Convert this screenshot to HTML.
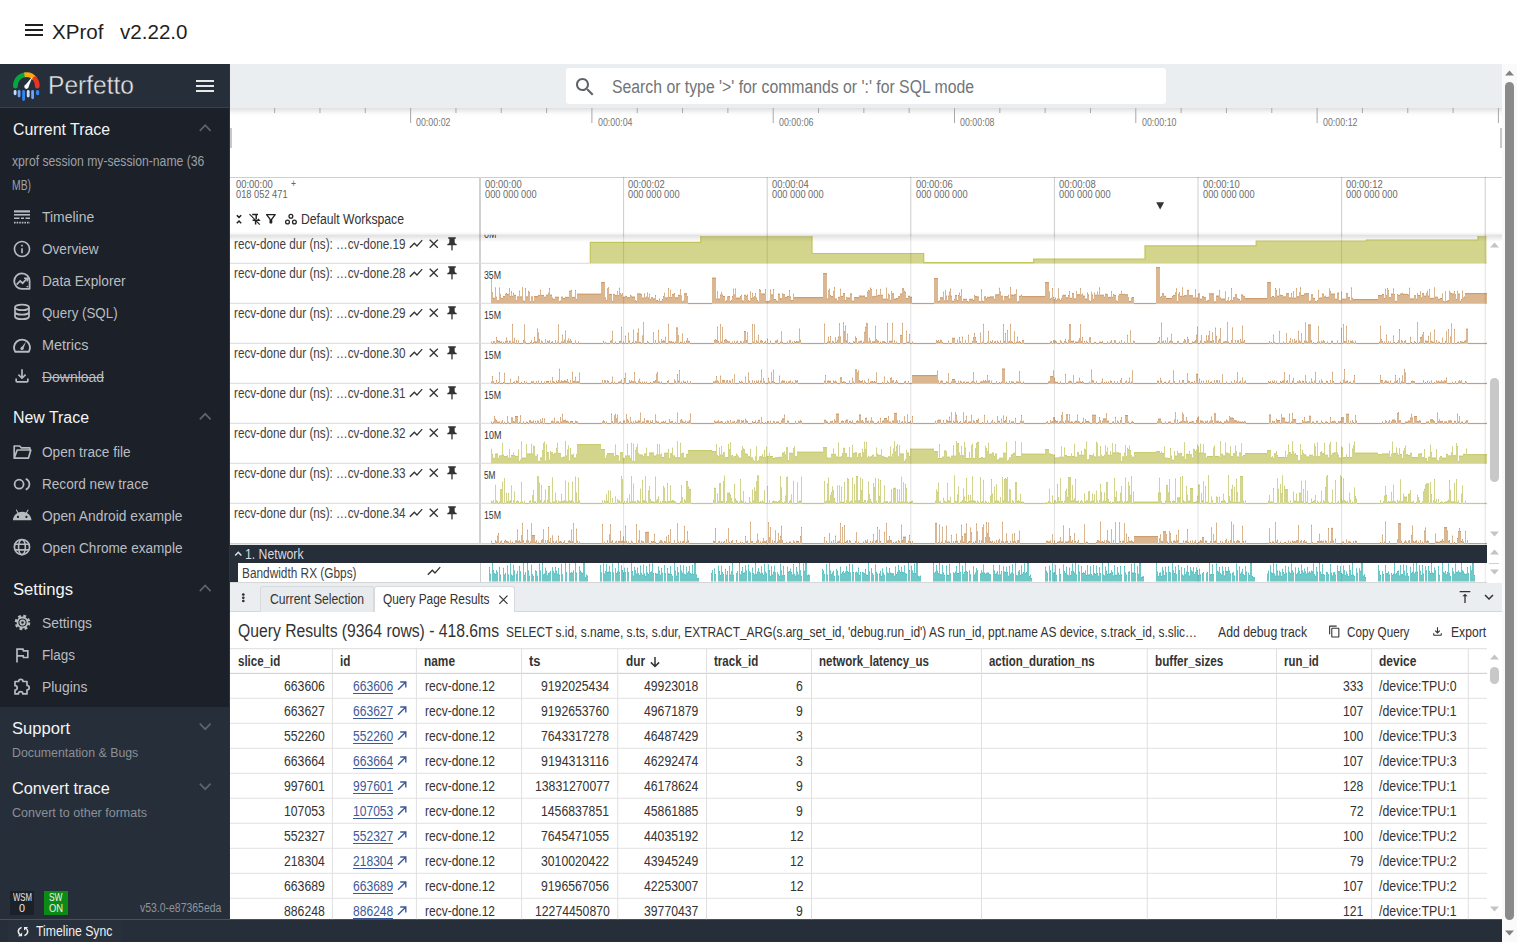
<!DOCTYPE html><html><head><meta charset="utf-8"><style>
html,body{margin:0;padding:0;width:1517px;height:942px;overflow:hidden;background:#fff;font-family:"Liberation Sans", sans-serif;}
.t{position:absolute;white-space:nowrap;transform-origin:0 0;}
.r{position:absolute;}
</style></head><body>
<div class="r" style="left:0px;top:0px;width:1517px;height:64px;background:#fff;"></div>
<div class="r" style="left:25px;top:23.8px;width:18px;height:2.1px;background:#1f1f1f;"></div>
<div class="r" style="left:25px;top:28.9px;width:18px;height:2.1px;background:#1f1f1f;"></div>
<div class="r" style="left:25px;top:34px;width:18px;height:2.1px;background:#1f1f1f;"></div>
<div class="t" style="left:52.00px;top:21.02px;font-size:21px;line-height:21px;color:#1f1f1f;transform:scaleX(0.9805);">XProf</div>
<div class="t" style="left:120.00px;top:21.02px;font-size:21px;line-height:21px;color:#1f1f1f;transform:scaleX(0.9799);">v2.22.0</div>
<div class="r" style="left:0px;top:64px;width:230px;height:43px;background:#262e3a;"></div>
<div class="r" style="left:0px;top:107px;width:230px;height:1px;background:#3b424d;"></div>
<div class="r" style="left:0px;top:108px;width:230px;height:599px;background:#1b2029;"></div>
<div class="r" style="left:0px;top:707px;width:230px;height:212px;background:#262e3a;"></div>
<div class="r" style="left:228.5px;top:64px;width:1.5px;height:855px;background:#2c333e;"></div>
<svg class="r" style="left:0px;top:60px;" width="50" height="50" viewBox="0 60 50 50"><path d="M15.46 86.17 A10.9 10.9 0 0 1 24.46 74.87" fill="none" stroke="#04a640" stroke-width="4.8" stroke-linecap="round"/><path d="M24.46 74.87 A10.9 10.9 0 0 1 34.94 78.89" fill="none" stroke="#fbac04" stroke-width="4.8" stroke-linecap="butt"/><path d="M34.94 78.89 A10.9 10.9 0 0 1 37.24 86.17" fill="none" stroke="#ea3323" stroke-width="4.8" stroke-linecap="round"/><path d="M24.4 86.0 L32.6 76.4 L28.3 87.6 Z" fill="#fafafa"/><circle cx="26.4" cy="86.8" r="2.1" fill="#fafafa"/><line x1="15.1" y1="91.40" x2="15.1" y2="93.80" stroke="#c6dcff" stroke-width="2.8" stroke-linecap="round"/><line x1="19.1" y1="91.40" x2="19.1" y2="96.10" stroke="#6ea2f7" stroke-width="2.8" stroke-linecap="round"/><line x1="23.6" y1="91.40" x2="23.6" y2="99.50" stroke="#2f86f6" stroke-width="2.8" stroke-linecap="round"/><line x1="28.2" y1="91.40" x2="28.2" y2="96.10" stroke="#c6dcff" stroke-width="2.8" stroke-linecap="round"/><line x1="32.6" y1="91.40" x2="32.6" y2="97.80" stroke="#6ea2f7" stroke-width="2.8" stroke-linecap="round"/><line x1="37.6" y1="91.60" x2="37.6" y2="93.60" stroke="#2f86f6" stroke-width="3.2" stroke-linecap="round"/></svg>
<div class="t" style="left:48.00px;top:72.83px;font-size:25px;line-height:25px;color:#e6e6e6;transform:scaleX(0.9823);-webkit-text-stroke:0.4px #262e3a;">Perfetto</div>
<div class="r" style="left:196px;top:79.7px;width:18.2px;height:2.1px;background:#e8e8e8;"></div>
<div class="r" style="left:196px;top:85px;width:18.2px;height:2.1px;background:#e8e8e8;"></div>
<div class="r" style="left:196px;top:90.2px;width:18.2px;height:2.1px;background:#e8e8e8;"></div>
<div class="t" style="left:12.50px;top:121.65px;font-size:16px;line-height:16px;color:#f4f4f4;transform:scaleX(0.9917);">Current Trace</div>
<svg class="r" style="left:0px;top:0px;" width="230" height="942" viewBox="0 0 230 942"><path d="M199.8 130.8 L205.2 125.2 L210.6 130.8" fill="none" stroke="#5d646e" stroke-width="1.7"/></svg>
<div class="t" style="left:12.20px;top:153.30px;font-size:15px;line-height:15px;color:#9da1a6;transform:scaleX(0.8122);">xprof session my-session-name (36</div>
<div class="t" style="left:12.20px;top:177.30px;font-size:15px;line-height:15px;color:#9da1a6;transform:scaleX(0.6910);">MB)</div>
<div class="t" style="left:42.20px;top:209.85px;font-size:14px;line-height:14px;color:#babdc1;transform:scaleX(0.9964);">Timeline</div>
<div class="t" style="left:42.20px;top:241.85px;font-size:14px;line-height:14px;color:#babdc1;transform:scaleX(0.9701);">Overview</div>
<div class="t" style="left:42.20px;top:273.85px;font-size:14px;line-height:14px;color:#babdc1;transform:scaleX(0.9767);">Data Explorer</div>
<div class="t" style="left:42.20px;top:305.85px;font-size:14px;line-height:14px;color:#babdc1;transform:scaleX(0.9527);">Query (SQL)</div>
<div class="t" style="left:42.20px;top:337.85px;font-size:14px;line-height:14px;color:#babdc1;transform:scaleX(1.0308);">Metrics</div>
<div class="t" style="left:42.20px;top:369.85px;font-size:14px;line-height:14px;color:#babdc1;transform:scaleX(0.9958);">Download</div>
<div class="r" style="left:42px;top:376.5px;width:62px;height:1.2px;background:#babdc1;"></div>
<svg class="r" style="left:14px;top:210px;" width="16" height="14" viewBox="0 0 16 14"><rect x="0" y="0.3" width="16" height="2.2" fill="#b8bbbf"/><rect x="0" y="4" width="16" height="1.6" fill="#b8bbbf"/><path d="M0 8.3h5.5M7 8.3h3M11.5 8.3h4.5" stroke="#b8bbbf" stroke-width="1.6"/><path d="M0 12.6h16" stroke="#b8bbbf" stroke-width="1.6" stroke-dasharray="1.6 1"/></svg>
<svg class="r" style="left:12px;top:239px;overflow:visible;" width="20" height="20" viewBox="0 0 24 24"><path d="M11 7h2v2h-2zm0 4h2v6h-2zm1-9C6.48 2 2 6.48 2 12s4.48 10 10 10 10-4.48 10-10S17.52 2 12 2zm0 18c-4.41 0-8-3.59-8-8s3.59-8 8-8 8 3.59 8 8-3.59 8-8 8z" fill="#b8bbbf"/></svg>
<svg class="r" style="left:0px;top:0px;" width="230" height="942" viewBox="0 0 230 942"><path d="M29.6 281.2 V288.8 H21.9 A7.7 7.7 0 1 1 29.6 281.2 Z" fill="none" stroke="#b8bbbf" stroke-width="1.8" stroke-linejoin="round"/><path d="M16.6 284.6 L20.2 281 L22.6 283.2 L26.6 279" fill="none" stroke="#b8bbbf" stroke-width="1.7"/><path d="M24.0 278.2 h3.3 v3.3" fill="none" stroke="#b8bbbf" stroke-width="1.6"/><circle cx="27.4" cy="286.6" r="0.9" fill="#b8bbbf"/></svg>
<svg class="r" style="left:13px;top:303px;" width="18" height="20" viewBox="0 0 18 20"><ellipse cx="9" cy="4.4" rx="7" ry="2.8" fill="none" stroke="#b8bbbf" stroke-width="1.7"/><path d="M2 4.4v9c0 1.55 3.1 2.8 7 2.8s7-1.25 7-2.8v-9M2 8.9c0 1.55 3.1 2.8 7 2.8s7-1.25 7-2.8" fill="none" stroke="#b8bbbf" stroke-width="1.7"/></svg>
<svg class="r" style="left:12px;top:335px;" width="20" height="20" viewBox="0 0 20 20"><path d="M3.2 16.8 A8 8 0 1 1 16.8 16.8 Z" fill="none" stroke="#b8bbbf" stroke-width="1.9" stroke-linejoin="round"/><path d="M9 13 L14 6.5 L11.2 14.2 Z" fill="#b8bbbf"/><circle cx="10" cy="13.4" r="1.6" fill="#b8bbbf"/></svg>
<svg class="r" style="left:12px;top:366px;overflow:visible;" width="20" height="20" viewBox="0 0 24 24"><path d="M18 15v3H6v-3H4v3c0 1.1.9 2 2 2h12c1.1 0 2-.9 2-2v-3h-2zm-1-4l-1.41-1.41L13 12.17V4h-2v8.17L8.41 9.59 7 11l5 5 5-5z" fill="#b8bbbf"/></svg>
<div class="t" style="left:12.50px;top:410.25px;font-size:16px;line-height:16px;color:#f4f4f4;transform:scaleX(0.9938);">New Trace</div>
<svg class="r" style="left:0px;top:0px;" width="230" height="942" viewBox="0 0 230 942"><path d="M199.8 419.4 L205.2 413.8 L210.6 419.4" fill="none" stroke="#5d646e" stroke-width="1.7"/></svg>
<div class="t" style="left:42.20px;top:444.55px;font-size:14px;line-height:14px;color:#babdc1;transform:scaleX(0.9731);">Open trace file</div>
<div class="t" style="left:42.20px;top:476.85px;font-size:14px;line-height:14px;color:#babdc1;transform:scaleX(0.9707);">Record new trace</div>
<div class="t" style="left:42.20px;top:508.75px;font-size:14px;line-height:14px;color:#babdc1;transform:scaleX(0.9864);">Open Android example</div>
<div class="t" style="left:42.20px;top:540.65px;font-size:14px;line-height:14px;color:#babdc1;transform:scaleX(0.9707);">Open Chrome example</div>
<svg class="r" style="left:0px;top:0px;" width="230" height="942" viewBox="0 0 230 942"><path d="M14.2 458.2V446h5.4l1.8 1.8h8.4v2.6M14.2 458.2h14.2l2.4-8.2H17.2z" fill="none" stroke="#b8bbbf" stroke-width="1.7" stroke-linejoin="round"/></svg>
<svg class="r" style="left:0px;top:0px;" width="230" height="942" viewBox="0 0 230 942"><circle cx="19.1" cy="484.2" r="4.5" fill="none" stroke="#b8bbbf" stroke-width="1.8"/><path d="M25.7 478.8 A5.8 5.8 0 0 1 25.7 489.6" fill="none" stroke="#b8bbbf" stroke-width="1.8"/></svg>
<svg class="r" style="left:11.95px;top:505.1px;overflow:visible;" width="20.4" height="20.4" viewBox="0 0 24 24"><path d="M17.6 9.48l1.84-3.18c.16-.31.04-.69-.26-.85-.29-.15-.65-.06-.83.22l-1.88 3.24c-2.86-1.21-6.08-1.21-8.94 0L5.65 5.67c-.19-.29-.58-.38-.87-.2-.28.18-.37.54-.22.83L6.4 9.48C3.3 11.25 1.28 14.44 1 18h22c-.28-3.56-2.3-6.75-5.4-8.52zM7 15.25c-.69 0-1.25-.56-1.25-1.25s.56-1.25 1.25-1.25 1.25.56 1.25 1.25-.56 1.25-1.25 1.25zm10 0c-.69 0-1.25-.56-1.25-1.25s.56-1.25 1.25-1.25 1.25.56 1.25 1.25-.56 1.25-1.25 1.25z" fill="#b8bbbf"/></svg>
<svg class="r" style="left:0px;top:0px;" width="230" height="942" viewBox="0 0 230 942"><circle cx="21.95" cy="547.1" r="7.6" fill="none" stroke="#b8bbbf" stroke-width="1.7"/><ellipse cx="21.95" cy="547.1" rx="3.4" ry="7.6" fill="none" stroke="#b8bbbf" stroke-width="1.6"/><path d="M14.6 544.3h14.7M14.6 549.9h14.7" stroke="#b8bbbf" stroke-width="1.6"/></svg>
<div class="t" style="left:12.50px;top:581.95px;font-size:16px;line-height:16px;color:#f4f4f4;transform:scaleX(1.0378);">Settings</div>
<svg class="r" style="left:0px;top:0px;" width="230" height="942" viewBox="0 0 230 942"><path d="M199.8 591.1 L205.2 585.5 L210.6 591.1" fill="none" stroke="#5d646e" stroke-width="1.7"/></svg>
<div class="t" style="left:42.20px;top:615.65px;font-size:14px;line-height:14px;color:#babdc1;transform:scaleX(0.9884);">Settings</div>
<div class="t" style="left:42.20px;top:647.65px;font-size:14px;line-height:14px;color:#babdc1;transform:scaleX(0.9639);">Flags</div>
<div class="t" style="left:42.20px;top:679.65px;font-size:14px;line-height:14px;color:#babdc1;transform:scaleX(0.9909);">Plugins</div>
<svg class="r" style="left:12.5px;top:613px;" width="19" height="19" viewBox="0 0 19 19"><circle cx="9.5" cy="9.5" r="6.2" fill="none" stroke="#b8bbbf" stroke-width="3.2" stroke-dasharray="2.6 2.27"/><circle cx="9.5" cy="9.5" r="5" fill="none" stroke="#b8bbbf" stroke-width="1.8"/><circle cx="9.5" cy="9.5" r="2.2" fill="none" stroke="#b8bbbf" stroke-width="1.8"/></svg>
<svg class="r" style="left:12px;top:645px;overflow:visible;" width="20" height="20" viewBox="0 0 24 24"><path d="M12.36 6l.4 2H18v6h-3.36l-.4-2H7V6h5.36M14 4H5v17h2v-7h5.6l.4 2h7V6h-5.6L14 4z" fill="#b8bbbf"/></svg>
<svg class="r" style="left:12.5px;top:676px;" width="19" height="19" viewBox="0 0 19 19"><path d="M2 5.5h3.6a2.2 2.2 0 1 1 4.4 0h4v4a2.2 2.2 0 1 1 0 4.4v4H9.8a2.2 2.2 0 1 0-4.4 0H2v-3.8a2.2 2.2 0 1 0 0-4.4z" fill="none" stroke="#b8bbbf" stroke-width="1.7" stroke-linejoin="round"/></svg>
<div class="t" style="left:12.00px;top:720.55px;font-size:16px;line-height:16px;color:#f4f4f4;transform:scaleX(1.0350);">Support</div>
<svg class="r" style="left:0px;top:0px;" width="230" height="942" viewBox="0 0 230 942"><path d="M199.8 723.6 L205.2 729.2 L210.6 723.6" fill="none" stroke="#5d646e" stroke-width="1.7"/></svg>
<div class="t" style="left:12.00px;top:746.74px;font-size:12px;line-height:12px;color:#8a9097;transform:scaleX(1.0290);">Documentation &amp; Bugs</div>
<div class="t" style="left:12.00px;top:780.75px;font-size:16px;line-height:16px;color:#f4f4f4;transform:scaleX(1.0173);">Convert trace</div>
<svg class="r" style="left:0px;top:0px;" width="230" height="942" viewBox="0 0 230 942"><path d="M199.8 783.6 L205.2 789.2 L210.6 783.6" fill="none" stroke="#5d646e" stroke-width="1.7"/></svg>
<div class="t" style="left:12.00px;top:806.84px;font-size:12px;line-height:12px;color:#8a9097;transform:scaleX(1.0434);">Convert to other formats</div>
<div class="r" style="left:10px;top:891px;width:24px;height:24px;background:#1b2029;"></div>
<div class="t" style="left:12.50px;top:893.03px;font-size:10px;line-height:10px;color:#e8e8e8;transform:scaleX(0.7774);">WSM</div>
<div class="t" style="left:18.50px;top:903.53px;font-size:10px;line-height:10px;color:#e8e8e8;transform:scaleX(1.0788);">0</div>
<div class="r" style="left:44px;top:891px;width:23.6px;height:24px;background:#0b8a16;"></div>
<div class="t" style="left:49.00px;top:893.03px;font-size:10px;line-height:10px;color:#f2f2f2;transform:scaleX(0.8381);">SW</div>
<div class="t" style="left:49.00px;top:903.53px;font-size:10px;line-height:10px;color:#f2f2f2;transform:scaleX(0.9333);">ON</div>
<div class="t" style="left:139.70px;top:901.84px;font-size:12px;line-height:12px;color:#8f949a;transform:scaleX(0.8703);">v53.0-e87365eda</div>
<div class="r" style="left:0px;top:919px;width:1503px;height:23px;background:#262e3a;"></div>
<div class="r" style="left:0px;top:919px;width:1503px;height:1px;background:#4a515b;"></div>
<div class="r" style="left:8px;top:920px;width:112.5px;height:22px;background:#28303c;"></div>
<div class="t" style="left:36.00px;top:924.15px;font-size:14px;line-height:14px;color:#f0f0f0;transform:scaleX(0.8741);">Timeline Sync</div>
<svg class="r" style="left:0px;top:0px;" width="240" height="942" viewBox="0 0 240 942"><path d="M21.6 927.4 Q18.1 928.9 18.3 931.6 Q18.5 933.8 20.3 935" fill="none" stroke="#ececec" stroke-width="1.5"/><path d="M17.9 936.2 H22.1 V932.6Z" fill="#ececec"/><path d="M24.4 935.6 Q27.9 934.1 27.7 931.4 Q27.5 929.2 25.7 928" fill="none" stroke="#ececec" stroke-width="1.5"/><path d="M24.0 926.9 H28.2 L24.0 930.4Z" fill="#ececec"/></svg>
<div class="r" style="left:230px;top:64px;width:1272px;height:44px;background:#ebeef0;"></div>
<div class="r" style="left:566px;top:68px;width:600px;height:36px;background:#fff;border-radius:3px;"></div>
<svg class="r" style="left:572.5px;top:74.5px;overflow:visible;" width="24" height="24" viewBox="0 0 24 24"><path d="M15.5 14h-.79l-.28-.27C15.41 12.59 16 11.11 16 9.5 16 5.91 13.09 3 9.5 3S3 5.91 3 9.5 5.91 16 9.5 16c1.61 0 3.09-.59 4.23-1.57l.27.28v.79l5 4.99L20.49 19l-4.99-5zm-6 0C7.01 14 5 11.99 5 9.5S7.01 5 9.5 5 14 7.01 14 9.5 11.99 14 9.5 14z" fill="#5f6368"/></svg>
<div class="t" style="left:611.50px;top:77.66px;font-size:18px;line-height:18px;color:#707579;transform:scaleX(0.8770);">Search or type '&gt;' for commands or ':' for SQL mode</div>
<div class="r" style="left:230px;top:108px;width:1272px;height:8px;background:linear-gradient(rgba(0,0,0,0.12),rgba(0,0,0,0.03) 60%,rgba(0,0,0,0));"></div>
<svg class="r" style="left:0px;top:0px;" width="1517" height="942" viewBox="0 0 1517 942"><rect x="274.12" y="108" width="1" height="5" fill="#a8a8a8"/><rect x="319.45" y="108" width="1" height="5" fill="#a8a8a8"/><rect x="364.78" y="108" width="1" height="5" fill="#a8a8a8"/><rect x="410.10" y="108" width="1" height="15" fill="#a8a8a8"/><rect x="455.43" y="108" width="1" height="5" fill="#a8a8a8"/><rect x="500.75" y="108" width="1" height="5" fill="#a8a8a8"/><rect x="546.08" y="108" width="1" height="5" fill="#a8a8a8"/><rect x="591.40" y="108" width="1" height="15" fill="#a8a8a8"/><rect x="636.73" y="108" width="1" height="5" fill="#a8a8a8"/><rect x="682.05" y="108" width="1" height="5" fill="#a8a8a8"/><rect x="727.38" y="108" width="1" height="5" fill="#a8a8a8"/><rect x="772.70" y="108" width="1" height="15" fill="#a8a8a8"/><rect x="818.03" y="108" width="1" height="5" fill="#a8a8a8"/><rect x="863.35" y="108" width="1" height="5" fill="#a8a8a8"/><rect x="908.67" y="108" width="1" height="5" fill="#a8a8a8"/><rect x="954.00" y="108" width="1" height="15" fill="#a8a8a8"/><rect x="999.33" y="108" width="1" height="5" fill="#a8a8a8"/><rect x="1044.65" y="108" width="1" height="5" fill="#a8a8a8"/><rect x="1089.98" y="108" width="1" height="5" fill="#a8a8a8"/><rect x="1135.30" y="108" width="1" height="15" fill="#a8a8a8"/><rect x="1180.62" y="108" width="1" height="5" fill="#a8a8a8"/><rect x="1225.95" y="108" width="1" height="5" fill="#a8a8a8"/><rect x="1271.28" y="108" width="1" height="5" fill="#a8a8a8"/><rect x="1316.60" y="108" width="1" height="15" fill="#a8a8a8"/><rect x="1361.92" y="108" width="1" height="5" fill="#a8a8a8"/><rect x="1407.25" y="108" width="1" height="5" fill="#a8a8a8"/><rect x="1452.58" y="108" width="1" height="5" fill="#a8a8a8"/><rect x="1497.90" y="108" width="1" height="15" fill="#a8a8a8"/></svg>
<div class="t" style="left:416.40px;top:117.11px;font-size:10.5px;line-height:10.5px;color:#777;transform:scaleX(0.8441);">00:00:02</div>
<div class="t" style="left:597.70px;top:117.11px;font-size:10.5px;line-height:10.5px;color:#777;transform:scaleX(0.8441);">00:00:04</div>
<div class="t" style="left:779.00px;top:117.11px;font-size:10.5px;line-height:10.5px;color:#777;transform:scaleX(0.8441);">00:00:06</div>
<div class="t" style="left:960.30px;top:117.11px;font-size:10.5px;line-height:10.5px;color:#777;transform:scaleX(0.8441);">00:00:08</div>
<div class="t" style="left:1141.60px;top:117.11px;font-size:10.5px;line-height:10.5px;color:#777;transform:scaleX(0.8441);">00:00:10</div>
<div class="t" style="left:1322.90px;top:117.11px;font-size:10.5px;line-height:10.5px;color:#777;transform:scaleX(0.8441);">00:00:12</div>
<div class="r" style="left:230px;top:128px;width:2px;height:20px;background:#c8c8c8;"></div>
<div class="r" style="left:1499.5px;top:128px;width:2px;height:20px;background:#c8c8c8;"></div>
<div class="r" style="left:230px;top:177px;width:1272px;height:59px;background:#fff;"></div>
<div class="r" style="left:230px;top:177px;width:1272px;height:1px;background:#cfcfcf;"></div>
<div class="r" style="left:479.2px;top:177px;width:1.6px;height:367px;background:#d2d2d2;"></div>
<div class="t" style="left:236.30px;top:179.31px;font-size:10.5px;line-height:10.5px;color:#666;transform:scaleX(0.8979);">00:00:00</div>
<div class="t" style="left:236.30px;top:188.81px;font-size:10.5px;line-height:10.5px;color:#666;transform:scaleX(0.8837);">018 052 471</div>
<div class="t" style="left:291.00px;top:178.49px;font-size:11px;line-height:11px;color:#666;transform:scaleX(0.7784);">+</div>
<div class="t" style="left:484.80px;top:179.31px;font-size:10.5px;line-height:10.5px;color:#6b6b6b;transform:scaleX(0.8979);">00:00:00</div>
<div class="t" style="left:484.80px;top:188.81px;font-size:10.5px;line-height:10.5px;color:#6b6b6b;transform:scaleX(0.8837);">000 000 000</div>
<div class="t" style="left:628.40px;top:179.31px;font-size:10.5px;line-height:10.5px;color:#6b6b6b;transform:scaleX(0.8979);">00:00:02</div>
<div class="t" style="left:628.40px;top:188.81px;font-size:10.5px;line-height:10.5px;color:#6b6b6b;transform:scaleX(0.8837);">000 000 000</div>
<div class="t" style="left:772.00px;top:179.31px;font-size:10.5px;line-height:10.5px;color:#6b6b6b;transform:scaleX(0.8979);">00:00:04</div>
<div class="t" style="left:772.00px;top:188.81px;font-size:10.5px;line-height:10.5px;color:#6b6b6b;transform:scaleX(0.8837);">000 000 000</div>
<div class="t" style="left:915.60px;top:179.31px;font-size:10.5px;line-height:10.5px;color:#6b6b6b;transform:scaleX(0.8979);">00:00:06</div>
<div class="t" style="left:915.60px;top:188.81px;font-size:10.5px;line-height:10.5px;color:#6b6b6b;transform:scaleX(0.8837);">000 000 000</div>
<div class="t" style="left:1059.20px;top:179.31px;font-size:10.5px;line-height:10.5px;color:#6b6b6b;transform:scaleX(0.8979);">00:00:08</div>
<div class="t" style="left:1059.20px;top:188.81px;font-size:10.5px;line-height:10.5px;color:#6b6b6b;transform:scaleX(0.8837);">000 000 000</div>
<div class="t" style="left:1202.80px;top:179.31px;font-size:10.5px;line-height:10.5px;color:#6b6b6b;transform:scaleX(0.8979);">00:00:10</div>
<div class="t" style="left:1202.80px;top:188.81px;font-size:10.5px;line-height:10.5px;color:#6b6b6b;transform:scaleX(0.8837);">000 000 000</div>
<div class="t" style="left:1346.40px;top:179.31px;font-size:10.5px;line-height:10.5px;color:#6b6b6b;transform:scaleX(0.8979);">00:00:12</div>
<div class="t" style="left:1346.40px;top:188.81px;font-size:10.5px;line-height:10.5px;color:#6b6b6b;transform:scaleX(0.8837);">000 000 000</div>
<svg class="r" style="left:0px;top:0px;" width="1517" height="942" viewBox="0 0 1517 942"><path d="M1156.2 202.3 H1164.1 L1160.15 209.6Z" fill="#333"/></svg>
<svg class="r" style="left:0px;top:0px;" width="1517" height="942" viewBox="0 0 1517 942"><path d="M236.8 215.2 L239 217.4 L241.2 215.2 M236.8 223.2 L239 221 L241.2 223.2" fill="none" stroke="#222" stroke-width="1.5"/><path d="M252.2 214.4 H258 M256.2 214.4 V219 M252.6 220.2 H259 L258 219 M255.6 220.2 V224.6" fill="none" stroke="#222" stroke-width="1.5"/><path d="M249.5 214.2 L259.8 224.6" stroke="#222" stroke-width="1.2"/><path d="M266.6 214.6 H275.2 L271.6 219.4 V222.8 H270.2 V219.4 Z" fill="none" stroke="#222" stroke-width="1.4" stroke-linejoin="round"/><circle cx="290.9" cy="216.2" r="1.9" fill="none" stroke="#222" stroke-width="1.3"/><circle cx="287.5" cy="222" r="1.9" fill="none" stroke="#222" stroke-width="1.3"/><circle cx="294.4" cy="222" r="1.9" fill="none" stroke="#222" stroke-width="1.3"/></svg>
<div class="t" style="left:300.70px;top:211.95px;font-size:14px;line-height:14px;color:#333;transform:scaleX(0.8727);">Default Workspace</div>
<svg class="r" style="left:0px;top:0px;" width="1517" height="942" viewBox="0 0 1517 942"><defs><clipPath id="tc"><rect x="480" y="236" width="1007" height="308"/></clipPath></defs><rect x="230" y="262.8" width="1257" height="1" fill="#dadada"/><rect x="230" y="302.8" width="1257" height="1" fill="#dadada"/><rect x="230" y="342.8" width="1257" height="1" fill="#dadada"/><rect x="230" y="382.8" width="1257" height="1" fill="#dadada"/><rect x="230" y="422.8" width="1257" height="1" fill="#dadada"/><rect x="230" y="462.8" width="1257" height="1" fill="#dadada"/><rect x="230" y="502.8" width="1257" height="1" fill="#dadada"/><rect x="230" y="543" width="1257" height="1.5" fill="#d0d0d0"/><g clip-path="url(#tc)"><path d="M590.3 263V242.4H700.8V235H812V253.5H923.7V262.6H1033.7V259.2H1145V245.8H1256.2V241H1366.5V240H1478V235H1486.5V263Z" fill="#d4d58d"/><path d="M590.3 263V242.4H700.8V235H812V253.5H923.7V262.6H1033.7V259.2H1145V245.8H1256.2V241H1366.5V240H1478V235H1486.5" fill="none" stroke="#c3c55c" stroke-width="1.2"/></g><g ><path d="M491 303.6V278.6H492V292.8H493V298.3H495V287.9H496V297.2H497V300.9H498V300.7H499V288.0H500V294.8H501V298.4H503V296.5H505V294.3H506V293.4H507V294.3H509V288.8H510V296.6H511V291.7H512V296.4H513V293.2H514V295.4H516V300.8H517V296.9H519V291.1H520V296.9H522V287.8H523V300.9H524V301.6H525V288.5H526V296.9H528V291.4H529V292.4H530V301.8H531V296.9H533V301.7H534V296.6H538V295.4H540V290.4H541V295.4H544V297.2H546V295.2H548V293.2H549V288.6H550V295.1H552V298.1H553V299.3H555V297.2H559V301.8H560V301.1H561V297.2H563V298.5H565V297.3H567V297.4H569V291.4H570V291.0H571V290.3H572V297.4H575V290.4H576V299.6H577V294.1H601V282.6H605V297.9H606V300.5H607V288.9H608V287.8H609V294.6H610V294.4H612V301.5H613V294.4H615V295.6H617V291.5H618V295.6H619V288.2H620V293.5H621V295.1H622V293.8H623V297.3H625V296.4H627V297.7H630V295.4H631V296.2H632V297.0H635V300.7H636V301.4H637V293.9H641V294.6H642V298.1H644V293.9H645V298.0H646V297.1H647V292.9H648V297.9H649V294.2H650V299.5H651V297.7H653V298.9H655V295.6H656V300.8H657V300.5H658V301.2H659V299.0H660V301.7H661V301.2H662V299.6H663V296.6H664V293.2H665V297.9H668V288.6H669V297.6H670V290.2H671V297.6H672V294.5H674V293.6H675V297.8H678V295.3H680V289.9H681V295.9H682V301.9H683V301.1H684V293.7H687V296.7H688V303.6H712V278.1H716V299.1H717V291.8H718V299.1H720V295.0H721V292.4H722V295.0H723V296.5H725V301.7H726V300.8H727V296.9H728V296.5H730V301.6H731V300.6H732V296.5H733V289.2H734V294.9H735V289.1H736V298.1H740V296.5H741V295.3H742V300.8H743V301.3H744V295.3H746V296.3H747V295.1H748V300.5H749V301.5H750V292.1H751V298.6H752V293.4H753V297.8H754V296.7H755V293.6H756V298.1H757V300.5H758V302.0H759V289.6H760V290.4H761V294.0H765V289.6H766V301.6H767V301.7H768V301.6H769V300.8H770V290.1H771V294.9H773V289.5H774V299.5H776V300.9H777V301.6H778V294.1H780V298.7H782V293.7H783V294.7H785V297.4H787V296.5H789V290.6H790V296.9H791V300.6H792V300.5H793V294.4H794V297.6H823V273.6H827V298.9H828V290.8H829V289.1H830V295.6H831V296.6H833V291.6H834V287.7H835V299.0H837V301.0H838V297.3H840V289.3H841V296.4H843V293.6H845V300.5H846V297.4H847V298.0H850V293.9H852V301.3H853V301.1H854V297.6H859V296.0H861V296.1H865V297.7H867V292.1H868V290.4H869V291.0H870V288.1H871V289.5H872V296.8H874V296.4H876V289.9H877V295.9H878V295.3H880V289.5H881V295.3H883V299.2H886V288.1H887V299.2H888V294.1H889V295.4H890V300.6H891V291.7H892V293.8H894V299.1H896V298.6H898V296.7H900V294.0H902V288.8H903V288.7H904V291.2H905V292.4H906V298.6H908V296.3H910V297.3H912V303.6H934V278.6H938V301.6H939V301.0H940V297.8H943V292.2H944V300.9H945V290.8H946V296.1H947V300.7H948V296.1H949V292.1H950V289.0H951V296.1H952V301.2H953V301.3H954V299.4H955V295.5H957V300.6H958V295.5H959V293.1H960V296.7H961V289.7H962V301.7H963V299.3H967V301.5H968V302.0H969V299.3H973V300.5H974V295.6H975V296.6H977V296.9H979V301.7H980V301.8H981V289.8H982V301.1H983V301.8H984V296.9H985V296.8H986V298.8H987V297.3H990V296.9H994V299.4H995V294.9H997V294.7H999V288.3H1000V292.0H1001V296.2H1003V300.9H1004V296.7H1008V295.3H1009V299.0H1010V287.7H1011V295.0H1012V295.1H1013V295.4H1014V294.7H1016V289.9H1017V302.0H1018V301.6H1019V296.3H1021V295.1H1022V296.6H1045V282.6H1049V292.0H1050V299.0H1051V298.3H1052V288.6H1053V297.4H1054V299.5H1055V298.1H1056V300.4H1057V299.1H1058V288.9H1059V299.1H1060V300.5H1061V298.7H1062V295.9H1063V295.3H1066V297.8H1068V295.5H1069V291.5H1070V298.4H1072V293.6H1074V298.9H1076V291.8H1077V294.8H1080V288.7H1081V295.2H1082V294.1H1083V296.1H1085V299.1H1087V293.1H1088V294.9H1089V300.9H1090V301.7H1091V292.2H1092V294.9H1093V299.4H1094V293.0H1095V295.2H1097V292.2H1098V295.2H1099V287.9H1100V295.2H1104V297.2H1105V294.2H1107V294.7H1108V297.7H1109V297.3H1111V291.7H1112V297.3H1113V294.5H1114V295.4H1116V300.9H1117V301.8H1118V296.1H1119V294.4H1121V291.4H1122V294.4H1125V294.8H1128V297.7H1129V301.6H1130V301.4H1131V298.2H1132V297.5H1134V303.6H1156V267.6H1160V297.4H1161V296.5H1162V293.7H1164V296.3H1166V298.5H1172V296.5H1173V295.5H1175V292.9H1176V288.9H1177V301.7H1178V294.2H1179V292.5H1180V296.3H1182V287.9H1183V296.3H1184V295.7H1187V290.2H1188V290.5H1189V295.7H1193V298.1H1195V289.8H1196V298.1H1198V293.9H1200V299.2H1202V296.7H1204V297.7H1206V301.5H1207V300.8H1208V300.4H1209V293.8H1214V301.9H1216V296.1H1219V290.6H1220V298.0H1221V299.1H1225V292.0H1226V301.7H1227V300.7H1228V297.8H1229V301.7H1230V300.4H1231V288.6H1232V300.8H1233V297.8H1235V294.8H1237V298.3H1238V299.4H1240V301.3H1241V295.0H1243V296.2H1244V296.7H1245V298.6H1267V282.6H1271V297.7H1272V296.5H1274V297.7H1275V288.5H1276V290.6H1277V296.2H1279V288.9H1280V295.1H1281V295.6H1283V296.9H1286V293.7H1289V297.9H1291V293.6H1292V297.9H1293V291.8H1294V298.3H1295V298.2H1296V288.7H1297V296.8H1299V292.8H1300V287.8H1301V295.4H1304V293.9H1306V293.5H1307V293.8H1309V301.7H1310V300.9H1311V294.8H1313V298.4H1315V301.4H1316V301.8H1317V300.5H1318V290.6H1319V298.3H1320V298.0H1322V294.1H1324V297.0H1325V296.1H1326V297.5H1328V297.2H1329V288.9H1330V291.5H1331V294.1H1335V299.2H1337V293.2H1338V293.0H1339V300.7H1340V300.9H1341V292.1H1342V299.2H1346V293.7H1348V297.6H1350V301.0H1351V287.9H1352V298.2H1353V299.6H1378V295.6H1382V294.5H1384V298.5H1385V289.2H1386V295.7H1387V288.5H1388V290.5H1389V297.7H1391V294.1H1393V288.9H1394V294.5H1395V301.7H1396V301.3H1397V294.5H1398V295.3H1400V294.0H1402V293.3H1403V294.3H1405V294.4H1408V295.0H1409V288.3H1410V298.9H1414V295.7H1416V299.3H1417V293.7H1418V295.5H1420V291.9H1421V298.0H1422V293.6H1424V296.1H1426V293.3H1427V291.3H1428V296.1H1429V289.4H1430V298.4H1434V287.9H1435V297.2H1438V299.3H1440V298.5H1442V294.0H1443V301.3H1444V301.9H1445V291.9H1446V301.5H1447V301.0H1448V300.6H1449V291.2H1450V293.0H1451V293.5H1452V294.0H1454V291.6H1455V294.7H1456V299.4H1457V291.3H1458V294.1H1460V301.3H1461V299.5H1462V291.0H1463V298.0H1464V297.0H1465V293.6H1487V303.6Z" fill="#dab691"/><path d="M491 278.6H492M492 292.8H493M493 298.3H495M495 287.9H496M496 297.2H497M497 300.9H498M498 300.7H499M499 288.0H500M500 294.8H501M501 298.4H503M503 296.5H505M505 294.3H506M506 293.4H507M507 294.3H509M509 288.8H510M510 296.6H511M511 291.7H512M512 296.4H513M513 293.2H514M514 295.4H516M516 300.8H517M517 296.9H519M519 291.1H520M520 296.9H522M522 287.8H523M523 300.9H524M524 301.6H525M525 288.5H526M526 296.9H528M528 291.4H529M529 292.4H530M530 301.8H531M531 296.9H533M533 301.7H534M534 296.6H538M538 295.4H540M540 290.4H541M541 295.4H544M544 297.2H546M546 295.2H548M548 293.2H549M549 288.6H550M550 295.1H552M552 298.1H553M553 299.3H555M555 297.2H559M559 301.8H560M560 301.1H561M561 297.2H563M563 298.5H565M565 297.3H567M567 297.4H569M569 291.4H570M570 291.0H571M571 290.3H572M572 297.4H575M575 290.4H576M576 299.6H577M577 294.1H601M601 282.6H605M605 297.9H606M606 300.5H607M607 288.9H608M608 287.8H609M609 294.6H610M610 294.4H612M612 301.5H613M613 294.4H615M615 295.6H617M617 291.5H618M618 295.6H619M619 288.2H620M620 293.5H621M621 295.1H622M622 293.8H623M623 297.3H625M625 296.4H627M627 297.7H630M630 295.4H631M631 296.2H632M632 297.0H635M635 300.7H636M636 301.4H637M637 293.9H641M641 294.6H642M642 298.1H644M644 293.9H645M645 298.0H646M646 297.1H647M647 292.9H648M648 297.9H649M649 294.2H650M650 299.5H651M651 297.7H653M653 298.9H655M655 295.6H656M656 300.8H657M657 300.5H658M658 301.2H659M659 299.0H660M660 301.7H661M661 301.2H662M662 299.6H663M663 296.6H664M664 293.2H665M665 297.9H668M668 288.6H669M669 297.6H670M670 290.2H671M671 297.6H672M672 294.5H674M674 293.6H675M675 297.8H678M678 295.3H680M680 289.9H681M681 295.9H682M682 301.9H683M683 301.1H684M684 293.7H687M687 296.7H688M688 303.6H712M712 278.1H716M716 299.1H717M717 291.8H718M718 299.1H720M720 295.0H721M721 292.4H722M722 295.0H723M723 296.5H725M725 301.7H726M726 300.8H727M727 296.9H728M728 296.5H730M730 301.6H731M731 300.6H732M732 296.5H733M733 289.2H734M734 294.9H735M735 289.1H736M736 298.1H740M740 296.5H741M741 295.3H742M742 300.8H743M743 301.3H744M744 295.3H746M746 296.3H747M747 295.1H748M748 300.5H749M749 301.5H750M750 292.1H751M751 298.6H752M752 293.4H753M753 297.8H754M754 296.7H755M755 293.6H756M756 298.1H757M757 300.5H758M758 302.0H759M759 289.6H760M760 290.4H761M761 294.0H765M765 289.6H766M766 301.6H767M767 301.7H768M768 301.6H769M769 300.8H770M770 290.1H771M771 294.9H773M773 289.5H774M774 299.5H776M776 300.9H777M777 301.6H778M778 294.1H780M780 298.7H782M782 293.7H783M783 294.7H785M785 297.4H787M787 296.5H789M789 290.6H790M790 296.9H791M791 300.6H792M792 300.5H793M793 294.4H794M794 297.6H823M823 273.6H827M827 298.9H828M828 290.8H829M829 289.1H830M830 295.6H831M831 296.6H833M833 291.6H834M834 287.7H835M835 299.0H837M837 301.0H838M838 297.3H840M840 289.3H841M841 296.4H843M843 293.6H845M845 300.5H846M846 297.4H847M847 298.0H850M850 293.9H852M852 301.3H853M853 301.1H854M854 297.6H859M859 296.0H861M861 296.1H865M865 297.7H867M867 292.1H868M868 290.4H869M869 291.0H870M870 288.1H871M871 289.5H872M872 296.8H874M874 296.4H876M876 289.9H877M877 295.9H878M878 295.3H880M880 289.5H881M881 295.3H883M883 299.2H886M886 288.1H887M887 299.2H888M888 294.1H889M889 295.4H890M890 300.6H891M891 291.7H892M892 293.8H894M894 299.1H896M896 298.6H898M898 296.7H900M900 294.0H902M902 288.8H903M903 288.7H904M904 291.2H905M905 292.4H906M906 298.6H908M908 296.3H910M910 297.3H912M912 303.6H934M934 278.6H938M938 301.6H939M939 301.0H940M940 297.8H943M943 292.2H944M944 300.9H945M945 290.8H946M946 296.1H947M947 300.7H948M948 296.1H949M949 292.1H950M950 289.0H951M951 296.1H952M952 301.2H953M953 301.3H954M954 299.4H955M955 295.5H957M957 300.6H958M958 295.5H959M959 293.1H960M960 296.7H961M961 289.7H962M962 301.7H963M963 299.3H967M967 301.5H968M968 302.0H969M969 299.3H973M973 300.5H974M974 295.6H975M975 296.6H977M977 296.9H979M979 301.7H980M980 301.8H981M981 289.8H982M982 301.1H983M983 301.8H984M984 296.9H985M985 296.8H986M986 298.8H987M987 297.3H990M990 296.9H994M994 299.4H995M995 294.9H997M997 294.7H999M999 288.3H1000M1000 292.0H1001M1001 296.2H1003M1003 300.9H1004M1004 296.7H1008M1008 295.3H1009M1009 299.0H1010M1010 287.7H1011M1011 295.0H1012M1012 295.1H1013M1013 295.4H1014M1014 294.7H1016M1016 289.9H1017M1017 302.0H1018M1018 301.6H1019M1019 296.3H1021M1021 295.1H1022M1022 296.6H1045M1045 282.6H1049M1049 292.0H1050M1050 299.0H1051M1051 298.3H1052M1052 288.6H1053M1053 297.4H1054M1054 299.5H1055M1055 298.1H1056M1056 300.4H1057M1057 299.1H1058M1058 288.9H1059M1059 299.1H1060M1060 300.5H1061M1061 298.7H1062M1062 295.9H1063M1063 295.3H1066M1066 297.8H1068M1068 295.5H1069M1069 291.5H1070M1070 298.4H1072M1072 293.6H1074M1074 298.9H1076M1076 291.8H1077M1077 294.8H1080M1080 288.7H1081M1081 295.2H1082M1082 294.1H1083M1083 296.1H1085M1085 299.1H1087M1087 293.1H1088M1088 294.9H1089M1089 300.9H1090M1090 301.7H1091M1091 292.2H1092M1092 294.9H1093M1093 299.4H1094M1094 293.0H1095M1095 295.2H1097M1097 292.2H1098M1098 295.2H1099M1099 287.9H1100M1100 295.2H1104M1104 297.2H1105M1105 294.2H1107M1107 294.7H1108M1108 297.7H1109M1109 297.3H1111M1111 291.7H1112M1112 297.3H1113M1113 294.5H1114M1114 295.4H1116M1116 300.9H1117M1117 301.8H1118M1118 296.1H1119M1119 294.4H1121M1121 291.4H1122M1122 294.4H1125M1125 294.8H1128M1128 297.7H1129M1129 301.6H1130M1130 301.4H1131M1131 298.2H1132M1132 297.5H1134M1134 303.6H1156M1156 267.6H1160M1160 297.4H1161M1161 296.5H1162M1162 293.7H1164M1164 296.3H1166M1166 298.5H1172M1172 296.5H1173M1173 295.5H1175M1175 292.9H1176M1176 288.9H1177M1177 301.7H1178M1178 294.2H1179M1179 292.5H1180M1180 296.3H1182M1182 287.9H1183M1183 296.3H1184M1184 295.7H1187M1187 290.2H1188M1188 290.5H1189M1189 295.7H1193M1193 298.1H1195M1195 289.8H1196M1196 298.1H1198M1198 293.9H1200M1200 299.2H1202M1202 296.7H1204M1204 297.7H1206M1206 301.5H1207M1207 300.8H1208M1208 300.4H1209M1209 293.8H1214M1214 301.9H1216M1216 296.1H1219M1219 290.6H1220M1220 298.0H1221M1221 299.1H1225M1225 292.0H1226M1226 301.7H1227M1227 300.7H1228M1228 297.8H1229M1229 301.7H1230M1230 300.4H1231M1231 288.6H1232M1232 300.8H1233M1233 297.8H1235M1235 294.8H1237M1237 298.3H1238M1238 299.4H1240M1240 301.3H1241M1241 295.0H1243M1243 296.2H1244M1244 296.7H1245M1245 298.6H1267M1267 282.6H1271M1271 297.7H1272M1272 296.5H1274M1274 297.7H1275M1275 288.5H1276M1276 290.6H1277M1277 296.2H1279M1279 288.9H1280M1280 295.1H1281M1281 295.6H1283M1283 296.9H1286M1286 293.7H1289M1289 297.9H1291M1291 293.6H1292M1292 297.9H1293M1293 291.8H1294M1294 298.3H1295M1295 298.2H1296M1296 288.7H1297M1297 296.8H1299M1299 292.8H1300M1300 287.8H1301M1301 295.4H1304M1304 293.9H1306M1306 293.5H1307M1307 293.8H1309M1309 301.7H1310M1310 300.9H1311M1311 294.8H1313M1313 298.4H1315M1315 301.4H1316M1316 301.8H1317M1317 300.5H1318M1318 290.6H1319M1319 298.3H1320M1320 298.0H1322M1322 294.1H1324M1324 297.0H1325M1325 296.1H1326M1326 297.5H1328M1328 297.2H1329M1329 288.9H1330M1330 291.5H1331M1331 294.1H1335M1335 299.2H1337M1337 293.2H1338M1338 293.0H1339M1339 300.7H1340M1340 300.9H1341M1341 292.1H1342M1342 299.2H1346M1346 293.7H1348M1348 297.6H1350M1350 301.0H1351M1351 287.9H1352M1352 298.2H1353M1353 299.6H1378M1378 295.6H1382M1382 294.5H1384M1384 298.5H1385M1385 289.2H1386M1386 295.7H1387M1387 288.5H1388M1388 290.5H1389M1389 297.7H1391M1391 294.1H1393M1393 288.9H1394M1394 294.5H1395M1395 301.7H1396M1396 301.3H1397M1397 294.5H1398M1398 295.3H1400M1400 294.0H1402M1402 293.3H1403M1403 294.3H1405M1405 294.4H1408M1408 295.0H1409M1409 288.3H1410M1410 298.9H1414M1414 295.7H1416M1416 299.3H1417M1417 293.7H1418M1418 295.5H1420M1420 291.9H1421M1421 298.0H1422M1422 293.6H1424M1424 296.1H1426M1426 293.3H1427M1427 291.3H1428M1428 296.1H1429M1429 289.4H1430M1430 298.4H1434M1434 287.9H1435M1435 297.2H1438M1438 299.3H1440M1440 298.5H1442M1442 294.0H1443M1443 301.3H1444M1444 301.9H1445M1445 291.9H1446M1446 301.5H1447M1447 301.0H1448M1448 300.6H1449M1449 291.2H1450M1450 293.0H1451M1451 293.5H1452M1452 294.0H1454M1454 291.6H1455M1455 294.7H1456M1456 299.4H1457M1457 291.3H1458M1458 294.1H1460M1460 301.3H1461M1461 299.5H1462M1462 291.0H1463M1463 298.0H1464M1464 297.0H1465M1465 293.6H1487" fill="none" stroke="#c98f58" stroke-width="1" stroke-opacity="0.9"/></g><g ><path d="M491 343.6V341.9H492V343.6H493V341.6H494V341.8H495V343.6H496V337.4H497V340.6H498V341.4H499V341.1H500V342.3H501V341.8H502V343.6H503V342.2H504V343.6H505V341.6H506V338.1H507V341.1H508V343.6H509V341.3H510V341.4H511V343.6H512V324.5H513V342.1H514V338.3H515V343.6H516V340.7H517V343.6H518V340.9H519V343.6H523V340.5H524V325.0H525V342.1H526V343.6H530V342.6H531V340.8H532V343.6H533V342.6H534V337.3H535V341.8H536V342.1H537V329.0H538V333.0H539V339.6H540V343.6H541V341.0H542V342.0H543V343.6H545V339.8H546V343.6H547V341.3H548V341.8H549V340.8H550V343.6H551V342.3H552V341.7H553V343.6H555V340.7H556V343.6H557V342.2H558V325.0H559V343.6H561V342.1H562V335.1H563V342.0H564V340.1H565V331.2H566V343.6H567V341.0H568V338.9H569V341.4H570V339.5H571V341.3H572V343.6H575V340.9H576V343.6H578V342.1H579V343.6H603V341.3H604V343.6H605V342.4H606V343.6H610V341.3H611V340.8H612V331.4H613V343.6H615V342.1H616V343.6H619V341.5H620V341.4H621V327.3H622V343.6H623V342.0H624V343.6H625V336.1H626V343.6H628V333.2H629V341.1H630V343.6H632V342.3H633V330.2H634V343.6H635V341.4H636V342.1H637V333.3H638V329.0H639V342.3H640V342.4H641V343.6H642V336.0H643V322.7H644V343.6H647V341.3H648V342.4H649V343.6H653V332.7H654V343.6H655V340.7H656V343.6H658V330.6H659V341.9H660V343.6H661V339.7H662V341.5H663V340.8H664V341.2H665V337.3H666V343.6H668V324.3H669V341.7H670V342.0H671V341.5H672V342.5H673V342.2H674V343.6H675V342.1H676V327.9H678V335.8H679V343.6H680V342.1H681V342.6H682V334.1H683V343.6H684V341.9H685V343.6H686V341.0H687V338.6H688V341.2H689V341.6H690V343.6H714V340.6H715V339.7H716V340.6H717V327.1H718V341.6H719V343.6H720V324.7H721V342.1H722V327.7H723V343.6H724V340.6H725V339.4H726V340.1H727V341.2H728V341.9H729V341.8H730V343.6H732V342.0H733V343.6H734V341.2H735V343.6H736V342.1H737V341.1H738V343.6H740V341.3H741V342.1H742V343.6H743V341.9H744V331.6H746V340.6H747V332.8H748V343.6H752V324.6H753V342.2H754V325.0H755V343.6H756V340.7H757V342.1H758V335.3H759V343.6H760V341.0H761V340.6H762V341.4H763V343.6H764V342.5H765V341.3H766V343.6H767V339.1H768V343.6H770V341.1H771V343.6H775V341.2H776V341.0H777V340.2H778V343.6H780V342.2H781V332.0H782V342.4H783V343.6H787V342.1H788V343.6H789V340.9H790V340.7H791V343.6H792V342.1H793V343.6H794V341.4H795V342.5H796V341.5H797V341.9H799V329.1H800V340.3H801V343.6H824V324.1H825V343.6H827V342.1H828V337.2H829V341.7H830V336.4H831V343.6H832V341.3H833V342.0H834V343.6H835V337.8H836V342.3H837V340.3H838V337.0H839V323.8H840V337.0H841V343.6H843V322.8H844V331.8H845V326.1H846V340.9H847V334.2H848V343.6H849V342.5H850V343.6H853V341.6H854V342.3H855V336.9H856V338.5H857V343.6H858V341.9H859V342.0H860V341.3H861V341.2H862V343.6H863V342.1H864V332.3H865V327.4H866V323.3H867V323.9H868V342.2H869V338.4H870V341.0H871V343.6H872V341.9H874V341.8H875V326.3H876V339.7H877V340.9H878V341.4H879V343.6H880V342.1H881V343.6H882V341.8H883V341.7H884V341.8H885V342.5H886V343.6H887V323.6H888V343.6H889V341.4H890V341.3H891V341.2H892V323.5H893V343.6H894V340.9H895V343.6H896V342.1H897V343.6H900V335.4H902V323.5H903V343.6H906V331.2H907V342.4H908V342.1H909V334.6H910V343.6H912V342.1H913V343.6H936V340.7H937V341.6H938V340.6H939V342.2H940V340.2H941V340.7H942V342.4H943V343.6H948V341.2H949V343.6H952V338.3H955V343.6H957V340.2H958V343.6H959V337.5H960V341.7H961V343.6H962V337.2H963V343.6H965V340.8H966V343.6H968V335.2H969V343.6H972V341.7H973V337.6H974V333.5H975V337.6H976V341.6H977V343.6H980V333.2H981V343.6H982V342.1H983V324.4H984V343.6H987V342.1H988V331.6H989V343.6H990V341.5H991V342.5H992V340.7H993V343.6H994V342.0H995V341.4H996V343.6H997V341.1H998V342.4H999V343.6H1000V341.1H1001V343.6H1003V324.6H1004V341.4H1005V333.6H1006V343.6H1007V330.5H1008V342.1H1009V341.4H1010V324.3H1011V341.8H1012V342.1H1013V343.6H1014V332.0H1015V343.6H1016V342.1H1017V337.1H1018V342.2H1019V341.6H1020V342.4H1021V343.6H1022V340.7H1023V340.4H1024V343.6H1050V342.1H1051V341.5H1052V343.6H1053V340.7H1054V340.9H1055V341.1H1056V342.0H1057V343.6H1060V340.7H1061V341.9H1062V343.6H1064V341.6H1065V339.4H1066V342.3H1067V343.6H1068V340.2H1069V324.7H1071V341.4H1072V341.5H1073V340.9H1074V343.6H1075V342.0H1076V342.1H1077V342.3H1078V340.9H1079V338.7H1080V324.8H1081V341.6H1082V337.4H1083V343.6H1084V341.5H1085V343.6H1086V341.2H1087V342.5H1088V343.6H1089V337.9H1091V343.6H1094V342.5H1095V342.4H1096V343.6H1099V342.2H1100V342.1H1101V342.5H1102V341.4H1103V343.6H1107V342.1H1108V343.6H1110V342.1H1111V340.7H1112V343.6H1114V340.8H1115V340.9H1116V343.6H1119V342.0H1120V343.6H1121V340.6H1122V343.6H1124V341.9H1125V343.6H1127V335.3H1128V343.6H1130V331.0H1131V343.6H1133V341.2H1134V341.9H1135V343.6H1157V342.4H1158V341.5H1159V337.5H1160V343.6H1161V323.1H1162V342.1H1163V341.1H1164V343.6H1165V340.9H1166V343.6H1167V338.1H1168V343.6H1169V341.9H1170V341.1H1171V334.4H1172V341.9H1173V343.6H1177V341.8H1178V341.4H1179V343.6H1183V342.0H1184V339.5H1185V340.7H1186V343.6H1187V337.4H1188V339.6H1189V343.6H1192V341.9H1193V342.5H1194V341.9H1195V340.8H1196V335.2H1197V327.2H1198V343.6H1200V341.1H1201V335.7H1202V343.6H1204V341.6H1205V342.1H1206V335.9H1207V340.9H1208V335.9H1209V331.5H1210V341.6H1212V332.9H1213V340.8H1214V343.6H1215V328.1H1216V336.3H1217V343.6H1218V340.8H1219V339.2H1220V328.7H1221V343.6H1223V342.1H1224V342.0H1225V341.6H1226V341.9H1227V322.7H1228V341.9H1229V343.6H1231V340.7H1232V328.0H1233V343.6H1235V340.7H1236V343.6H1237V341.0H1238V340.8H1239V343.6H1240V339.5H1241V342.1H1242V326.2H1243V342.0H1244V340.6H1245V343.6H1269V341.6H1270V343.6H1271V342.6H1272V343.6H1273V335.1H1274V342.4H1275V343.6H1279V331.5H1280V343.6H1283V342.1H1284V343.6H1286V333.7H1287V343.6H1289V341.8H1290V338.7H1291V343.6H1292V340.0H1293V343.6H1294V339.3H1295V341.8H1296V340.8H1297V343.6H1298V331.4H1299V341.0H1300V342.2H1301V333.8H1302V343.6H1304V341.1H1305V323.0H1306V341.3H1307V342.4H1308V324.9H1311V340.7H1312V343.6H1313V342.5H1314V343.6H1317V342.3H1318V326.8H1319V342.1H1320V343.6H1321V341.2H1322V342.2H1323V340.7H1324V341.8H1325V343.6H1327V342.0H1328V343.6H1331V341.2H1332V341.3H1333V343.6H1337V341.0H1338V343.6H1341V328.3H1342V343.6H1343V324.6H1344V341.5H1345V341.9H1346V326.4H1347V343.6H1348V340.8H1349V343.6H1350V341.1H1351V341.7H1352V340.9H1353V342.4H1354V343.6H1355V341.3H1356V343.6H1379V342.1H1380V326.4H1381V339.5H1382V341.5H1383V343.6H1384V342.1H1385V343.6H1386V335.1H1387V343.6H1388V341.7H1389V343.6H1390V342.0H1391V343.6H1393V336.0H1394V342.5H1395V343.6H1397V342.5H1398V340.8H1399V329.6H1400V343.6H1401V340.5H1402V341.7H1403V343.6H1404V341.6H1405V340.8H1406V343.6H1410V337.3H1411V342.5H1412V343.6H1414V341.4H1415V342.5H1416V343.6H1417V322.8H1418V343.6H1419V342.5H1420V337.6H1421V337.3H1422V335.0H1423V332.5H1424V343.6H1425V340.9H1426V341.2H1427V341.5H1428V336.3H1429V343.6H1430V333.0H1431V341.3H1432V342.0H1433V342.5H1434V330.1H1435V343.6H1436V340.8H1437V343.6H1438V342.1H1439V342.3H1440V343.6H1442V338.2H1443V343.6H1445V341.6H1446V332.0H1447V343.6H1448V329.7H1449V343.6H1450V337.1H1451V324.0H1452V343.6H1454V329.4H1455V343.6H1457V342.4H1458V342.1H1459V343.6H1460V341.6H1461V342.0H1462V342.1H1463V342.6H1464V341.4H1465V340.8H1466V329.2H1468V343.6H1487V343.6Z" fill="#dab691"/><path d="M491 341.9H492M492 343.6H493M493 341.6H494M494 341.8H495M495 343.6H496M496 337.4H497M497 340.6H498M498 341.4H499M499 341.1H500M500 342.3H501M501 341.8H502M502 343.6H503M503 342.2H504M504 343.6H505M505 341.6H506M506 338.1H507M507 341.1H508M508 343.6H509M509 341.3H510M510 341.4H511M511 343.6H512M512 324.5H513M513 342.1H514M514 338.3H515M515 343.6H516M516 340.7H517M517 343.6H518M518 340.9H519M519 343.6H523M523 340.5H524M524 325.0H525M525 342.1H526M526 343.6H530M530 342.6H531M531 340.8H532M532 343.6H533M533 342.6H534M534 337.3H535M535 341.8H536M536 342.1H537M537 329.0H538M538 333.0H539M539 339.6H540M540 343.6H541M541 341.0H542M542 342.0H543M543 343.6H545M545 339.8H546M546 343.6H547M547 341.3H548M548 341.8H549M549 340.8H550M550 343.6H551M551 342.3H552M552 341.7H553M553 343.6H555M555 340.7H556M556 343.6H557M557 342.2H558M558 325.0H559M559 343.6H561M561 342.1H562M562 335.1H563M563 342.0H564M564 340.1H565M565 331.2H566M566 343.6H567M567 341.0H568M568 338.9H569M569 341.4H570M570 339.5H571M571 341.3H572M572 343.6H575M575 340.9H576M576 343.6H578M578 342.1H579M579 343.6H603M603 341.3H604M604 343.6H605M605 342.4H606M606 343.6H610M610 341.3H611M611 340.8H612M612 331.4H613M613 343.6H615M615 342.1H616M616 343.6H619M619 341.5H620M620 341.4H621M621 327.3H622M622 343.6H623M623 342.0H624M624 343.6H625M625 336.1H626M626 343.6H628M628 333.2H629M629 341.1H630M630 343.6H632M632 342.3H633M633 330.2H634M634 343.6H635M635 341.4H636M636 342.1H637M637 333.3H638M638 329.0H639M639 342.3H640M640 342.4H641M641 343.6H642M642 336.0H643M643 322.7H644M644 343.6H647M647 341.3H648M648 342.4H649M649 343.6H653M653 332.7H654M654 343.6H655M655 340.7H656M656 343.6H658M658 330.6H659M659 341.9H660M660 343.6H661M661 339.7H662M662 341.5H663M663 340.8H664M664 341.2H665M665 337.3H666M666 343.6H668M668 324.3H669M669 341.7H670M670 342.0H671M671 341.5H672M672 342.5H673M673 342.2H674M674 343.6H675M675 342.1H676M676 327.9H678M678 335.8H679M679 343.6H680M680 342.1H681M681 342.6H682M682 334.1H683M683 343.6H684M684 341.9H685M685 343.6H686M686 341.0H687M687 338.6H688M688 341.2H689M689 341.6H690M690 343.6H714M714 340.6H715M715 339.7H716M716 340.6H717M717 327.1H718M718 341.6H719M719 343.6H720M720 324.7H721M721 342.1H722M722 327.7H723M723 343.6H724M724 340.6H725M725 339.4H726M726 340.1H727M727 341.2H728M728 341.9H729M729 341.8H730M730 343.6H732M732 342.0H733M733 343.6H734M734 341.2H735M735 343.6H736M736 342.1H737M737 341.1H738M738 343.6H740M740 341.3H741M741 342.1H742M742 343.6H743M743 341.9H744M744 331.6H746M746 340.6H747M747 332.8H748M748 343.6H752M752 324.6H753M753 342.2H754M754 325.0H755M755 343.6H756M756 340.7H757M757 342.1H758M758 335.3H759M759 343.6H760M760 341.0H761M761 340.6H762M762 341.4H763M763 343.6H764M764 342.5H765M765 341.3H766M766 343.6H767M767 339.1H768M768 343.6H770M770 341.1H771M771 343.6H775M775 341.2H776M776 341.0H777M777 340.2H778M778 343.6H780M780 342.2H781M781 332.0H782M782 342.4H783M783 343.6H787M787 342.1H788M788 343.6H789M789 340.9H790M790 340.7H791M791 343.6H792M792 342.1H793M793 343.6H794M794 341.4H795M795 342.5H796M796 341.5H797M797 341.9H799M799 329.1H800M800 340.3H801M801 343.6H824M824 324.1H825M825 343.6H827M827 342.1H828M828 337.2H829M829 341.7H830M830 336.4H831M831 343.6H832M832 341.3H833M833 342.0H834M834 343.6H835M835 337.8H836M836 342.3H837M837 340.3H838M838 337.0H839M839 323.8H840M840 337.0H841M841 343.6H843M843 322.8H844M844 331.8H845M845 326.1H846M846 340.9H847M847 334.2H848M848 343.6H849M849 342.5H850M850 343.6H853M853 341.6H854M854 342.3H855M855 336.9H856M856 338.5H857M857 343.6H858M858 341.9H859M859 342.0H860M860 341.3H861M861 341.2H862M862 343.6H863M863 342.1H864M864 332.3H865M865 327.4H866M866 323.3H867M867 323.9H868M868 342.2H869M869 338.4H870M870 341.0H871M871 343.6H872M872 341.9H874M874 341.8H875M875 326.3H876M876 339.7H877M877 340.9H878M878 341.4H879M879 343.6H880M880 342.1H881M881 343.6H882M882 341.8H883M883 341.7H884M884 341.8H885M885 342.5H886M886 343.6H887M887 323.6H888M888 343.6H889M889 341.4H890M890 341.3H891M891 341.2H892M892 323.5H893M893 343.6H894M894 340.9H895M895 343.6H896M896 342.1H897M897 343.6H900M900 335.4H902M902 323.5H903M903 343.6H906M906 331.2H907M907 342.4H908M908 342.1H909M909 334.6H910M910 343.6H912M912 342.1H913M913 343.6H936M936 340.7H937M937 341.6H938M938 340.6H939M939 342.2H940M940 340.2H941M941 340.7H942M942 342.4H943M943 343.6H948M948 341.2H949M949 343.6H952M952 338.3H955M955 343.6H957M957 340.2H958M958 343.6H959M959 337.5H960M960 341.7H961M961 343.6H962M962 337.2H963M963 343.6H965M965 340.8H966M966 343.6H968M968 335.2H969M969 343.6H972M972 341.7H973M973 337.6H974M974 333.5H975M975 337.6H976M976 341.6H977M977 343.6H980M980 333.2H981M981 343.6H982M982 342.1H983M983 324.4H984M984 343.6H987M987 342.1H988M988 331.6H989M989 343.6H990M990 341.5H991M991 342.5H992M992 340.7H993M993 343.6H994M994 342.0H995M995 341.4H996M996 343.6H997M997 341.1H998M998 342.4H999M999 343.6H1000M1000 341.1H1001M1001 343.6H1003M1003 324.6H1004M1004 341.4H1005M1005 333.6H1006M1006 343.6H1007M1007 330.5H1008M1008 342.1H1009M1009 341.4H1010M1010 324.3H1011M1011 341.8H1012M1012 342.1H1013M1013 343.6H1014M1014 332.0H1015M1015 343.6H1016M1016 342.1H1017M1017 337.1H1018M1018 342.2H1019M1019 341.6H1020M1020 342.4H1021M1021 343.6H1022M1022 340.7H1023M1023 340.4H1024M1024 343.6H1050M1050 342.1H1051M1051 341.5H1052M1052 343.6H1053M1053 340.7H1054M1054 340.9H1055M1055 341.1H1056M1056 342.0H1057M1057 343.6H1060M1060 340.7H1061M1061 341.9H1062M1062 343.6H1064M1064 341.6H1065M1065 339.4H1066M1066 342.3H1067M1067 343.6H1068M1068 340.2H1069M1069 324.7H1071M1071 341.4H1072M1072 341.5H1073M1073 340.9H1074M1074 343.6H1075M1075 342.0H1076M1076 342.1H1077M1077 342.3H1078M1078 340.9H1079M1079 338.7H1080M1080 324.8H1081M1081 341.6H1082M1082 337.4H1083M1083 343.6H1084M1084 341.5H1085M1085 343.6H1086M1086 341.2H1087M1087 342.5H1088M1088 343.6H1089M1089 337.9H1091M1091 343.6H1094M1094 342.5H1095M1095 342.4H1096M1096 343.6H1099M1099 342.2H1100M1100 342.1H1101M1101 342.5H1102M1102 341.4H1103M1103 343.6H1107M1107 342.1H1108M1108 343.6H1110M1110 342.1H1111M1111 340.7H1112M1112 343.6H1114M1114 340.8H1115M1115 340.9H1116M1116 343.6H1119M1119 342.0H1120M1120 343.6H1121M1121 340.6H1122M1122 343.6H1124M1124 341.9H1125M1125 343.6H1127M1127 335.3H1128M1128 343.6H1130M1130 331.0H1131M1131 343.6H1133M1133 341.2H1134M1134 341.9H1135M1135 343.6H1157M1157 342.4H1158M1158 341.5H1159M1159 337.5H1160M1160 343.6H1161M1161 323.1H1162M1162 342.1H1163M1163 341.1H1164M1164 343.6H1165M1165 340.9H1166M1166 343.6H1167M1167 338.1H1168M1168 343.6H1169M1169 341.9H1170M1170 341.1H1171M1171 334.4H1172M1172 341.9H1173M1173 343.6H1177M1177 341.8H1178M1178 341.4H1179M1179 343.6H1183M1183 342.0H1184M1184 339.5H1185M1185 340.7H1186M1186 343.6H1187M1187 337.4H1188M1188 339.6H1189M1189 343.6H1192M1192 341.9H1193M1193 342.5H1194M1194 341.9H1195M1195 340.8H1196M1196 335.2H1197M1197 327.2H1198M1198 343.6H1200M1200 341.1H1201M1201 335.7H1202M1202 343.6H1204M1204 341.6H1205M1205 342.1H1206M1206 335.9H1207M1207 340.9H1208M1208 335.9H1209M1209 331.5H1210M1210 341.6H1212M1212 332.9H1213M1213 340.8H1214M1214 343.6H1215M1215 328.1H1216M1216 336.3H1217M1217 343.6H1218M1218 340.8H1219M1219 339.2H1220M1220 328.7H1221M1221 343.6H1223M1223 342.1H1224M1224 342.0H1225M1225 341.6H1226M1226 341.9H1227M1227 322.7H1228M1228 341.9H1229M1229 343.6H1231M1231 340.7H1232M1232 328.0H1233M1233 343.6H1235M1235 340.7H1236M1236 343.6H1237M1237 341.0H1238M1238 340.8H1239M1239 343.6H1240M1240 339.5H1241M1241 342.1H1242M1242 326.2H1243M1243 342.0H1244M1244 340.6H1245M1245 343.6H1269M1269 341.6H1270M1270 343.6H1271M1271 342.6H1272M1272 343.6H1273M1273 335.1H1274M1274 342.4H1275M1275 343.6H1279M1279 331.5H1280M1280 343.6H1283M1283 342.1H1284M1284 343.6H1286M1286 333.7H1287M1287 343.6H1289M1289 341.8H1290M1290 338.7H1291M1291 343.6H1292M1292 340.0H1293M1293 343.6H1294M1294 339.3H1295M1295 341.8H1296M1296 340.8H1297M1297 343.6H1298M1298 331.4H1299M1299 341.0H1300M1300 342.2H1301M1301 333.8H1302M1302 343.6H1304M1304 341.1H1305M1305 323.0H1306M1306 341.3H1307M1307 342.4H1308M1308 324.9H1311M1311 340.7H1312M1312 343.6H1313M1313 342.5H1314M1314 343.6H1317M1317 342.3H1318M1318 326.8H1319M1319 342.1H1320M1320 343.6H1321M1321 341.2H1322M1322 342.2H1323M1323 340.7H1324M1324 341.8H1325M1325 343.6H1327M1327 342.0H1328M1328 343.6H1331M1331 341.2H1332M1332 341.3H1333M1333 343.6H1337M1337 341.0H1338M1338 343.6H1341M1341 328.3H1342M1342 343.6H1343M1343 324.6H1344M1344 341.5H1345M1345 341.9H1346M1346 326.4H1347M1347 343.6H1348M1348 340.8H1349M1349 343.6H1350M1350 341.1H1351M1351 341.7H1352M1352 340.9H1353M1353 342.4H1354M1354 343.6H1355M1355 341.3H1356M1356 343.6H1379M1379 342.1H1380M1380 326.4H1381M1381 339.5H1382M1382 341.5H1383M1383 343.6H1384M1384 342.1H1385M1385 343.6H1386M1386 335.1H1387M1387 343.6H1388M1388 341.7H1389M1389 343.6H1390M1390 342.0H1391M1391 343.6H1393M1393 336.0H1394M1394 342.5H1395M1395 343.6H1397M1397 342.5H1398M1398 340.8H1399M1399 329.6H1400M1400 343.6H1401M1401 340.5H1402M1402 341.7H1403M1403 343.6H1404M1404 341.6H1405M1405 340.8H1406M1406 343.6H1410M1410 337.3H1411M1411 342.5H1412M1412 343.6H1414M1414 341.4H1415M1415 342.5H1416M1416 343.6H1417M1417 322.8H1418M1418 343.6H1419M1419 342.5H1420M1420 337.6H1421M1421 337.3H1422M1422 335.0H1423M1423 332.5H1424M1424 343.6H1425M1425 340.9H1426M1426 341.2H1427M1427 341.5H1428M1428 336.3H1429M1429 343.6H1430M1430 333.0H1431M1431 341.3H1432M1432 342.0H1433M1433 342.5H1434M1434 330.1H1435M1435 343.6H1436M1436 340.8H1437M1437 343.6H1438M1438 342.1H1439M1439 342.3H1440M1440 343.6H1442M1442 338.2H1443M1443 343.6H1445M1445 341.6H1446M1446 332.0H1447M1447 343.6H1448M1448 329.7H1449M1449 343.6H1450M1450 337.1H1451M1451 324.0H1452M1452 343.6H1454M1454 329.4H1455M1455 343.6H1457M1457 342.4H1458M1458 342.1H1459M1459 343.6H1460M1460 341.6H1461M1461 342.0H1462M1462 342.1H1463M1463 342.6H1464M1464 341.4H1465M1465 340.8H1466M1466 329.2H1468M1468 343.6H1487" fill="none" stroke="#c98f58" stroke-width="1" stroke-opacity="0.9"/></g><g ><path d="M491 383.6V382.0H492V376.6H493V381.8H494V383.6H496V380.6H497V383.6H498V382.5H499V372.6H500V383.6H503V382.5H504V373.4H505V383.6H510V379.4H511V383.6H513V382.4H514V382.0H515V383.6H516V381.1H517V381.6H518V376.8H519V383.6H521V382.5H522V383.6H524V381.6H525V383.6H526V382.1H527V383.6H531V381.8H532V382.2H533V381.7H534V383.6H536V381.8H537V383.6H538V381.0H539V383.6H541V381.6H542V383.6H544V382.0H545V383.6H546V381.5H549V383.6H550V381.2H551V383.6H552V377.7H553V381.7H554V382.3H555V383.6H556V381.1H557V382.5H558V380.6H559V369.3H560V382.1H561V380.8H562V381.7H564V380.7H565V381.1H566V381.5H567V379.6H568V382.3H569V383.6H570V380.8H571V383.6H572V372.3H573V381.5H574V381.3H575V377.2H576V382.1H577V381.6H578V381.9H579V373.3H580V383.6H602V380.7H603V383.6H604V380.7H605V381.0H606V383.6H607V380.8H608V381.5H609V383.6H611V382.6H612V377.2H613V383.6H614V382.1H615V383.6H618V382.2H619V382.1H620V381.7H621V380.1H622V383.6H624V378.5H625V373.4H626V383.6H629V380.8H630V382.1H631V380.9H632V381.9H633V381.8H634V372.6H635V382.1H636V383.6H638V381.2H639V379.1H640V382.6H641V383.6H642V382.1H643V383.6H644V382.1H645V383.6H646V382.1H647V383.6H650V382.5H651V383.6H653V381.5H654V381.8H655V380.6H656V374.2H657V372.3H658V382.1H660V383.6H661V382.1H662V383.6H667V381.5H668V380.7H669V383.6H674V379.9H675V381.6H676V383.6H677V374.6H678V381.1H679V370.4H680V383.6H681V382.1H682V383.6H683V381.1H684V382.4H685V382.1H686V383.6H687V381.2H688V383.6H690V381.8H691V383.6H713V381.9H714V382.1H715V381.2H716V376.6H717V380.9H718V381.9H719V383.6H720V376.1H721V383.6H722V380.4H723V380.7H725V383.6H726V381.0H727V380.7H728V383.6H729V381.0H730V381.1H731V383.6H732V379.5H733V383.6H734V374.9H735V383.6H739V381.4H740V382.6H741V381.2H742V382.3H743V383.6H745V377.1H746V383.6H748V373.1H749V381.1H750V383.6H752V380.8H753V383.6H754V381.3H755V383.6H756V381.1H757V382.2H758V380.9H759V383.6H760V381.0H761V370.1H762V383.6H763V378.8H764V381.8H765V383.6H768V378.2H769V382.0H770V383.6H771V372.8H772V381.5H773V370.3H774V382.5H775V383.6H779V376.1H780V383.6H781V382.0H782V380.7H783V381.3H784V381.1H785V383.6H786V381.8H787V383.6H788V382.1H789V381.9H790V381.0H791V383.6H792V382.1H793V383.6H795V380.6H796V381.2H797V380.8H798V383.6H824V381.2H825V375.5H826V383.6H827V381.3H828V380.9H829V381.4H830V381.3H831V383.6H833V381.0H834V382.1H835V381.1H836V382.1H837V383.6H840V377.8H842V382.5H843V381.7H844V382.2H845V382.4H846V383.6H849V381.0H850V383.6H852V378.2H853V382.1H854V383.6H855V369.9H857V372.9H858V370.9H859V380.6H860V381.5H861V381.7H862V380.7H863V383.6H864V380.9H865V382.4H866V383.6H868V379.3H869V383.6H870V382.1H871V381.8H872V381.5H873V382.3H874V381.5H875V382.3H876V373.0H877V383.6H882V382.5H883V383.6H884V377.1H885V383.6H887V381.2H888V382.6H889V383.6H890V378.4H891V377.9H892V381.1H893V380.7H894V383.6H895V382.3H896V380.6H897V382.0H898V383.6H904V382.1H905V381.6H906V383.6H908V381.6H909V383.6H912V375.6H937V371.1H938V380.8H939V383.6H940V381.7H941V380.9H942V381.2H943V383.6H946V381.8H947V382.3H948V373.8H949V383.6H951V381.9H952V379.5H955V381.3H956V383.6H958V381.3H959V383.6H960V381.2H961V382.1H962V383.6H963V382.1H964V382.0H965V383.6H966V382.1H967V382.5H968V382.1H969V383.6H971V382.2H972V381.4H973V372.8H974V382.3H975V383.6H976V381.1H977V383.6H980V382.1H981V381.7H982V382.0H983V380.7H984V381.7H985V380.6H986V381.8H987V375.6H988V381.1H989V380.8H990V383.6H991V381.2H992V383.6H996V381.7H997V383.6H999V382.5H1000V383.6H1001V382.3H1002V369.0H1005V383.6H1006V382.1H1007V383.6H1009V381.3H1010V383.6H1011V381.7H1012V382.1H1013V382.2H1014V383.6H1016V381.9H1017V382.0H1018V382.2H1019V371.7H1020V382.1H1021V383.6H1023V382.1H1024V383.6H1048V382.1H1049V381.6H1050V376.6H1053V371.0H1054V378.2H1055V382.1H1056V382.4H1057V382.3H1058V383.6H1060V382.1H1061V383.6H1065V374.6H1066V383.6H1068V382.0H1069V381.3H1070V381.4H1071V382.0H1072V383.6H1073V375.8H1074V383.6H1076V382.1H1077V382.0H1078V382.1H1079V378.3H1080V381.8H1081V382.4H1082V381.7H1083V382.6H1084V383.6H1089V382.2H1090V383.6H1091V370.1H1092V380.7H1093V381.1H1094V383.6H1096V381.9H1097V383.6H1101V382.2H1102V379.1H1103V383.6H1104V382.5H1105V383.6H1106V382.1H1107V383.6H1108V382.1H1109V383.6H1110V381.0H1111V381.4H1112V383.6H1114V381.6H1115V383.6H1117V382.0H1118V383.6H1120V380.7H1121V378.6H1122V383.6H1125V382.2H1126V381.1H1127V383.6H1128V382.3H1129V378.2H1130V383.6H1131V382.0H1132V370.9H1133V383.6H1157V381.1H1158V381.3H1159V383.6H1160V378.4H1161V381.0H1162V383.6H1164V382.4H1165V382.1H1166V383.6H1168V382.1H1169V380.7H1170V383.6H1173V371.0H1174V381.8H1175V383.6H1179V380.8H1180V383.6H1182V380.7H1183V380.6H1184V383.6H1187V373.8H1188V381.2H1189V381.7H1190V383.6H1191V382.5H1192V382.4H1193V383.6H1194V381.4H1195V383.6H1196V374.3H1198V383.6H1199V379.1H1200V383.6H1201V381.2H1202V383.6H1203V381.3H1204V383.6H1206V380.8H1207V383.6H1208V380.8H1209V383.6H1210V382.6H1211V381.9H1212V383.6H1214V380.8H1215V383.6H1216V380.8H1218V383.6H1219V380.8H1220V383.6H1222V374.9H1223V383.6H1226V382.1H1227V383.6H1231V381.8H1232V383.6H1234V380.7H1235V383.6H1236V381.9H1237V372.9H1238V383.6H1239V382.1H1240V381.1H1241V383.6H1242V378.1H1243V383.6H1244V382.1H1245V381.0H1246V383.6H1268V381.4H1269V382.5H1270V381.8H1271V383.6H1272V381.3H1273V382.5H1274V381.0H1275V383.6H1276V381.3H1277V383.6H1280V381.5H1281V382.5H1282V381.3H1283V380.9H1284V372.7H1285V383.6H1286V381.3H1287V380.8H1288V383.6H1289V375.2H1290V383.6H1292V381.1H1293V378.4H1294V383.6H1297V381.7H1298V382.2H1299V380.7H1300V381.8H1301V383.6H1302V381.2H1303V381.5H1304V383.6H1305V375.8H1306V381.9H1307V383.6H1309V382.1H1310V383.6H1311V379.0H1312V382.3H1313V383.6H1314V381.2H1315V372.4H1316V383.6H1319V381.1H1320V383.6H1321V380.0H1322V381.8H1323V383.6H1326V381.3H1327V381.6H1328V383.6H1330V380.6H1331V383.6H1332V372.3H1333V381.5H1334V383.6H1340V382.1H1341V383.6H1343V380.2H1344V369.5H1345V382.1H1346V381.4H1347V381.1H1348V383.6H1349V382.3H1350V382.1H1351V383.6H1353V380.9H1354V375.5H1355V383.6H1380V375.6H1381V380.5H1382V380.6H1383V383.6H1384V382.2H1385V380.9H1386V381.2H1387V382.1H1388V381.9H1389V383.6H1390V381.0H1391V383.6H1394V382.1H1395V375.5H1396V381.5H1397V380.7H1398V383.6H1399V378.4H1400V383.6H1401V381.8H1402V375.9H1403V382.6H1404V369.4H1405V373.0H1406V383.6H1411V381.5H1412V381.2H1413V381.5H1414V381.9H1415V383.6H1423V380.7H1424V383.6H1425V382.6H1426V383.6H1427V381.4H1428V383.6H1429V382.1H1430V383.6H1431V380.9H1432V383.6H1434V382.6H1435V383.6H1436V380.9H1437V382.0H1438V381.2H1439V382.0H1440V382.1H1441V380.7H1442V382.1H1443V382.0H1444V380.8H1445V381.2H1446V378.1H1447V383.6H1452V382.4H1453V383.6H1455V381.7H1456V383.6H1458V381.9H1459V380.7H1460V381.9H1461V380.9H1462V383.6H1465V381.4H1466V382.4H1467V383.6H1487V383.6Z" fill="#dab691"/><path d="M491 382.0H492M492 376.6H493M493 381.8H494M494 383.6H496M496 380.6H497M497 383.6H498M498 382.5H499M499 372.6H500M500 383.6H503M503 382.5H504M504 373.4H505M505 383.6H510M510 379.4H511M511 383.6H513M513 382.4H514M514 382.0H515M515 383.6H516M516 381.1H517M517 381.6H518M518 376.8H519M519 383.6H521M521 382.5H522M522 383.6H524M524 381.6H525M525 383.6H526M526 382.1H527M527 383.6H531M531 381.8H532M532 382.2H533M533 381.7H534M534 383.6H536M536 381.8H537M537 383.6H538M538 381.0H539M539 383.6H541M541 381.6H542M542 383.6H544M544 382.0H545M545 383.6H546M546 381.5H549M549 383.6H550M550 381.2H551M551 383.6H552M552 377.7H553M553 381.7H554M554 382.3H555M555 383.6H556M556 381.1H557M557 382.5H558M558 380.6H559M559 369.3H560M560 382.1H561M561 380.8H562M562 381.7H564M564 380.7H565M565 381.1H566M566 381.5H567M567 379.6H568M568 382.3H569M569 383.6H570M570 380.8H571M571 383.6H572M572 372.3H573M573 381.5H574M574 381.3H575M575 377.2H576M576 382.1H577M577 381.6H578M578 381.9H579M579 373.3H580M580 383.6H602M602 380.7H603M603 383.6H604M604 380.7H605M605 381.0H606M606 383.6H607M607 380.8H608M608 381.5H609M609 383.6H611M611 382.6H612M612 377.2H613M613 383.6H614M614 382.1H615M615 383.6H618M618 382.2H619M619 382.1H620M620 381.7H621M621 380.1H622M622 383.6H624M624 378.5H625M625 373.4H626M626 383.6H629M629 380.8H630M630 382.1H631M631 380.9H632M632 381.9H633M633 381.8H634M634 372.6H635M635 382.1H636M636 383.6H638M638 381.2H639M639 379.1H640M640 382.6H641M641 383.6H642M642 382.1H643M643 383.6H644M644 382.1H645M645 383.6H646M646 382.1H647M647 383.6H650M650 382.5H651M651 383.6H653M653 381.5H654M654 381.8H655M655 380.6H656M656 374.2H657M657 372.3H658M658 382.1H660M660 383.6H661M661 382.1H662M662 383.6H667M667 381.5H668M668 380.7H669M669 383.6H674M674 379.9H675M675 381.6H676M676 383.6H677M677 374.6H678M678 381.1H679M679 370.4H680M680 383.6H681M681 382.1H682M682 383.6H683M683 381.1H684M684 382.4H685M685 382.1H686M686 383.6H687M687 381.2H688M688 383.6H690M690 381.8H691M691 383.6H713M713 381.9H714M714 382.1H715M715 381.2H716M716 376.6H717M717 380.9H718M718 381.9H719M719 383.6H720M720 376.1H721M721 383.6H722M722 380.4H723M723 380.7H725M725 383.6H726M726 381.0H727M727 380.7H728M728 383.6H729M729 381.0H730M730 381.1H731M731 383.6H732M732 379.5H733M733 383.6H734M734 374.9H735M735 383.6H739M739 381.4H740M740 382.6H741M741 381.2H742M742 382.3H743M743 383.6H745M745 377.1H746M746 383.6H748M748 373.1H749M749 381.1H750M750 383.6H752M752 380.8H753M753 383.6H754M754 381.3H755M755 383.6H756M756 381.1H757M757 382.2H758M758 380.9H759M759 383.6H760M760 381.0H761M761 370.1H762M762 383.6H763M763 378.8H764M764 381.8H765M765 383.6H768M768 378.2H769M769 382.0H770M770 383.6H771M771 372.8H772M772 381.5H773M773 370.3H774M774 382.5H775M775 383.6H779M779 376.1H780M780 383.6H781M781 382.0H782M782 380.7H783M783 381.3H784M784 381.1H785M785 383.6H786M786 381.8H787M787 383.6H788M788 382.1H789M789 381.9H790M790 381.0H791M791 383.6H792M792 382.1H793M793 383.6H795M795 380.6H796M796 381.2H797M797 380.8H798M798 383.6H824M824 381.2H825M825 375.5H826M826 383.6H827M827 381.3H828M828 380.9H829M829 381.4H830M830 381.3H831M831 383.6H833M833 381.0H834M834 382.1H835M835 381.1H836M836 382.1H837M837 383.6H840M840 377.8H842M842 382.5H843M843 381.7H844M844 382.2H845M845 382.4H846M846 383.6H849M849 381.0H850M850 383.6H852M852 378.2H853M853 382.1H854M854 383.6H855M855 369.9H857M857 372.9H858M858 370.9H859M859 380.6H860M860 381.5H861M861 381.7H862M862 380.7H863M863 383.6H864M864 380.9H865M865 382.4H866M866 383.6H868M868 379.3H869M869 383.6H870M870 382.1H871M871 381.8H872M872 381.5H873M873 382.3H874M874 381.5H875M875 382.3H876M876 373.0H877M877 383.6H882M882 382.5H883M883 383.6H884M884 377.1H885M885 383.6H887M887 381.2H888M888 382.6H889M889 383.6H890M890 378.4H891M891 377.9H892M892 381.1H893M893 380.7H894M894 383.6H895M895 382.3H896M896 380.6H897M897 382.0H898M898 383.6H904M904 382.1H905M905 381.6H906M906 383.6H908M908 381.6H909M909 383.6H912M912 375.6H937M937 371.1H938M938 380.8H939M939 383.6H940M940 381.7H941M941 380.9H942M942 381.2H943M943 383.6H946M946 381.8H947M947 382.3H948M948 373.8H949M949 383.6H951M951 381.9H952M952 379.5H955M955 381.3H956M956 383.6H958M958 381.3H959M959 383.6H960M960 381.2H961M961 382.1H962M962 383.6H963M963 382.1H964M964 382.0H965M965 383.6H966M966 382.1H967M967 382.5H968M968 382.1H969M969 383.6H971M971 382.2H972M972 381.4H973M973 372.8H974M974 382.3H975M975 383.6H976M976 381.1H977M977 383.6H980M980 382.1H981M981 381.7H982M982 382.0H983M983 380.7H984M984 381.7H985M985 380.6H986M986 381.8H987M987 375.6H988M988 381.1H989M989 380.8H990M990 383.6H991M991 381.2H992M992 383.6H996M996 381.7H997M997 383.6H999M999 382.5H1000M1000 383.6H1001M1001 382.3H1002M1002 369.0H1005M1005 383.6H1006M1006 382.1H1007M1007 383.6H1009M1009 381.3H1010M1010 383.6H1011M1011 381.7H1012M1012 382.1H1013M1013 382.2H1014M1014 383.6H1016M1016 381.9H1017M1017 382.0H1018M1018 382.2H1019M1019 371.7H1020M1020 382.1H1021M1021 383.6H1023M1023 382.1H1024M1024 383.6H1048M1048 382.1H1049M1049 381.6H1050M1050 376.6H1053M1053 371.0H1054M1054 378.2H1055M1055 382.1H1056M1056 382.4H1057M1057 382.3H1058M1058 383.6H1060M1060 382.1H1061M1061 383.6H1065M1065 374.6H1066M1066 383.6H1068M1068 382.0H1069M1069 381.3H1070M1070 381.4H1071M1071 382.0H1072M1072 383.6H1073M1073 375.8H1074M1074 383.6H1076M1076 382.1H1077M1077 382.0H1078M1078 382.1H1079M1079 378.3H1080M1080 381.8H1081M1081 382.4H1082M1082 381.7H1083M1083 382.6H1084M1084 383.6H1089M1089 382.2H1090M1090 383.6H1091M1091 370.1H1092M1092 380.7H1093M1093 381.1H1094M1094 383.6H1096M1096 381.9H1097M1097 383.6H1101M1101 382.2H1102M1102 379.1H1103M1103 383.6H1104M1104 382.5H1105M1105 383.6H1106M1106 382.1H1107M1107 383.6H1108M1108 382.1H1109M1109 383.6H1110M1110 381.0H1111M1111 381.4H1112M1112 383.6H1114M1114 381.6H1115M1115 383.6H1117M1117 382.0H1118M1118 383.6H1120M1120 380.7H1121M1121 378.6H1122M1122 383.6H1125M1125 382.2H1126M1126 381.1H1127M1127 383.6H1128M1128 382.3H1129M1129 378.2H1130M1130 383.6H1131M1131 382.0H1132M1132 370.9H1133M1133 383.6H1157M1157 381.1H1158M1158 381.3H1159M1159 383.6H1160M1160 378.4H1161M1161 381.0H1162M1162 383.6H1164M1164 382.4H1165M1165 382.1H1166M1166 383.6H1168M1168 382.1H1169M1169 380.7H1170M1170 383.6H1173M1173 371.0H1174M1174 381.8H1175M1175 383.6H1179M1179 380.8H1180M1180 383.6H1182M1182 380.7H1183M1183 380.6H1184M1184 383.6H1187M1187 373.8H1188M1188 381.2H1189M1189 381.7H1190M1190 383.6H1191M1191 382.5H1192M1192 382.4H1193M1193 383.6H1194M1194 381.4H1195M1195 383.6H1196M1196 374.3H1198M1198 383.6H1199M1199 379.1H1200M1200 383.6H1201M1201 381.2H1202M1202 383.6H1203M1203 381.3H1204M1204 383.6H1206M1206 380.8H1207M1207 383.6H1208M1208 380.8H1209M1209 383.6H1210M1210 382.6H1211M1211 381.9H1212M1212 383.6H1214M1214 380.8H1215M1215 383.6H1216M1216 380.8H1218M1218 383.6H1219M1219 380.8H1220M1220 383.6H1222M1222 374.9H1223M1223 383.6H1226M1226 382.1H1227M1227 383.6H1231M1231 381.8H1232M1232 383.6H1234M1234 380.7H1235M1235 383.6H1236M1236 381.9H1237M1237 372.9H1238M1238 383.6H1239M1239 382.1H1240M1240 381.1H1241M1241 383.6H1242M1242 378.1H1243M1243 383.6H1244M1244 382.1H1245M1245 381.0H1246M1246 383.6H1268M1268 381.4H1269M1269 382.5H1270M1270 381.8H1271M1271 383.6H1272M1272 381.3H1273M1273 382.5H1274M1274 381.0H1275M1275 383.6H1276M1276 381.3H1277M1277 383.6H1280M1280 381.5H1281M1281 382.5H1282M1282 381.3H1283M1283 380.9H1284M1284 372.7H1285M1285 383.6H1286M1286 381.3H1287M1287 380.8H1288M1288 383.6H1289M1289 375.2H1290M1290 383.6H1292M1292 381.1H1293M1293 378.4H1294M1294 383.6H1297M1297 381.7H1298M1298 382.2H1299M1299 380.7H1300M1300 381.8H1301M1301 383.6H1302M1302 381.2H1303M1303 381.5H1304M1304 383.6H1305M1305 375.8H1306M1306 381.9H1307M1307 383.6H1309M1309 382.1H1310M1310 383.6H1311M1311 379.0H1312M1312 382.3H1313M1313 383.6H1314M1314 381.2H1315M1315 372.4H1316M1316 383.6H1319M1319 381.1H1320M1320 383.6H1321M1321 380.0H1322M1322 381.8H1323M1323 383.6H1326M1326 381.3H1327M1327 381.6H1328M1328 383.6H1330M1330 380.6H1331M1331 383.6H1332M1332 372.3H1333M1333 381.5H1334M1334 383.6H1340M1340 382.1H1341M1341 383.6H1343M1343 380.2H1344M1344 369.5H1345M1345 382.1H1346M1346 381.4H1347M1347 381.1H1348M1348 383.6H1349M1349 382.3H1350M1350 382.1H1351M1351 383.6H1353M1353 380.9H1354M1354 375.5H1355M1355 383.6H1380M1380 375.6H1381M1381 380.5H1382M1382 380.6H1383M1383 383.6H1384M1384 382.2H1385M1385 380.9H1386M1386 381.2H1387M1387 382.1H1388M1388 381.9H1389M1389 383.6H1390M1390 381.0H1391M1391 383.6H1394M1394 382.1H1395M1395 375.5H1396M1396 381.5H1397M1397 380.7H1398M1398 383.6H1399M1399 378.4H1400M1400 383.6H1401M1401 381.8H1402M1402 375.9H1403M1403 382.6H1404M1404 369.4H1405M1405 373.0H1406M1406 383.6H1411M1411 381.5H1412M1412 381.2H1413M1413 381.5H1414M1414 381.9H1415M1415 383.6H1423M1423 380.7H1424M1424 383.6H1425M1425 382.6H1426M1426 383.6H1427M1427 381.4H1428M1428 383.6H1429M1429 382.1H1430M1430 383.6H1431M1431 380.9H1432M1432 383.6H1434M1434 382.6H1435M1435 383.6H1436M1436 380.9H1437M1437 382.0H1438M1438 381.2H1439M1439 382.0H1440M1440 382.1H1441M1441 380.7H1442M1442 382.1H1443M1443 382.0H1444M1444 380.8H1445M1445 381.2H1446M1446 378.1H1447M1447 383.6H1452M1452 382.4H1453M1453 383.6H1455M1455 381.7H1456M1456 383.6H1458M1458 381.9H1459M1459 380.7H1460M1460 381.9H1461M1461 380.9H1462M1462 383.6H1465M1465 381.4H1466M1466 382.4H1467M1467 383.6H1487" fill="none" stroke="#c98f58" stroke-width="1" stroke-opacity="0.9"/></g><g ><path d="M491 423.6V422.1H492V423.6H493V422.1H494V416.6H495V419.3H496V420.6H497V422.1H498V422.2H499V421.9H500V423.6H501V422.1H502V420.7H503V423.6H504V422.2H505V423.6H507V416.7H508V422.2H509V423.6H511V418.0H513V421.6H514V422.0H515V416.5H518V423.6H519V422.3H520V415.8H521V423.6H523V422.0H524V423.6H526V422.1H527V422.5H528V423.6H529V420.9H530V420.7H531V422.1H533V420.9H534V423.6H535V421.4H536V423.6H537V421.0H538V421.6H539V423.6H540V419.8H541V422.1H542V418.7H543V423.6H544V418.9H545V423.6H551V421.5H552V421.2H553V422.1H554V418.3H555V423.6H556V421.9H559V423.6H560V417.6H561V422.1H562V414.4H563V420.8H564V420.7H565V420.0H566V421.5H567V421.2H568V422.1H569V423.6H570V421.6H573V423.6H575V421.3H576V421.8H577V422.1H578V423.6H602V422.1H603V420.8H604V421.7H605V423.6H606V422.1H607V423.6H611V414.1H612V421.7H613V423.6H614V415.9H615V414.4H616V418.9H617V415.0H618V423.6H619V422.4H620V421.9H621V423.6H623V421.1H624V421.0H625V423.6H626V414.8H627V419.8H628V421.1H629V423.6H630V417.4H631V422.1H632V423.6H633V421.9H634V423.6H635V420.9H636V422.2H637V422.1H638V420.8H639V421.1H640V413.2H641V423.6H642V422.0H643V422.1H644V418.7H645V423.6H646V421.0H647V420.8H648V421.0H649V423.6H650V421.0H651V422.5H652V420.8H653V423.6H655V415.0H656V421.3H657V422.2H658V421.9H659V423.6H661V422.3H663V421.6H664V422.5H665V421.2H666V423.6H669V419.6H670V422.1H671V421.7H672V421.4H673V423.6H675V422.3H676V423.6H677V413.2H678V423.6H680V420.7H681V419.6H682V421.0H683V422.2H684V422.6H685V421.1H686V423.6H687V422.0H688V422.1H689V420.7H690V414.0H691V423.6H714V421.0H715V422.1H717V421.8H718V420.7H719V422.4H720V422.1H721V421.5H722V422.0H723V423.6H725V422.1H726V423.6H727V421.0H728V421.7H729V423.6H730V420.6H731V423.6H732V422.1H734V421.3H735V423.6H736V422.2H737V420.2H740V423.6H741V420.8H742V421.3H743V420.7H744V423.6H745V419.3H746V420.9H747V421.6H748V423.6H752V421.5H753V422.6H754V422.5H755V420.9H756V423.6H757V422.4H758V420.3H760V423.6H761V417.7H762V422.5H763V423.6H765V422.4H766V423.6H767V421.7H769V423.6H770V421.2H771V423.6H773V421.4H774V421.9H775V423.6H776V422.1H777V422.0H778V422.1H779V423.6H781V420.9H782V418.9H784V415.1H785V423.6H787V421.0H788V421.4H789V423.6H795V421.3H796V423.6H798V421.3H799V422.1H800V420.7H801V421.4H802V423.6H824V420.2H826V421.4H827V422.1H828V423.6H830V421.8H832V421.2H833V423.6H834V419.7H835V421.3H836V414.1H839V423.6H841V421.6H842V420.9H843V421.5H844V423.6H845V421.0H846V420.1H848V423.6H849V421.4H850V421.3H851V422.6H852V421.0H853V423.6H856V421.6H857V420.8H858V421.8H859V415.0H861V421.1H862V420.5H863V422.0H864V423.6H865V418.4H866V418.2H867V421.7H868V421.2H869V423.6H870V421.2H871V417.9H872V421.2H873V422.0H874V423.6H877V422.4H878V421.5H879V423.6H880V418.3H881V423.6H882V421.3H883V420.9H884V418.6H887V420.8H888V416.7H889V422.1H891V423.6H892V421.1H894V413.4H897V420.9H898V423.6H899V420.7H900V423.6H901V422.3H902V421.6H903V423.6H904V416.9H905V422.0H906V423.6H907V414.9H908V422.5H910V421.3H911V423.6H912V416.5H913V423.6H935V421.3H936V423.6H937V420.9H938V420.2H941V423.6H943V420.7H944V423.6H946V420.2H947V420.9H948V421.5H949V417.1H950V421.3H951V412.9H952V423.6H953V421.1H954V422.3H955V412.8H956V415.1H957V421.0H958V423.6H959V422.5H960V421.6H961V423.6H963V412.9H964V422.1H965V420.7H966V416.2H967V423.6H968V422.1H970V421.9H971V415.3H972V423.6H973V420.9H974V421.6H975V423.6H976V420.6H977V420.7H978V419.2H979V423.6H982V422.5H983V423.6H984V415.3H985V423.6H987V421.0H988V423.6H991V421.9H992V420.4H993V423.6H994V422.1H995V423.6H997V416.8H998V421.2H999V421.4H1000V423.6H1001V419.1H1002V423.6H1003V416.0H1004V421.5H1005V420.6H1006V417.1H1007V423.6H1009V420.7H1010V423.6H1011V421.9H1012V422.0H1013V421.8H1014V423.6H1015V418.4H1016V423.6H1020V421.2H1021V415.5H1022V422.1H1023V421.3H1024V423.6H1046V422.5H1047V421.7H1048V423.6H1050V420.7H1051V422.1H1052V421.7H1053V417.8H1055V420.6H1056V421.5H1057V421.2H1058V423.6H1059V422.1H1060V421.6H1061V415.7H1062V412.8H1063V422.1H1064V423.6H1065V420.9H1066V414.7H1068V421.2H1069V414.8H1070V422.4H1071V421.8H1072V422.1H1073V423.6H1074V422.1H1075V421.3H1077V415.0H1078V421.7H1079V422.1H1080V423.6H1082V422.1H1083V418.3H1084V423.6H1085V419.7H1086V421.5H1089V422.3H1090V423.6H1092V415.2H1096V423.6H1098V422.5H1099V417.6H1100V420.8H1101V423.6H1102V421.3H1103V418.9H1106V413.8H1107V421.1H1108V421.2H1109V423.6H1112V422.2H1113V421.9H1114V423.6H1115V417.3H1116V423.6H1117V421.1H1118V422.1H1119V423.6H1120V420.6H1121V417.4H1122V423.6H1125V415.5H1128V421.9H1129V423.6H1131V422.2H1132V421.4H1133V422.5H1134V423.6H1157V421.9H1158V419.1H1161V422.1H1162V423.6H1165V422.0H1166V423.6H1168V422.1H1171V423.6H1174V420.0H1175V412.8H1176V423.6H1177V420.2H1178V423.6H1179V422.5H1180V422.0H1181V421.7H1182V413.0H1183V414.9H1184V421.5H1185V422.1H1186V417.7H1187V421.2H1188V423.6H1189V422.4H1190V422.1H1192V421.5H1193V421.9H1194V423.6H1196V420.5H1197V418.0H1198V417.0H1199V423.6H1200V420.8H1201V421.2H1202V421.1H1203V422.1H1204V423.6H1205V421.3H1206V422.0H1207V421.0H1208V423.6H1209V422.0H1210V421.0H1211V417.1H1212V420.9H1213V423.6H1214V413.8H1216V421.7H1217V421.2H1219V422.6H1220V421.6H1221V422.4H1222V423.6H1224V421.8H1225V422.0H1226V420.0H1227V421.1H1228V422.1H1229V416.4H1230V418.0H1233V418.7H1234V420.8H1237V422.1H1238V421.4H1239V422.1H1240V422.0H1241V422.3H1242V422.0H1243V422.5H1244V421.5H1245V422.1H1246V423.6H1269V415.0H1271V423.6H1272V421.3H1273V422.1H1274V421.5H1275V423.6H1276V419.2H1277V420.5H1280V423.6H1281V414.8H1282V418.1H1285V422.1H1287V422.5H1288V422.1H1289V414.1H1290V423.6H1291V422.1H1292V413.6H1293V419.7H1296V423.6H1302V420.5H1303V421.9H1304V417.6H1305V422.1H1307V421.7H1309V416.2H1311V423.6H1312V422.1H1314V423.6H1316V421.5H1317V421.2H1318V423.6H1321V421.0H1322V422.5H1323V423.6H1325V422.1H1326V421.9H1327V422.5H1328V423.6H1330V417.6H1331V422.4H1332V421.6H1333V421.8H1334V421.1H1335V422.1H1336V423.6H1338V421.4H1339V422.1H1340V421.3H1341V417.8H1344V423.6H1346V414.2H1349V423.6H1350V421.4H1351V423.6H1352V420.7H1353V422.5H1354V423.6H1355V415.7H1356V421.1H1357V423.6H1382V422.1H1383V423.6H1385V420.7H1386V421.6H1387V423.6H1388V422.1H1389V420.6H1390V423.6H1391V421.8H1392V420.1H1395V421.0H1396V423.6H1397V413.5H1398V412.7H1399V420.9H1400V420.7H1401V423.6H1405V422.1H1408V421.0H1409V421.1H1410V418.0H1411V414.3H1412V418.0H1413V423.6H1414V416.6H1417V421.5H1418V421.7H1419V420.7H1420V421.2H1421V423.6H1426V422.1H1428V421.9H1429V423.6H1430V419.8H1433V420.7H1434V421.7H1435V423.6H1437V413.1H1438V421.7H1439V419.9H1440V421.6H1441V421.7H1442V421.2H1443V423.6H1444V422.0H1445V421.9H1447V423.6H1448V421.0H1449V421.1H1450V420.7H1451V421.1H1452V423.6H1454V421.1H1455V421.5H1456V423.6H1457V414.1H1458V421.9H1459V416.7H1460V423.6H1461V422.1H1463V423.6H1465V422.1H1466V420.8H1467V420.9H1468V423.6H1487V423.6Z" fill="#dab691"/><path d="M491 422.1H492M492 423.6H493M493 422.1H494M494 416.6H495M495 419.3H496M496 420.6H497M497 422.1H498M498 422.2H499M499 421.9H500M500 423.6H501M501 422.1H502M502 420.7H503M503 423.6H504M504 422.2H505M505 423.6H507M507 416.7H508M508 422.2H509M509 423.6H511M511 418.0H513M513 421.6H514M514 422.0H515M515 416.5H518M518 423.6H519M519 422.3H520M520 415.8H521M521 423.6H523M523 422.0H524M524 423.6H526M526 422.1H527M527 422.5H528M528 423.6H529M529 420.9H530M530 420.7H531M531 422.1H533M533 420.9H534M534 423.6H535M535 421.4H536M536 423.6H537M537 421.0H538M538 421.6H539M539 423.6H540M540 419.8H541M541 422.1H542M542 418.7H543M543 423.6H544M544 418.9H545M545 423.6H551M551 421.5H552M552 421.2H553M553 422.1H554M554 418.3H555M555 423.6H556M556 421.9H559M559 423.6H560M560 417.6H561M561 422.1H562M562 414.4H563M563 420.8H564M564 420.7H565M565 420.0H566M566 421.5H567M567 421.2H568M568 422.1H569M569 423.6H570M570 421.6H573M573 423.6H575M575 421.3H576M576 421.8H577M577 422.1H578M578 423.6H602M602 422.1H603M603 420.8H604M604 421.7H605M605 423.6H606M606 422.1H607M607 423.6H611M611 414.1H612M612 421.7H613M613 423.6H614M614 415.9H615M615 414.4H616M616 418.9H617M617 415.0H618M618 423.6H619M619 422.4H620M620 421.9H621M621 423.6H623M623 421.1H624M624 421.0H625M625 423.6H626M626 414.8H627M627 419.8H628M628 421.1H629M629 423.6H630M630 417.4H631M631 422.1H632M632 423.6H633M633 421.9H634M634 423.6H635M635 420.9H636M636 422.2H637M637 422.1H638M638 420.8H639M639 421.1H640M640 413.2H641M641 423.6H642M642 422.0H643M643 422.1H644M644 418.7H645M645 423.6H646M646 421.0H647M647 420.8H648M648 421.0H649M649 423.6H650M650 421.0H651M651 422.5H652M652 420.8H653M653 423.6H655M655 415.0H656M656 421.3H657M657 422.2H658M658 421.9H659M659 423.6H661M661 422.3H663M663 421.6H664M664 422.5H665M665 421.2H666M666 423.6H669M669 419.6H670M670 422.1H671M671 421.7H672M672 421.4H673M673 423.6H675M675 422.3H676M676 423.6H677M677 413.2H678M678 423.6H680M680 420.7H681M681 419.6H682M682 421.0H683M683 422.2H684M684 422.6H685M685 421.1H686M686 423.6H687M687 422.0H688M688 422.1H689M689 420.7H690M690 414.0H691M691 423.6H714M714 421.0H715M715 422.1H717M717 421.8H718M718 420.7H719M719 422.4H720M720 422.1H721M721 421.5H722M722 422.0H723M723 423.6H725M725 422.1H726M726 423.6H727M727 421.0H728M728 421.7H729M729 423.6H730M730 420.6H731M731 423.6H732M732 422.1H734M734 421.3H735M735 423.6H736M736 422.2H737M737 420.2H740M740 423.6H741M741 420.8H742M742 421.3H743M743 420.7H744M744 423.6H745M745 419.3H746M746 420.9H747M747 421.6H748M748 423.6H752M752 421.5H753M753 422.6H754M754 422.5H755M755 420.9H756M756 423.6H757M757 422.4H758M758 420.3H760M760 423.6H761M761 417.7H762M762 422.5H763M763 423.6H765M765 422.4H766M766 423.6H767M767 421.7H769M769 423.6H770M770 421.2H771M771 423.6H773M773 421.4H774M774 421.9H775M775 423.6H776M776 422.1H777M777 422.0H778M778 422.1H779M779 423.6H781M781 420.9H782M782 418.9H784M784 415.1H785M785 423.6H787M787 421.0H788M788 421.4H789M789 423.6H795M795 421.3H796M796 423.6H798M798 421.3H799M799 422.1H800M800 420.7H801M801 421.4H802M802 423.6H824M824 420.2H826M826 421.4H827M827 422.1H828M828 423.6H830M830 421.8H832M832 421.2H833M833 423.6H834M834 419.7H835M835 421.3H836M836 414.1H839M839 423.6H841M841 421.6H842M842 420.9H843M843 421.5H844M844 423.6H845M845 421.0H846M846 420.1H848M848 423.6H849M849 421.4H850M850 421.3H851M851 422.6H852M852 421.0H853M853 423.6H856M856 421.6H857M857 420.8H858M858 421.8H859M859 415.0H861M861 421.1H862M862 420.5H863M863 422.0H864M864 423.6H865M865 418.4H866M866 418.2H867M867 421.7H868M868 421.2H869M869 423.6H870M870 421.2H871M871 417.9H872M872 421.2H873M873 422.0H874M874 423.6H877M877 422.4H878M878 421.5H879M879 423.6H880M880 418.3H881M881 423.6H882M882 421.3H883M883 420.9H884M884 418.6H887M887 420.8H888M888 416.7H889M889 422.1H891M891 423.6H892M892 421.1H894M894 413.4H897M897 420.9H898M898 423.6H899M899 420.7H900M900 423.6H901M901 422.3H902M902 421.6H903M903 423.6H904M904 416.9H905M905 422.0H906M906 423.6H907M907 414.9H908M908 422.5H910M910 421.3H911M911 423.6H912M912 416.5H913M913 423.6H935M935 421.3H936M936 423.6H937M937 420.9H938M938 420.2H941M941 423.6H943M943 420.7H944M944 423.6H946M946 420.2H947M947 420.9H948M948 421.5H949M949 417.1H950M950 421.3H951M951 412.9H952M952 423.6H953M953 421.1H954M954 422.3H955M955 412.8H956M956 415.1H957M957 421.0H958M958 423.6H959M959 422.5H960M960 421.6H961M961 423.6H963M963 412.9H964M964 422.1H965M965 420.7H966M966 416.2H967M967 423.6H968M968 422.1H970M970 421.9H971M971 415.3H972M972 423.6H973M973 420.9H974M974 421.6H975M975 423.6H976M976 420.6H977M977 420.7H978M978 419.2H979M979 423.6H982M982 422.5H983M983 423.6H984M984 415.3H985M985 423.6H987M987 421.0H988M988 423.6H991M991 421.9H992M992 420.4H993M993 423.6H994M994 422.1H995M995 423.6H997M997 416.8H998M998 421.2H999M999 421.4H1000M1000 423.6H1001M1001 419.1H1002M1002 423.6H1003M1003 416.0H1004M1004 421.5H1005M1005 420.6H1006M1006 417.1H1007M1007 423.6H1009M1009 420.7H1010M1010 423.6H1011M1011 421.9H1012M1012 422.0H1013M1013 421.8H1014M1014 423.6H1015M1015 418.4H1016M1016 423.6H1020M1020 421.2H1021M1021 415.5H1022M1022 422.1H1023M1023 421.3H1024M1024 423.6H1046M1046 422.5H1047M1047 421.7H1048M1048 423.6H1050M1050 420.7H1051M1051 422.1H1052M1052 421.7H1053M1053 417.8H1055M1055 420.6H1056M1056 421.5H1057M1057 421.2H1058M1058 423.6H1059M1059 422.1H1060M1060 421.6H1061M1061 415.7H1062M1062 412.8H1063M1063 422.1H1064M1064 423.6H1065M1065 420.9H1066M1066 414.7H1068M1068 421.2H1069M1069 414.8H1070M1070 422.4H1071M1071 421.8H1072M1072 422.1H1073M1073 423.6H1074M1074 422.1H1075M1075 421.3H1077M1077 415.0H1078M1078 421.7H1079M1079 422.1H1080M1080 423.6H1082M1082 422.1H1083M1083 418.3H1084M1084 423.6H1085M1085 419.7H1086M1086 421.5H1089M1089 422.3H1090M1090 423.6H1092M1092 415.2H1096M1096 423.6H1098M1098 422.5H1099M1099 417.6H1100M1100 420.8H1101M1101 423.6H1102M1102 421.3H1103M1103 418.9H1106M1106 413.8H1107M1107 421.1H1108M1108 421.2H1109M1109 423.6H1112M1112 422.2H1113M1113 421.9H1114M1114 423.6H1115M1115 417.3H1116M1116 423.6H1117M1117 421.1H1118M1118 422.1H1119M1119 423.6H1120M1120 420.6H1121M1121 417.4H1122M1122 423.6H1125M1125 415.5H1128M1128 421.9H1129M1129 423.6H1131M1131 422.2H1132M1132 421.4H1133M1133 422.5H1134M1134 423.6H1157M1157 421.9H1158M1158 419.1H1161M1161 422.1H1162M1162 423.6H1165M1165 422.0H1166M1166 423.6H1168M1168 422.1H1171M1171 423.6H1174M1174 420.0H1175M1175 412.8H1176M1176 423.6H1177M1177 420.2H1178M1178 423.6H1179M1179 422.5H1180M1180 422.0H1181M1181 421.7H1182M1182 413.0H1183M1183 414.9H1184M1184 421.5H1185M1185 422.1H1186M1186 417.7H1187M1187 421.2H1188M1188 423.6H1189M1189 422.4H1190M1190 422.1H1192M1192 421.5H1193M1193 421.9H1194M1194 423.6H1196M1196 420.5H1197M1197 418.0H1198M1198 417.0H1199M1199 423.6H1200M1200 420.8H1201M1201 421.2H1202M1202 421.1H1203M1203 422.1H1204M1204 423.6H1205M1205 421.3H1206M1206 422.0H1207M1207 421.0H1208M1208 423.6H1209M1209 422.0H1210M1210 421.0H1211M1211 417.1H1212M1212 420.9H1213M1213 423.6H1214M1214 413.8H1216M1216 421.7H1217M1217 421.2H1219M1219 422.6H1220M1220 421.6H1221M1221 422.4H1222M1222 423.6H1224M1224 421.8H1225M1225 422.0H1226M1226 420.0H1227M1227 421.1H1228M1228 422.1H1229M1229 416.4H1230M1230 418.0H1233M1233 418.7H1234M1234 420.8H1237M1237 422.1H1238M1238 421.4H1239M1239 422.1H1240M1240 422.0H1241M1241 422.3H1242M1242 422.0H1243M1243 422.5H1244M1244 421.5H1245M1245 422.1H1246M1246 423.6H1269M1269 415.0H1271M1271 423.6H1272M1272 421.3H1273M1273 422.1H1274M1274 421.5H1275M1275 423.6H1276M1276 419.2H1277M1277 420.5H1280M1280 423.6H1281M1281 414.8H1282M1282 418.1H1285M1285 422.1H1287M1287 422.5H1288M1288 422.1H1289M1289 414.1H1290M1290 423.6H1291M1291 422.1H1292M1292 413.6H1293M1293 419.7H1296M1296 423.6H1302M1302 420.5H1303M1303 421.9H1304M1304 417.6H1305M1305 422.1H1307M1307 421.7H1309M1309 416.2H1311M1311 423.6H1312M1312 422.1H1314M1314 423.6H1316M1316 421.5H1317M1317 421.2H1318M1318 423.6H1321M1321 421.0H1322M1322 422.5H1323M1323 423.6H1325M1325 422.1H1326M1326 421.9H1327M1327 422.5H1328M1328 423.6H1330M1330 417.6H1331M1331 422.4H1332M1332 421.6H1333M1333 421.8H1334M1334 421.1H1335M1335 422.1H1336M1336 423.6H1338M1338 421.4H1339M1339 422.1H1340M1340 421.3H1341M1341 417.8H1344M1344 423.6H1346M1346 414.2H1349M1349 423.6H1350M1350 421.4H1351M1351 423.6H1352M1352 420.7H1353M1353 422.5H1354M1354 423.6H1355M1355 415.7H1356M1356 421.1H1357M1357 423.6H1382M1382 422.1H1383M1383 423.6H1385M1385 420.7H1386M1386 421.6H1387M1387 423.6H1388M1388 422.1H1389M1389 420.6H1390M1390 423.6H1391M1391 421.8H1392M1392 420.1H1395M1395 421.0H1396M1396 423.6H1397M1397 413.5H1398M1398 412.7H1399M1399 420.9H1400M1400 420.7H1401M1401 423.6H1405M1405 422.1H1408M1408 421.0H1409M1409 421.1H1410M1410 418.0H1411M1411 414.3H1412M1412 418.0H1413M1413 423.6H1414M1414 416.6H1417M1417 421.5H1418M1418 421.7H1419M1419 420.7H1420M1420 421.2H1421M1421 423.6H1426M1426 422.1H1428M1428 421.9H1429M1429 423.6H1430M1430 419.8H1433M1433 420.7H1434M1434 421.7H1435M1435 423.6H1437M1437 413.1H1438M1438 421.7H1439M1439 419.9H1440M1440 421.6H1441M1441 421.7H1442M1442 421.2H1443M1443 423.6H1444M1444 422.0H1445M1445 421.9H1447M1447 423.6H1448M1448 421.0H1449M1449 421.1H1450M1450 420.7H1451M1451 421.1H1452M1452 423.6H1454M1454 421.1H1455M1455 421.5H1456M1456 423.6H1457M1457 414.1H1458M1458 421.9H1459M1459 416.7H1460M1460 423.6H1461M1461 422.1H1463M1463 423.6H1465M1465 422.1H1466M1466 420.8H1467M1467 420.9H1468M1468 423.6H1487" fill="none" stroke="#c98f58" stroke-width="1" stroke-opacity="0.9"/></g><g ><path d="M491 463.6V449.3H492V454.3H493V458.3H495V454.1H496V454.0H498V458.4H499V456.0H500V455.8H502V443.6H503V455.1H504V456.6H507V455.7H508V458.1H509V449.7H510V458.3H511V455.5H513V452.9H514V455.5H515V456.4H518V449.9H519V461.4H520V460.0H521V442.0H522V458.1H526V444.8H527V453.9H531V444.2H532V453.9H533V446.0H534V446.8H535V456.2H537V454.5H538V461.6H539V461.5H540V457.9H542V450.6H543V443.8H544V442.1H545V461.1H546V444.7H547V452.7H549V460.1H550V451.6H551V452.7H553V454.7H554V453.4H556V448.3H557V443.3H558V453.4H561V457.9H563V457.1H565V441.7H566V455.9H567V450.1H568V445.9H569V461.0H570V448.5H571V455.2H573V454.3H574V458.0H576V454.5H577V444.6H601V449.6H605V458.4H606V455.8H607V453.6H614V456.4H615V445.0H616V455.6H618V455.9H619V461.2H620V452.7H623V458.5H625V456.0H627V444.2H628V455.9H630V458.3H631V443.4H632V461.2H633V444.1H634V461.5H635V450.6H636V447.7H637V444.2H638V453.3H639V454.9H641V455.1H643V456.6H644V453.9H646V448.2H647V456.8H649V452.9H654V456.0H656V454.9H657V444.5H658V454.9H659V444.9H660V454.9H661V454.0H662V457.5H664V453.2H668V449.4H669V458.5H670V453.7H672V448.2H673V455.9H675V457.7H677V441.8H678V457.7H680V443.3H681V454.0H682V453.4H684V458.1H686V454.4H688V450.6H712V451.6H716V444.8H717V455.5H718V456.6H719V448.0H720V455.1H721V446.6H722V455.1H723V452.7H725V457.9H726V457.6H728V444.4H729V449.7H730V442.9H731V455.9H732V455.6H733V457.2H734V456.6H736V454.1H737V455.3H738V457.0H739V458.3H741V450.9H742V446.7H743V449.0H744V449.8H745V453.9H747V454.5H748V456.8H750V449.4H751V457.9H753V460.2H754V461.2H755V457.0H756V446.9H757V461.5H758V460.4H759V457.0H760V456.7H762V454.8H763V457.3H764V450.5H765V457.3H766V447.2H767V456.3H769V453.4H770V456.5H773V458.5H775V457.7H779V457.2H781V457.4H782V453.1H784V452.0H785V455.0H786V447.7H787V447.8H788V460.5H789V453.2H791V453.3H792V453.4H793V448.6H794V446.9H795V456.7H797V452.1H823V447.6H827V457.8H828V458.2H831V454.4H833V449.0H834V454.4H836V457.0H838V443.1H839V457.3H841V456.6H842V453.7H843V448.2H844V448.4H845V453.7H847V457.4H849V447.7H850V457.9H852V445.4H853V453.4H855V452.8H857V457.4H858V454.2H859V453.6H861V457.2H862V449.3H863V453.0H864V442.1H865V449.4H866V442.6H867V458.0H868V456.3H869V457.2H871V456.6H872V455.2H874V457.2H875V457.3H876V448.0H877V454.0H878V455.2H879V455.4H881V449.9H882V456.8H883V456.3H884V457.5H886V458.0H888V456.8H890V447.0H891V457.1H892V454.5H893V448.9H894V441.8H895V452.0H896V446.7H897V444.6H898V457.0H899V445.9H900V453.9H902V454.1H904V461.5H905V459.7H906V450.3H907V453.0H909V456.6H910V449.1H934V451.6H938V458.5H939V444.6H940V458.5H942V457.1H944V451.0H945V450.8H946V451.9H947V457.1H949V457.2H950V458.3H951V456.1H953V445.9H954V456.1H956V441.7H957V443.7H958V443.5H959V452.9H960V455.7H961V446.6H962V455.7H963V455.8H964V442.7H965V448.0H966V458.5H969V452.5H970V458.5H971V445.9H972V444.4H973V458.5H975V448.8H976V443.6H977V442.4H978V442.5H979V458.5H981V457.6H983V458.3H985V446.4H986V448.7H987V451.7H988V443.4H989V454.2H992V453.0H994V456.5H995V454.0H997V460.1H998V459.8H999V458.2H1003V453.2H1006V442.4H1007V461.1H1008V460.3H1009V457.9H1011V454.8H1013V453.4H1014V453.1H1015V441.8H1016V456.5H1019V456.7H1021V442.9H1022V454.1H1045V449.6H1049V453.9H1051V454.7H1053V455.2H1055V457.9H1059V457.2H1061V447.0H1062V457.2H1064V448.0H1065V455.5H1067V456.5H1069V456.7H1071V453.9H1072V456.5H1074V444.4H1075V457.2H1077V452.8H1079V455.3H1081V451.3H1082V455.3H1084V449.1H1085V450.1H1086V442.0H1087V460.0H1088V459.7H1089V455.3H1091V455.8H1093V454.0H1094V456.9H1096V442.1H1097V443.9H1098V456.9H1100V446.6H1101V455.4H1102V456.8H1104V455.2H1105V445.9H1106V452.4H1107V448.0H1108V455.2H1110V451.7H1111V455.2H1112V443.8H1113V452.9H1115V444.5H1116V452.9H1117V452.8H1119V453.5H1121V461.5H1122V456.9H1124V453.1H1125V445.8H1126V456.7H1127V448.3H1128V449.8H1129V445.9H1130V450.5H1131V455.6H1132V457.2H1134V452.6H1156V451.6H1160V453.5H1161V452.0H1162V453.5H1164V447.0H1165V458.0H1166V458.2H1168V458.4H1170V448.6H1171V456.1H1172V459.9H1173V460.6H1174V451.7H1175V456.1H1177V451.3H1178V453.6H1179V454.0H1180V453.3H1182V456.9H1184V442.9H1185V459.7H1186V454.3H1188V454.4H1189V451.6H1190V454.8H1192V458.0H1193V449.2H1194V449.7H1195V451.5H1196V450.1H1197V445.1H1198V447.1H1199V453.0H1200V444.2H1201V453.0H1203V444.7H1204V453.7H1206V457.9H1207V456.5H1213V448.0H1214V446.0H1215V456.5H1219V457.2H1220V441.6H1221V454.2H1223V455.9H1225V443.2H1226V453.1H1228V453.9H1230V447.0H1231V456.4H1233V453.7H1235V446.0H1236V451.7H1237V457.0H1239V453.0H1241V443.9H1242V456.9H1243V455.5H1245V453.6H1267V450.6H1271V457.8H1272V456.8H1273V458.3H1274V453.8H1276V451.6H1277V455.5H1278V457.5H1285V451.3H1286V457.5H1287V455.2H1288V445.1H1289V452.7H1291V454.5H1292V441.8H1293V451.9H1294V454.4H1295V453.6H1296V455.6H1298V461.1H1299V460.5H1300V444.8H1301V455.5H1302V450.5H1303V453.4H1304V454.8H1306V456.1H1307V457.0H1309V455.2H1313V456.7H1314V443.9H1315V446.9H1316V456.7H1317V443.0H1318V456.7H1320V452.6H1321V451.6H1322V453.6H1324V443.5H1325V455.2H1328V457.9H1329V445.0H1330V442.4H1331V455.3H1332V453.5H1334V452.9H1336V442.7H1337V452.9H1338V455.2H1339V458.1H1341V447.1H1342V448.0H1343V457.6H1346V455.1H1347V457.5H1349V444.0H1350V457.5H1352V449.0H1353V445.8H1354V442.1H1355V453.1H1378V454.6H1382V453.9H1389V451.2H1390V457.3H1391V454.4H1392V442.3H1393V453.4H1396V448.0H1397V453.4H1398V455.3H1399V448.8H1400V454.5H1402V458.5H1403V451.2H1404V448.7H1405V446.0H1406V454.8H1408V455.5H1410V453.3H1412V457.5H1417V457.4H1418V454.2H1420V453.7H1422V457.7H1424V449.6H1425V458.6H1427V461.4H1428V457.2H1430V445.3H1431V452.4H1432V458.0H1436V449.6H1437V460.3H1438V461.1H1439V458.0H1440V456.6H1442V458.1H1446V454.4H1448V455.9H1451V452.9H1452V446.9H1453V455.7H1456V443.8H1457V446.4H1458V461.5H1459V456.1H1463V454.3H1466V449.1H1467V454.6H1487V463.6Z" fill="#d4d58d"/><path d="M491 449.3H492M492 454.3H493M493 458.3H495M495 454.1H496M496 454.0H498M498 458.4H499M499 456.0H500M500 455.8H502M502 443.6H503M503 455.1H504M504 456.6H507M507 455.7H508M508 458.1H509M509 449.7H510M510 458.3H511M511 455.5H513M513 452.9H514M514 455.5H515M515 456.4H518M518 449.9H519M519 461.4H520M520 460.0H521M521 442.0H522M522 458.1H526M526 444.8H527M527 453.9H531M531 444.2H532M532 453.9H533M533 446.0H534M534 446.8H535M535 456.2H537M537 454.5H538M538 461.6H539M539 461.5H540M540 457.9H542M542 450.6H543M543 443.8H544M544 442.1H545M545 461.1H546M546 444.7H547M547 452.7H549M549 460.1H550M550 451.6H551M551 452.7H553M553 454.7H554M554 453.4H556M556 448.3H557M557 443.3H558M558 453.4H561M561 457.9H563M563 457.1H565M565 441.7H566M566 455.9H567M567 450.1H568M568 445.9H569M569 461.0H570M570 448.5H571M571 455.2H573M573 454.3H574M574 458.0H576M576 454.5H577M577 444.6H601M601 449.6H605M605 458.4H606M606 455.8H607M607 453.6H614M614 456.4H615M615 445.0H616M616 455.6H618M618 455.9H619M619 461.2H620M620 452.7H623M623 458.5H625M625 456.0H627M627 444.2H628M628 455.9H630M630 458.3H631M631 443.4H632M632 461.2H633M633 444.1H634M634 461.5H635M635 450.6H636M636 447.7H637M637 444.2H638M638 453.3H639M639 454.9H641M641 455.1H643M643 456.6H644M644 453.9H646M646 448.2H647M647 456.8H649M649 452.9H654M654 456.0H656M656 454.9H657M657 444.5H658M658 454.9H659M659 444.9H660M660 454.9H661M661 454.0H662M662 457.5H664M664 453.2H668M668 449.4H669M669 458.5H670M670 453.7H672M672 448.2H673M673 455.9H675M675 457.7H677M677 441.8H678M678 457.7H680M680 443.3H681M681 454.0H682M682 453.4H684M684 458.1H686M686 454.4H688M688 450.6H712M712 451.6H716M716 444.8H717M717 455.5H718M718 456.6H719M719 448.0H720M720 455.1H721M721 446.6H722M722 455.1H723M723 452.7H725M725 457.9H726M726 457.6H728M728 444.4H729M729 449.7H730M730 442.9H731M731 455.9H732M732 455.6H733M733 457.2H734M734 456.6H736M736 454.1H737M737 455.3H738M738 457.0H739M739 458.3H741M741 450.9H742M742 446.7H743M743 449.0H744M744 449.8H745M745 453.9H747M747 454.5H748M748 456.8H750M750 449.4H751M751 457.9H753M753 460.2H754M754 461.2H755M755 457.0H756M756 446.9H757M757 461.5H758M758 460.4H759M759 457.0H760M760 456.7H762M762 454.8H763M763 457.3H764M764 450.5H765M765 457.3H766M766 447.2H767M767 456.3H769M769 453.4H770M770 456.5H773M773 458.5H775M775 457.7H779M779 457.2H781M781 457.4H782M782 453.1H784M784 452.0H785M785 455.0H786M786 447.7H787M787 447.8H788M788 460.5H789M789 453.2H791M791 453.3H792M792 453.4H793M793 448.6H794M794 446.9H795M795 456.7H797M797 452.1H823M823 447.6H827M827 457.8H828M828 458.2H831M831 454.4H833M833 449.0H834M834 454.4H836M836 457.0H838M838 443.1H839M839 457.3H841M841 456.6H842M842 453.7H843M843 448.2H844M844 448.4H845M845 453.7H847M847 457.4H849M849 447.7H850M850 457.9H852M852 445.4H853M853 453.4H855M855 452.8H857M857 457.4H858M858 454.2H859M859 453.6H861M861 457.2H862M862 449.3H863M863 453.0H864M864 442.1H865M865 449.4H866M866 442.6H867M867 458.0H868M868 456.3H869M869 457.2H871M871 456.6H872M872 455.2H874M874 457.2H875M875 457.3H876M876 448.0H877M877 454.0H878M878 455.2H879M879 455.4H881M881 449.9H882M882 456.8H883M883 456.3H884M884 457.5H886M886 458.0H888M888 456.8H890M890 447.0H891M891 457.1H892M892 454.5H893M893 448.9H894M894 441.8H895M895 452.0H896M896 446.7H897M897 444.6H898M898 457.0H899M899 445.9H900M900 453.9H902M902 454.1H904M904 461.5H905M905 459.7H906M906 450.3H907M907 453.0H909M909 456.6H910M910 449.1H934M934 451.6H938M938 458.5H939M939 444.6H940M940 458.5H942M942 457.1H944M944 451.0H945M945 450.8H946M946 451.9H947M947 457.1H949M949 457.2H950M950 458.3H951M951 456.1H953M953 445.9H954M954 456.1H956M956 441.7H957M957 443.7H958M958 443.5H959M959 452.9H960M960 455.7H961M961 446.6H962M962 455.7H963M963 455.8H964M964 442.7H965M965 448.0H966M966 458.5H969M969 452.5H970M970 458.5H971M971 445.9H972M972 444.4H973M973 458.5H975M975 448.8H976M976 443.6H977M977 442.4H978M978 442.5H979M979 458.5H981M981 457.6H983M983 458.3H985M985 446.4H986M986 448.7H987M987 451.7H988M988 443.4H989M989 454.2H992M992 453.0H994M994 456.5H995M995 454.0H997M997 460.1H998M998 459.8H999M999 458.2H1003M1003 453.2H1006M1006 442.4H1007M1007 461.1H1008M1008 460.3H1009M1009 457.9H1011M1011 454.8H1013M1013 453.4H1014M1014 453.1H1015M1015 441.8H1016M1016 456.5H1019M1019 456.7H1021M1021 442.9H1022M1022 454.1H1045M1045 449.6H1049M1049 453.9H1051M1051 454.7H1053M1053 455.2H1055M1055 457.9H1059M1059 457.2H1061M1061 447.0H1062M1062 457.2H1064M1064 448.0H1065M1065 455.5H1067M1067 456.5H1069M1069 456.7H1071M1071 453.9H1072M1072 456.5H1074M1074 444.4H1075M1075 457.2H1077M1077 452.8H1079M1079 455.3H1081M1081 451.3H1082M1082 455.3H1084M1084 449.1H1085M1085 450.1H1086M1086 442.0H1087M1087 460.0H1088M1088 459.7H1089M1089 455.3H1091M1091 455.8H1093M1093 454.0H1094M1094 456.9H1096M1096 442.1H1097M1097 443.9H1098M1098 456.9H1100M1100 446.6H1101M1101 455.4H1102M1102 456.8H1104M1104 455.2H1105M1105 445.9H1106M1106 452.4H1107M1107 448.0H1108M1108 455.2H1110M1110 451.7H1111M1111 455.2H1112M1112 443.8H1113M1113 452.9H1115M1115 444.5H1116M1116 452.9H1117M1117 452.8H1119M1119 453.5H1121M1121 461.5H1122M1122 456.9H1124M1124 453.1H1125M1125 445.8H1126M1126 456.7H1127M1127 448.3H1128M1128 449.8H1129M1129 445.9H1130M1130 450.5H1131M1131 455.6H1132M1132 457.2H1134M1134 452.6H1156M1156 451.6H1160M1160 453.5H1161M1161 452.0H1162M1162 453.5H1164M1164 447.0H1165M1165 458.0H1166M1166 458.2H1168M1168 458.4H1170M1170 448.6H1171M1171 456.1H1172M1172 459.9H1173M1173 460.6H1174M1174 451.7H1175M1175 456.1H1177M1177 451.3H1178M1178 453.6H1179M1179 454.0H1180M1180 453.3H1182M1182 456.9H1184M1184 442.9H1185M1185 459.7H1186M1186 454.3H1188M1188 454.4H1189M1189 451.6H1190M1190 454.8H1192M1192 458.0H1193M1193 449.2H1194M1194 449.7H1195M1195 451.5H1196M1196 450.1H1197M1197 445.1H1198M1198 447.1H1199M1199 453.0H1200M1200 444.2H1201M1201 453.0H1203M1203 444.7H1204M1204 453.7H1206M1206 457.9H1207M1207 456.5H1213M1213 448.0H1214M1214 446.0H1215M1215 456.5H1219M1219 457.2H1220M1220 441.6H1221M1221 454.2H1223M1223 455.9H1225M1225 443.2H1226M1226 453.1H1228M1228 453.9H1230M1230 447.0H1231M1231 456.4H1233M1233 453.7H1235M1235 446.0H1236M1236 451.7H1237M1237 457.0H1239M1239 453.0H1241M1241 443.9H1242M1242 456.9H1243M1243 455.5H1245M1245 453.6H1267M1267 450.6H1271M1271 457.8H1272M1272 456.8H1273M1273 458.3H1274M1274 453.8H1276M1276 451.6H1277M1277 455.5H1278M1278 457.5H1285M1285 451.3H1286M1286 457.5H1287M1287 455.2H1288M1288 445.1H1289M1289 452.7H1291M1291 454.5H1292M1292 441.8H1293M1293 451.9H1294M1294 454.4H1295M1295 453.6H1296M1296 455.6H1298M1298 461.1H1299M1299 460.5H1300M1300 444.8H1301M1301 455.5H1302M1302 450.5H1303M1303 453.4H1304M1304 454.8H1306M1306 456.1H1307M1307 457.0H1309M1309 455.2H1313M1313 456.7H1314M1314 443.9H1315M1315 446.9H1316M1316 456.7H1317M1317 443.0H1318M1318 456.7H1320M1320 452.6H1321M1321 451.6H1322M1322 453.6H1324M1324 443.5H1325M1325 455.2H1328M1328 457.9H1329M1329 445.0H1330M1330 442.4H1331M1331 455.3H1332M1332 453.5H1334M1334 452.9H1336M1336 442.7H1337M1337 452.9H1338M1338 455.2H1339M1339 458.1H1341M1341 447.1H1342M1342 448.0H1343M1343 457.6H1346M1346 455.1H1347M1347 457.5H1349M1349 444.0H1350M1350 457.5H1352M1352 449.0H1353M1353 445.8H1354M1354 442.1H1355M1355 453.1H1378M1378 454.6H1382M1382 453.9H1389M1389 451.2H1390M1390 457.3H1391M1391 454.4H1392M1392 442.3H1393M1393 453.4H1396M1396 448.0H1397M1397 453.4H1398M1398 455.3H1399M1399 448.8H1400M1400 454.5H1402M1402 458.5H1403M1403 451.2H1404M1404 448.7H1405M1405 446.0H1406M1406 454.8H1408M1408 455.5H1410M1410 453.3H1412M1412 457.5H1417M1417 457.4H1418M1418 454.2H1420M1420 453.7H1422M1422 457.7H1424M1424 449.6H1425M1425 458.6H1427M1427 461.4H1428M1428 457.2H1430M1430 445.3H1431M1431 452.4H1432M1432 458.0H1436M1436 449.6H1437M1437 460.3H1438M1438 461.1H1439M1439 458.0H1440M1440 456.6H1442M1442 458.1H1446M1446 454.4H1448M1448 455.9H1451M1451 452.9H1452M1452 446.9H1453M1453 455.7H1456M1456 443.8H1457M1457 446.4H1458M1458 461.5H1459M1459 456.1H1463M1463 454.3H1466M1466 449.1H1467M1467 454.6H1487" fill="none" stroke="#c3c55c" stroke-width="1" stroke-opacity="0.9"/></g><g ><path d="M491 503.6V501.3H492V502.0H493V500.8H494V503.6H495V485.4H496V500.7H497V501.7H498V503.6H499V502.0H500V489.7H502V482.2H503V503.6H504V478.7H505V503.6H506V493.4H507V501.6H508V493.7H509V501.8H510V500.8H511V486.0H512V503.6H513V501.0H514V492.1H515V503.6H516V501.8H517V501.0H518V501.7H519V503.6H520V502.6H521V482.4H522V502.1H523V503.6H524V501.2H525V503.6H529V501.6H530V500.8H531V503.6H532V495.8H533V490.4H534V501.8H535V502.0H536V503.6H537V476.8H538V476.9H539V483.3H540V500.7H541V485.5H542V503.6H543V502.5H544V500.8H545V490.1H546V503.6H547V500.3H548V486.5H550V502.6H551V503.6H552V477.9H553V502.1H555V493.3H556V500.9H557V503.6H558V500.9H559V502.1H560V501.9H561V494.3H562V501.7H563V501.3H564V500.8H565V481.2H566V501.3H567V502.1H568V483.0H569V501.0H570V501.4H571V500.7H572V482.3H573V502.1H574V503.6H575V477.1H576V493.0H577V502.3H578V478.0H579V500.9H580V503.6H602V501.0H603V503.6H604V500.9H605V502.0H606V494.9H607V501.2H608V490.9H609V503.6H610V491.3H611V503.6H612V498.4H613V503.6H615V497.0H616V503.6H617V499.5H618V501.0H620V502.6H621V476.5H622V479.7H623V503.6H624V501.4H625V503.6H626V501.8H627V498.9H628V503.6H629V494.9H630V502.0H631V476.7H632V501.6H633V484.2H634V502.1H635V501.3H636V503.6H637V500.7H638V501.0H639V502.1H640V489.2H641V503.6H642V480.5H643V500.6H644V501.0H645V476.7H646V501.7H647V503.6H648V491.0H649V486.6H650V499.5H651V501.7H652V501.9H653V502.0H654V502.6H655V477.1H656V500.9H657V499.4H658V496.9H659V503.6H660V501.7H661V503.6H662V501.6H663V486.4H664V488.2H665V501.6H666V502.3H667V483.5H668V501.7H669V501.5H670V486.0H671V501.2H672V500.7H673V500.8H674V501.8H675V501.9H676V503.6H680V501.6H681V485.7H682V497.7H683V503.6H684V499.7H685V500.9H686V481.4H688V487.1H689V489.4H691V503.6H713V500.3H714V488.3H716V503.6H717V494.0H718V501.8H719V483.9H720V483.4H721V501.7H723V481.6H724V476.2H725V503.6H726V501.7H727V493.2H729V493.0H730V495.0H731V498.4H732V502.0H733V503.6H734V484.4H735V499.0H736V501.0H737V501.1H738V503.6H739V502.1H740V479.6H741V500.7H742V501.8H743V491.7H744V503.6H745V502.1H746V503.6H749V497.8H750V502.0H751V503.6H752V490.0H753V500.8H754V487.9H755V491.6H756V481.9H757V475.9H759V502.5H760V501.4H761V502.4H762V501.0H763V502.3H764V490.9H765V503.6H767V486.3H768V503.6H769V500.8H770V503.6H772V501.8H773V501.0H774V501.8H775V501.9H776V501.8H777V502.5H778V501.4H779V500.8H780V476.7H781V487.9H782V502.6H783V503.6H784V502.1H785V496.2H786V477.9H787V477.0H788V503.6H789V501.7H790V500.7H791V494.9H792V503.6H793V481.4H794V503.6H797V482.9H798V502.1H799V501.1H801V477.2H802V503.6H824V481.6H825V501.9H826V501.0H827V484.0H828V478.1H829V500.9H830V495.7H831V492.7H832V486.9H833V490.6H834V498.5H835V502.4H836V503.6H837V485.9H838V503.6H839V486.0H840V502.0H841V487.3H842V502.5H843V502.1H844V482.5H845V503.6H846V500.9H847V478.6H848V479.6H849V502.6H850V501.7H851V500.9H852V478.1H853V503.6H854V484.6H855V500.9H856V476.5H858V501.1H859V500.6H860V478.1H861V490.6H862V479.7H863V502.5H864V500.7H866V503.6H867V501.1H868V482.0H869V494.4H870V499.4H871V502.1H872V503.6H873V483.6H874V487.6H875V478.4H876V501.5H877V503.6H878V479.1H879V496.3H880V480.5H881V503.6H883V502.4H884V486.0H885V501.9H886V501.7H888V503.6H889V502.4H890V501.8H891V489.7H892V503.6H893V488.3H896V503.6H897V489.6H898V501.9H899V490.0H900V502.3H901V477.4H902V502.0H903V482.8H904V502.3H905V484.3H906V488.5H907V501.9H908V503.6H909V502.1H910V502.6H911V501.5H912V501.2H913V503.6H935V501.2H936V489.9H937V492.1H938V483.3H939V502.2H940V501.4H941V503.6H943V498.2H944V501.1H945V502.2H946V502.3H947V483.5H948V500.7H949V501.2H950V497.4H951V503.6H954V476.0H955V501.5H956V501.9H957V495.1H958V487.1H959V503.6H960V502.4H961V502.1H962V500.7H963V489.1H964V497.0H965V501.5H966V478.5H967V502.5H968V495.4H969V501.4H970V495.6H971V500.9H972V477.0H973V500.9H974V501.1H975V501.7H976V503.6H977V501.0H978V502.0H979V503.6H980V477.9H981V502.5H982V501.4H983V480.3H984V503.6H985V501.4H986V502.3H987V503.6H988V502.3H989V503.6H990V496.1H991V479.5H992V494.2H993V503.6H994V487.2H995V501.0H996V484.9H997V501.1H999V502.6H1000V497.7H1001V503.6H1002V477.7H1003V500.9H1004V479.6H1005V478.5H1006V479.6H1007V477.6H1008V501.9H1009V489.8H1010V490.2H1011V503.6H1012V500.7H1013V501.7H1014V503.6H1015V482.7H1017V501.5H1018V500.6H1019V501.7H1020V494.6H1021V502.3H1022V502.1H1023V502.2H1024V503.6H1046V502.5H1047V503.6H1048V501.7H1049V489.2H1050V502.4H1051V503.6H1052V496.1H1053V503.6H1054V501.0H1055V500.7H1056V502.4H1057V484.4H1058V497.7H1059V501.6H1060V478.8H1061V501.8H1062V501.5H1063V503.6H1064V501.2H1065V491.7H1066V489.3H1067V497.3H1068V477.7H1071V501.0H1072V485.8H1073V500.7H1074V498.9H1075V479.6H1076V501.6H1077V501.8H1078V500.9H1079V503.6H1080V501.7H1081V500.7H1082V502.1H1083V503.6H1084V493.9H1085V501.9H1086V500.9H1088V492.0H1089V491.7H1090V502.2H1091V501.3H1092V494.0H1093V501.1H1094V494.9H1095V503.6H1096V491.2H1097V501.0H1098V503.6H1099V500.7H1100V484.3H1101V492.5H1102V502.3H1103V501.1H1104V493.0H1105V501.4H1106V482.7H1107V482.6H1108V499.7H1109V502.5H1110V501.7H1111V503.6H1112V502.3H1113V502.4H1114V478.5H1115V497.6H1116V491.8H1117V501.8H1118V502.0H1119V501.8H1120V493.2H1121V486.6H1122V501.7H1123V503.6H1124V501.9H1125V478.0H1126V502.1H1127V501.4H1128V482.4H1129V486.3H1130V495.5H1131V476.7H1132V503.6H1133V492.1H1134V502.1H1158V493.0H1159V478.3H1160V493.0H1161V501.8H1162V503.6H1165V501.1H1166V485.4H1168V492.9H1169V479.7H1170V501.6H1171V503.6H1172V501.6H1173V500.9H1174V501.5H1175V478.9H1176V503.6H1177V497.9H1180V477.5H1181V503.6H1182V476.5H1183V500.7H1184V501.9H1185V502.4H1186V486.4H1187V495.3H1188V501.3H1189V501.0H1190V488.5H1193V502.5H1195V502.4H1196V501.5H1197V496.3H1198V485.1H1200V503.6H1201V493.5H1202V500.7H1203V481.9H1204V503.6H1205V486.8H1206V502.4H1207V502.3H1208V475.8H1209V503.6H1211V497.1H1212V500.7H1213V503.6H1216V496.9H1217V497.7H1218V503.6H1219V497.3H1220V503.6H1221V501.5H1222V501.2H1223V494.3H1224V500.6H1225V502.1H1226V503.6H1228V475.7H1229V496.8H1230V501.5H1231V489.6H1232V485.4H1233V502.2H1234V487.6H1235V502.3H1236V479.3H1237V492.8H1238V502.6H1239V502.2H1240V476.6H1243V501.0H1244V503.6H1245V501.0H1246V503.6H1268V501.3H1269V495.7H1270V502.3H1271V501.9H1272V502.2H1273V488.6H1274V503.6H1277V479.0H1278V489.5H1279V503.6H1280V484.6H1281V493.6H1282V476.0H1283V503.6H1284V486.2H1285V489.7H1288V502.4H1289V503.6H1290V501.1H1291V503.6H1293V492.3H1294V501.1H1295V501.2H1296V494.1H1297V501.9H1298V501.8H1299V493.0H1300V493.2H1301V481.5H1302V501.7H1303V489.6H1304V503.6H1305V481.1H1306V502.2H1307V491.3H1308V503.6H1311V499.1H1312V502.1H1313V501.4H1314V500.8H1315V495.7H1316V503.6H1317V501.4H1318V502.6H1319V503.6H1320V502.2H1321V491.3H1322V503.6H1323V500.7H1324V502.0H1325V487.6H1326V477.0H1327V475.6H1328V502.1H1329V503.6H1331V502.6H1332V490.3H1333V503.6H1335V480.6H1336V503.6H1337V502.3H1338V501.3H1339V503.6H1340V475.8H1341V477.3H1342V501.1H1343V478.9H1344V500.7H1345V501.6H1346V502.2H1347V501.3H1348V503.6H1349V493.3H1350V500.2H1351V503.6H1352V502.1H1353V503.6H1354V488.0H1355V496.6H1356V499.2H1357V503.6H1380V500.8H1381V503.6H1383V501.7H1384V496.1H1385V486.4H1386V495.3H1387V502.5H1388V501.5H1389V502.1H1391V492.4H1392V501.7H1393V485.3H1394V501.7H1395V501.9H1396V503.6H1397V500.3H1398V502.1H1399V501.2H1400V479.9H1401V502.0H1402V501.4H1403V494.1H1404V497.1H1407V502.1H1408V494.5H1409V494.0H1410V490.7H1411V502.5H1412V502.0H1413V501.4H1414V503.6H1416V502.3H1417V495.5H1418V497.7H1419V500.8H1420V503.6H1422V501.9H1423V492.0H1424V489.3H1425V485.3H1426V483.9H1429V503.6H1430V482.8H1431V494.5H1432V503.6H1433V500.8H1434V479.5H1435V501.9H1436V499.8H1437V503.6H1438V499.5H1439V503.6H1440V502.6H1441V502.1H1442V502.2H1443V503.6H1444V502.6H1445V502.1H1447V501.3H1448V500.3H1449V480.6H1450V490.4H1451V501.7H1452V502.1H1453V501.8H1454V483.7H1455V502.2H1456V479.7H1457V502.6H1458V500.9H1459V503.6H1461V494.2H1462V486.1H1463V503.6H1465V501.2H1466V503.6H1487V503.6Z" fill="#d4d58d"/><path d="M491 501.3H492M492 502.0H493M493 500.8H494M494 503.6H495M495 485.4H496M496 500.7H497M497 501.7H498M498 503.6H499M499 502.0H500M500 489.7H502M502 482.2H503M503 503.6H504M504 478.7H505M505 503.6H506M506 493.4H507M507 501.6H508M508 493.7H509M509 501.8H510M510 500.8H511M511 486.0H512M512 503.6H513M513 501.0H514M514 492.1H515M515 503.6H516M516 501.8H517M517 501.0H518M518 501.7H519M519 503.6H520M520 502.6H521M521 482.4H522M522 502.1H523M523 503.6H524M524 501.2H525M525 503.6H529M529 501.6H530M530 500.8H531M531 503.6H532M532 495.8H533M533 490.4H534M534 501.8H535M535 502.0H536M536 503.6H537M537 476.8H538M538 476.9H539M539 483.3H540M540 500.7H541M541 485.5H542M542 503.6H543M543 502.5H544M544 500.8H545M545 490.1H546M546 503.6H547M547 500.3H548M548 486.5H550M550 502.6H551M551 503.6H552M552 477.9H553M553 502.1H555M555 493.3H556M556 500.9H557M557 503.6H558M558 500.9H559M559 502.1H560M560 501.9H561M561 494.3H562M562 501.7H563M563 501.3H564M564 500.8H565M565 481.2H566M566 501.3H567M567 502.1H568M568 483.0H569M569 501.0H570M570 501.4H571M571 500.7H572M572 482.3H573M573 502.1H574M574 503.6H575M575 477.1H576M576 493.0H577M577 502.3H578M578 478.0H579M579 500.9H580M580 503.6H602M602 501.0H603M603 503.6H604M604 500.9H605M605 502.0H606M606 494.9H607M607 501.2H608M608 490.9H609M609 503.6H610M610 491.3H611M611 503.6H612M612 498.4H613M613 503.6H615M615 497.0H616M616 503.6H617M617 499.5H618M618 501.0H620M620 502.6H621M621 476.5H622M622 479.7H623M623 503.6H624M624 501.4H625M625 503.6H626M626 501.8H627M627 498.9H628M628 503.6H629M629 494.9H630M630 502.0H631M631 476.7H632M632 501.6H633M633 484.2H634M634 502.1H635M635 501.3H636M636 503.6H637M637 500.7H638M638 501.0H639M639 502.1H640M640 489.2H641M641 503.6H642M642 480.5H643M643 500.6H644M644 501.0H645M645 476.7H646M646 501.7H647M647 503.6H648M648 491.0H649M649 486.6H650M650 499.5H651M651 501.7H652M652 501.9H653M653 502.0H654M654 502.6H655M655 477.1H656M656 500.9H657M657 499.4H658M658 496.9H659M659 503.6H660M660 501.7H661M661 503.6H662M662 501.6H663M663 486.4H664M664 488.2H665M665 501.6H666M666 502.3H667M667 483.5H668M668 501.7H669M669 501.5H670M670 486.0H671M671 501.2H672M672 500.7H673M673 500.8H674M674 501.8H675M675 501.9H676M676 503.6H680M680 501.6H681M681 485.7H682M682 497.7H683M683 503.6H684M684 499.7H685M685 500.9H686M686 481.4H688M688 487.1H689M689 489.4H691M691 503.6H713M713 500.3H714M714 488.3H716M716 503.6H717M717 494.0H718M718 501.8H719M719 483.9H720M720 483.4H721M721 501.7H723M723 481.6H724M724 476.2H725M725 503.6H726M726 501.7H727M727 493.2H729M729 493.0H730M730 495.0H731M731 498.4H732M732 502.0H733M733 503.6H734M734 484.4H735M735 499.0H736M736 501.0H737M737 501.1H738M738 503.6H739M739 502.1H740M740 479.6H741M741 500.7H742M742 501.8H743M743 491.7H744M744 503.6H745M745 502.1H746M746 503.6H749M749 497.8H750M750 502.0H751M751 503.6H752M752 490.0H753M753 500.8H754M754 487.9H755M755 491.6H756M756 481.9H757M757 475.9H759M759 502.5H760M760 501.4H761M761 502.4H762M762 501.0H763M763 502.3H764M764 490.9H765M765 503.6H767M767 486.3H768M768 503.6H769M769 500.8H770M770 503.6H772M772 501.8H773M773 501.0H774M774 501.8H775M775 501.9H776M776 501.8H777M777 502.5H778M778 501.4H779M779 500.8H780M780 476.7H781M781 487.9H782M782 502.6H783M783 503.6H784M784 502.1H785M785 496.2H786M786 477.9H787M787 477.0H788M788 503.6H789M789 501.7H790M790 500.7H791M791 494.9H792M792 503.6H793M793 481.4H794M794 503.6H797M797 482.9H798M798 502.1H799M799 501.1H801M801 477.2H802M802 503.6H824M824 481.6H825M825 501.9H826M826 501.0H827M827 484.0H828M828 478.1H829M829 500.9H830M830 495.7H831M831 492.7H832M832 486.9H833M833 490.6H834M834 498.5H835M835 502.4H836M836 503.6H837M837 485.9H838M838 503.6H839M839 486.0H840M840 502.0H841M841 487.3H842M842 502.5H843M843 502.1H844M844 482.5H845M845 503.6H846M846 500.9H847M847 478.6H848M848 479.6H849M849 502.6H850M850 501.7H851M851 500.9H852M852 478.1H853M853 503.6H854M854 484.6H855M855 500.9H856M856 476.5H858M858 501.1H859M859 500.6H860M860 478.1H861M861 490.6H862M862 479.7H863M863 502.5H864M864 500.7H866M866 503.6H867M867 501.1H868M868 482.0H869M869 494.4H870M870 499.4H871M871 502.1H872M872 503.6H873M873 483.6H874M874 487.6H875M875 478.4H876M876 501.5H877M877 503.6H878M878 479.1H879M879 496.3H880M880 480.5H881M881 503.6H883M883 502.4H884M884 486.0H885M885 501.9H886M886 501.7H888M888 503.6H889M889 502.4H890M890 501.8H891M891 489.7H892M892 503.6H893M893 488.3H896M896 503.6H897M897 489.6H898M898 501.9H899M899 490.0H900M900 502.3H901M901 477.4H902M902 502.0H903M903 482.8H904M904 502.3H905M905 484.3H906M906 488.5H907M907 501.9H908M908 503.6H909M909 502.1H910M910 502.6H911M911 501.5H912M912 501.2H913M913 503.6H935M935 501.2H936M936 489.9H937M937 492.1H938M938 483.3H939M939 502.2H940M940 501.4H941M941 503.6H943M943 498.2H944M944 501.1H945M945 502.2H946M946 502.3H947M947 483.5H948M948 500.7H949M949 501.2H950M950 497.4H951M951 503.6H954M954 476.0H955M955 501.5H956M956 501.9H957M957 495.1H958M958 487.1H959M959 503.6H960M960 502.4H961M961 502.1H962M962 500.7H963M963 489.1H964M964 497.0H965M965 501.5H966M966 478.5H967M967 502.5H968M968 495.4H969M969 501.4H970M970 495.6H971M971 500.9H972M972 477.0H973M973 500.9H974M974 501.1H975M975 501.7H976M976 503.6H977M977 501.0H978M978 502.0H979M979 503.6H980M980 477.9H981M981 502.5H982M982 501.4H983M983 480.3H984M984 503.6H985M985 501.4H986M986 502.3H987M987 503.6H988M988 502.3H989M989 503.6H990M990 496.1H991M991 479.5H992M992 494.2H993M993 503.6H994M994 487.2H995M995 501.0H996M996 484.9H997M997 501.1H999M999 502.6H1000M1000 497.7H1001M1001 503.6H1002M1002 477.7H1003M1003 500.9H1004M1004 479.6H1005M1005 478.5H1006M1006 479.6H1007M1007 477.6H1008M1008 501.9H1009M1009 489.8H1010M1010 490.2H1011M1011 503.6H1012M1012 500.7H1013M1013 501.7H1014M1014 503.6H1015M1015 482.7H1017M1017 501.5H1018M1018 500.6H1019M1019 501.7H1020M1020 494.6H1021M1021 502.3H1022M1022 502.1H1023M1023 502.2H1024M1024 503.6H1046M1046 502.5H1047M1047 503.6H1048M1048 501.7H1049M1049 489.2H1050M1050 502.4H1051M1051 503.6H1052M1052 496.1H1053M1053 503.6H1054M1054 501.0H1055M1055 500.7H1056M1056 502.4H1057M1057 484.4H1058M1058 497.7H1059M1059 501.6H1060M1060 478.8H1061M1061 501.8H1062M1062 501.5H1063M1063 503.6H1064M1064 501.2H1065M1065 491.7H1066M1066 489.3H1067M1067 497.3H1068M1068 477.7H1071M1071 501.0H1072M1072 485.8H1073M1073 500.7H1074M1074 498.9H1075M1075 479.6H1076M1076 501.6H1077M1077 501.8H1078M1078 500.9H1079M1079 503.6H1080M1080 501.7H1081M1081 500.7H1082M1082 502.1H1083M1083 503.6H1084M1084 493.9H1085M1085 501.9H1086M1086 500.9H1088M1088 492.0H1089M1089 491.7H1090M1090 502.2H1091M1091 501.3H1092M1092 494.0H1093M1093 501.1H1094M1094 494.9H1095M1095 503.6H1096M1096 491.2H1097M1097 501.0H1098M1098 503.6H1099M1099 500.7H1100M1100 484.3H1101M1101 492.5H1102M1102 502.3H1103M1103 501.1H1104M1104 493.0H1105M1105 501.4H1106M1106 482.7H1107M1107 482.6H1108M1108 499.7H1109M1109 502.5H1110M1110 501.7H1111M1111 503.6H1112M1112 502.3H1113M1113 502.4H1114M1114 478.5H1115M1115 497.6H1116M1116 491.8H1117M1117 501.8H1118M1118 502.0H1119M1119 501.8H1120M1120 493.2H1121M1121 486.6H1122M1122 501.7H1123M1123 503.6H1124M1124 501.9H1125M1125 478.0H1126M1126 502.1H1127M1127 501.4H1128M1128 482.4H1129M1129 486.3H1130M1130 495.5H1131M1131 476.7H1132M1132 503.6H1133M1133 492.1H1134M1134 502.1H1158M1158 493.0H1159M1159 478.3H1160M1160 493.0H1161M1161 501.8H1162M1162 503.6H1165M1165 501.1H1166M1166 485.4H1168M1168 492.9H1169M1169 479.7H1170M1170 501.6H1171M1171 503.6H1172M1172 501.6H1173M1173 500.9H1174M1174 501.5H1175M1175 478.9H1176M1176 503.6H1177M1177 497.9H1180M1180 477.5H1181M1181 503.6H1182M1182 476.5H1183M1183 500.7H1184M1184 501.9H1185M1185 502.4H1186M1186 486.4H1187M1187 495.3H1188M1188 501.3H1189M1189 501.0H1190M1190 488.5H1193M1193 502.5H1195M1195 502.4H1196M1196 501.5H1197M1197 496.3H1198M1198 485.1H1200M1200 503.6H1201M1201 493.5H1202M1202 500.7H1203M1203 481.9H1204M1204 503.6H1205M1205 486.8H1206M1206 502.4H1207M1207 502.3H1208M1208 475.8H1209M1209 503.6H1211M1211 497.1H1212M1212 500.7H1213M1213 503.6H1216M1216 496.9H1217M1217 497.7H1218M1218 503.6H1219M1219 497.3H1220M1220 503.6H1221M1221 501.5H1222M1222 501.2H1223M1223 494.3H1224M1224 500.6H1225M1225 502.1H1226M1226 503.6H1228M1228 475.7H1229M1229 496.8H1230M1230 501.5H1231M1231 489.6H1232M1232 485.4H1233M1233 502.2H1234M1234 487.6H1235M1235 502.3H1236M1236 479.3H1237M1237 492.8H1238M1238 502.6H1239M1239 502.2H1240M1240 476.6H1243M1243 501.0H1244M1244 503.6H1245M1245 501.0H1246M1246 503.6H1268M1268 501.3H1269M1269 495.7H1270M1270 502.3H1271M1271 501.9H1272M1272 502.2H1273M1273 488.6H1274M1274 503.6H1277M1277 479.0H1278M1278 489.5H1279M1279 503.6H1280M1280 484.6H1281M1281 493.6H1282M1282 476.0H1283M1283 503.6H1284M1284 486.2H1285M1285 489.7H1288M1288 502.4H1289M1289 503.6H1290M1290 501.1H1291M1291 503.6H1293M1293 492.3H1294M1294 501.1H1295M1295 501.2H1296M1296 494.1H1297M1297 501.9H1298M1298 501.8H1299M1299 493.0H1300M1300 493.2H1301M1301 481.5H1302M1302 501.7H1303M1303 489.6H1304M1304 503.6H1305M1305 481.1H1306M1306 502.2H1307M1307 491.3H1308M1308 503.6H1311M1311 499.1H1312M1312 502.1H1313M1313 501.4H1314M1314 500.8H1315M1315 495.7H1316M1316 503.6H1317M1317 501.4H1318M1318 502.6H1319M1319 503.6H1320M1320 502.2H1321M1321 491.3H1322M1322 503.6H1323M1323 500.7H1324M1324 502.0H1325M1325 487.6H1326M1326 477.0H1327M1327 475.6H1328M1328 502.1H1329M1329 503.6H1331M1331 502.6H1332M1332 490.3H1333M1333 503.6H1335M1335 480.6H1336M1336 503.6H1337M1337 502.3H1338M1338 501.3H1339M1339 503.6H1340M1340 475.8H1341M1341 477.3H1342M1342 501.1H1343M1343 478.9H1344M1344 500.7H1345M1345 501.6H1346M1346 502.2H1347M1347 501.3H1348M1348 503.6H1349M1349 493.3H1350M1350 500.2H1351M1351 503.6H1352M1352 502.1H1353M1353 503.6H1354M1354 488.0H1355M1355 496.6H1356M1356 499.2H1357M1357 503.6H1380M1380 500.8H1381M1381 503.6H1383M1383 501.7H1384M1384 496.1H1385M1385 486.4H1386M1386 495.3H1387M1387 502.5H1388M1388 501.5H1389M1389 502.1H1391M1391 492.4H1392M1392 501.7H1393M1393 485.3H1394M1394 501.7H1395M1395 501.9H1396M1396 503.6H1397M1397 500.3H1398M1398 502.1H1399M1399 501.2H1400M1400 479.9H1401M1401 502.0H1402M1402 501.4H1403M1403 494.1H1404M1404 497.1H1407M1407 502.1H1408M1408 494.5H1409M1409 494.0H1410M1410 490.7H1411M1411 502.5H1412M1412 502.0H1413M1413 501.4H1414M1414 503.6H1416M1416 502.3H1417M1417 495.5H1418M1418 497.7H1419M1419 500.8H1420M1420 503.6H1422M1422 501.9H1423M1423 492.0H1424M1424 489.3H1425M1425 485.3H1426M1426 483.9H1429M1429 503.6H1430M1430 482.8H1431M1431 494.5H1432M1432 503.6H1433M1433 500.8H1434M1434 479.5H1435M1435 501.9H1436M1436 499.8H1437M1437 503.6H1438M1438 499.5H1439M1439 503.6H1440M1440 502.6H1441M1441 502.1H1442M1442 502.2H1443M1443 503.6H1444M1444 502.6H1445M1445 502.1H1447M1447 501.3H1448M1448 500.3H1449M1449 480.6H1450M1450 490.4H1451M1451 501.7H1452M1452 502.1H1453M1453 501.8H1454M1454 483.7H1455M1455 502.2H1456M1456 479.7H1457M1457 502.6H1458M1458 500.9H1459M1459 503.6H1461M1461 494.2H1462M1462 486.1H1463M1463 503.6H1465M1465 501.2H1466M1466 503.6H1487" fill="none" stroke="#c3c55c" stroke-width="1" stroke-opacity="0.9"/></g><g clip-path="url(#tc)" ><path d="M491 543.6V541.4H492V543.6H495V540.7H496V542.0H497V536.1H498V533.6H499V543.6H500V542.1H501V540.9H502V543.6H504V541.3H505V540.2H506V541.4H507V541.8H508V542.1H509V543.6H510V541.1H511V543.6H512V542.1H513V543.6H515V541.0H516V540.9H517V530.0H518V541.7H519V540.8H520V542.1H521V535.8H522V523.6H523V540.8H524V543.6H526V540.9H527V530.2H528V541.1H529V543.6H530V541.9H531V523.9H532V535.6H535V542.3H536V540.8H537V543.6H538V542.2H539V543.6H541V540.8H542V539.9H543V529.9H544V543.6H545V540.9H546V543.6H547V540.7H548V527.5H549V542.3H550V538.5H551V543.6H552V535.9H553V541.4H554V543.6H555V542.1H556V541.1H557V543.6H558V536.2H559V542.1H560V541.6H561V542.1H562V543.6H563V542.4H564V540.9H565V543.6H568V541.3H569V540.7H570V541.7H571V530.1H572V541.8H573V523.7H574V543.6H576V529.3H577V541.3H578V543.6H579V542.2H580V543.6H602V524.4H603V543.6H604V542.2H605V543.6H607V540.8H608V543.6H609V534.9H610V524.8H611V542.0H612V540.7H613V543.6H615V542.0H616V541.4H617V543.6H618V541.4H619V541.7H620V531.4H621V541.6H622V541.2H623V536.9H624V542.1H625V526.2H626V541.4H627V543.6H628V541.9H629V543.6H631V541.1H632V542.2H633V543.6H636V524.6H637V543.6H638V540.7H639V530.9H640V543.6H641V540.9H642V541.9H644V543.6H645V532.5H646V532.3H649V543.6H651V541.5H652V542.1H653V541.6H654V534.3H655V542.4H656V543.6H659V542.1H660V540.7H661V541.0H662V542.1H663V543.6H664V541.5H665V542.1H666V537.1H667V543.6H668V535.6H669V542.2H670V529.9H671V543.6H674V540.8H675V543.6H677V523.9H678V542.1H679V543.6H680V541.8H681V543.6H682V542.1H683V541.3H684V526.6H685V543.6H686V542.2H687V531.8H688V541.0H689V543.6H713V541.2H714V541.6H715V528.4H716V543.6H718V542.1H719V541.4H720V543.6H721V542.1H722V543.6H723V542.6H724V541.3H725V543.6H726V539.8H727V543.6H728V528.9H729V542.4H730V543.6H731V541.7H732V540.7H733V543.6H736V540.6H737V543.6H740V542.1H741V543.6H742V542.6H743V543.6H745V536.4H746V542.0H747V541.3H748V543.6H750V522.4H751V541.8H752V541.6H753V543.6H756V542.0H757V534.2H758V540.4H759V543.6H760V542.0H761V543.6H762V542.0H763V538.7H764V541.7H765V541.9H766V540.9H767V543.6H768V522.7H769V537.8H770V527.7H771V543.6H772V540.7H773V543.6H774V541.5H775V530.9H776V543.6H777V542.1H778V533.6H779V540.7H780V536.4H781V526.3H782V540.7H783V543.6H786V542.4H787V543.6H789V542.1H791V543.6H793V540.9H794V542.3H795V543.6H796V541.3H797V541.6H798V541.5H799V543.6H800V536.6H801V527.5H802V543.6H824V537.4H825V543.6H826V541.3H827V543.6H829V533.7H830V543.6H831V541.8H832V543.6H833V540.8H834V543.6H835V536.1H836V543.6H837V542.1H838V541.8H839V541.2H840V523.5H841V543.6H842V527.6H843V543.6H844V525.7H845V542.4H846V541.6H847V540.7H848V543.6H849V540.6H850V541.4H851V543.6H855V541.7H856V532.9H857V543.6H858V542.1H859V543.6H863V542.0H864V543.6H865V540.8H866V542.1H867V539.9H868V543.6H870V541.4H871V543.6H872V542.1H873V534.5H874V543.6H875V541.2H876V540.6H877V527.6H878V543.6H879V530.2H880V541.5H881V543.6H884V532.3H885V543.6H886V523.4H887V541.1H888V540.8H889V536.5H890V540.4H891V540.8H892V543.6H893V542.4H894V543.6H895V542.2H896V541.8H897V543.6H898V540.4H899V541.7H900V543.6H901V525.3H902V540.6H903V537.1H906V543.6H908V541.2H909V535.6H910V542.0H911V543.6H912V541.6H913V543.6H935V523.3H937V543.6H938V542.6H939V525.0H940V543.6H941V542.0H942V527.4H943V543.6H945V540.9H946V526.2H947V542.2H948V541.9H949V542.3H950V543.6H951V535.3H952V543.6H953V541.8H954V543.6H955V541.5H956V534.4H957V541.3H958V543.6H960V540.9H961V525.1H962V536.5H963V542.1H964V533.9H966V523.9H967V543.6H968V542.1H969V541.5H970V528.0H971V532.7H972V543.6H973V542.4H974V543.6H975V541.3H976V523.9H977V531.9H978V543.6H979V540.6H980V543.6H981V541.0H982V527.8H983V525.0H984V543.6H985V537.7H986V522.6H987V533.6H988V523.2H989V537.7H990V541.5H991V542.3H992V541.2H993V543.6H994V542.0H995V543.6H996V540.8H997V543.6H998V540.9H999V539.4H1000V543.6H1001V541.3H1002V522.4H1003V542.0H1004V543.6H1005V542.1H1006V533.9H1007V541.4H1008V543.6H1010V541.5H1011V543.6H1012V534.4H1013V541.8H1014V533.7H1015V541.9H1016V543.6H1017V540.9H1018V540.7H1019V531.2H1020V543.6H1046V541.2H1047V541.3H1048V542.0H1050V541.0H1051V543.6H1052V534.9H1053V543.6H1054V541.0H1055V543.6H1057V542.1H1059V541.6H1060V537.7H1061V542.1H1062V542.0H1063V526.0H1064V543.6H1065V541.9H1066V542.1H1068V541.2H1069V528.7H1070V536.6H1071V542.1H1072V540.7H1073V543.6H1074V533.7H1075V541.6H1076V543.6H1077V542.2H1078V540.7H1079V543.6H1084V524.9H1085V543.6H1086V542.1H1087V542.4H1088V543.6H1096V542.3H1097V540.6H1098V540.8H1099V541.8H1100V522.2H1101V542.1H1102V541.5H1103V542.5H1104V540.9H1105V543.6H1106V540.8H1107V530.8H1108V541.6H1109V542.1H1110V543.6H1111V529.9H1112V543.6H1113V540.8H1114V543.6H1115V522.9H1116V543.6H1119V522.8H1120V541.5H1121V543.6H1122V541.3H1123V541.2H1124V523.9H1125V543.6H1126V534.1H1127V542.6H1128V537.4H1129V541.3H1130V541.6H1131V540.9H1132V541.8H1133V542.5H1134V536.6H1158V543.6H1159V538.9H1160V534.9H1161V541.4H1162V541.8H1163V531.7H1166V534.7H1167V542.0H1168V543.6H1169V531.7H1170V533.6H1171V541.9H1172V543.6H1173V541.2H1174V541.0H1175V541.9H1176V535.2H1177V540.8H1178V530.5H1179V543.6H1183V541.0H1184V543.6H1185V541.4H1186V541.2H1187V529.6H1188V542.4H1189V543.6H1190V541.1H1191V543.6H1192V541.0H1193V543.6H1194V542.1H1195V540.8H1196V543.6H1198V542.3H1199V542.1H1200V540.6H1201V541.3H1202V537.6H1204V543.6H1205V541.1H1206V541.4H1207V543.6H1210V541.7H1211V527.9H1212V543.6H1213V534.8H1214V541.8H1215V541.0H1216V523.2H1217V543.6H1220V541.3H1221V543.6H1222V542.1H1223V543.6H1225V540.7H1226V539.2H1227V543.6H1228V541.7H1229V543.6H1230V540.7H1231V522.2H1232V543.6H1233V525.2H1234V541.8H1235V543.6H1236V541.9H1237V540.7H1238V541.1H1239V541.5H1240V543.6H1242V526.4H1243V541.5H1244V543.6H1245V541.1H1246V543.6H1269V528.9H1270V542.5H1271V543.6H1272V541.9H1273V542.1H1274V543.6H1275V522.8H1276V542.1H1277V540.1H1278V543.6H1280V542.1H1281V543.6H1284V542.5H1285V542.4H1286V543.6H1288V541.1H1289V543.6H1290V542.1H1291V543.6H1292V541.1H1293V542.1H1294V541.5H1295V542.1H1296V540.9H1297V540.6H1298V525.7H1299V543.6H1300V541.7H1301V540.7H1302V543.6H1303V541.7H1304V540.7H1305V542.2H1306V542.0H1307V543.6H1311V525.3H1312V542.5H1313V543.6H1317V541.6H1318V541.8H1319V534.3H1320V541.6H1321V540.9H1322V542.1H1323V541.2H1324V543.6H1325V541.0H1326V541.6H1327V543.6H1328V528.6H1329V543.6H1330V541.7H1331V528.3H1332V528.4H1333V541.1H1334V543.6H1335V539.1H1336V543.6H1342V542.1H1343V542.0H1344V543.6H1346V540.0H1347V543.6H1348V541.8H1350V542.4H1351V543.6H1353V541.8H1354V543.6H1355V541.3H1356V541.4H1357V543.6H1380V542.5H1381V543.6H1382V535.1H1383V543.6H1384V542.1H1385V522.0H1386V543.6H1389V541.6H1390V543.6H1397V539.9H1398V523.7H1401V541.3H1402V543.6H1404V542.1H1405V540.9H1406V542.1H1407V543.6H1408V541.2H1409V540.8H1410V543.6H1411V535.6H1412V526.2H1413V541.3H1414V542.4H1415V541.4H1416V540.8H1417V543.6H1418V542.1H1419V543.6H1420V540.8H1421V543.6H1422V542.1H1423V543.6H1424V531.1H1425V528.0H1426V541.9H1427V540.9H1428V541.6H1429V543.6H1435V534.2H1436V542.1H1437V542.0H1438V542.4H1439V542.3H1440V541.5H1441V541.0H1442V539.6H1443V541.4H1444V527.6H1447V531.0H1448V541.3H1449V540.6H1450V543.6H1452V536.1H1453V543.6H1454V542.5H1455V543.6H1457V538.5H1458V531.5H1459V528.6H1460V531.5H1461V541.5H1462V539.7H1463V541.9H1464V543.6H1465V531.5H1466V543.6H1467V540.7H1468V543.6H1487V543.6Z" fill="#dab691"/><path d="M491 541.4H492M492 543.6H495M495 540.7H496M496 542.0H497M497 536.1H498M498 533.6H499M499 543.6H500M500 542.1H501M501 540.9H502M502 543.6H504M504 541.3H505M505 540.2H506M506 541.4H507M507 541.8H508M508 542.1H509M509 543.6H510M510 541.1H511M511 543.6H512M512 542.1H513M513 543.6H515M515 541.0H516M516 540.9H517M517 530.0H518M518 541.7H519M519 540.8H520M520 542.1H521M521 535.8H522M522 523.6H523M523 540.8H524M524 543.6H526M526 540.9H527M527 530.2H528M528 541.1H529M529 543.6H530M530 541.9H531M531 523.9H532M532 535.6H535M535 542.3H536M536 540.8H537M537 543.6H538M538 542.2H539M539 543.6H541M541 540.8H542M542 539.9H543M543 529.9H544M544 543.6H545M545 540.9H546M546 543.6H547M547 540.7H548M548 527.5H549M549 542.3H550M550 538.5H551M551 543.6H552M552 535.9H553M553 541.4H554M554 543.6H555M555 542.1H556M556 541.1H557M557 543.6H558M558 536.2H559M559 542.1H560M560 541.6H561M561 542.1H562M562 543.6H563M563 542.4H564M564 540.9H565M565 543.6H568M568 541.3H569M569 540.7H570M570 541.7H571M571 530.1H572M572 541.8H573M573 523.7H574M574 543.6H576M576 529.3H577M577 541.3H578M578 543.6H579M579 542.2H580M580 543.6H602M602 524.4H603M603 543.6H604M604 542.2H605M605 543.6H607M607 540.8H608M608 543.6H609M609 534.9H610M610 524.8H611M611 542.0H612M612 540.7H613M613 543.6H615M615 542.0H616M616 541.4H617M617 543.6H618M618 541.4H619M619 541.7H620M620 531.4H621M621 541.6H622M622 541.2H623M623 536.9H624M624 542.1H625M625 526.2H626M626 541.4H627M627 543.6H628M628 541.9H629M629 543.6H631M631 541.1H632M632 542.2H633M633 543.6H636M636 524.6H637M637 543.6H638M638 540.7H639M639 530.9H640M640 543.6H641M641 540.9H642M642 541.9H644M644 543.6H645M645 532.5H646M646 532.3H649M649 543.6H651M651 541.5H652M652 542.1H653M653 541.6H654M654 534.3H655M655 542.4H656M656 543.6H659M659 542.1H660M660 540.7H661M661 541.0H662M662 542.1H663M663 543.6H664M664 541.5H665M665 542.1H666M666 537.1H667M667 543.6H668M668 535.6H669M669 542.2H670M670 529.9H671M671 543.6H674M674 540.8H675M675 543.6H677M677 523.9H678M678 542.1H679M679 543.6H680M680 541.8H681M681 543.6H682M682 542.1H683M683 541.3H684M684 526.6H685M685 543.6H686M686 542.2H687M687 531.8H688M688 541.0H689M689 543.6H713M713 541.2H714M714 541.6H715M715 528.4H716M716 543.6H718M718 542.1H719M719 541.4H720M720 543.6H721M721 542.1H722M722 543.6H723M723 542.6H724M724 541.3H725M725 543.6H726M726 539.8H727M727 543.6H728M728 528.9H729M729 542.4H730M730 543.6H731M731 541.7H732M732 540.7H733M733 543.6H736M736 540.6H737M737 543.6H740M740 542.1H741M741 543.6H742M742 542.6H743M743 543.6H745M745 536.4H746M746 542.0H747M747 541.3H748M748 543.6H750M750 522.4H751M751 541.8H752M752 541.6H753M753 543.6H756M756 542.0H757M757 534.2H758M758 540.4H759M759 543.6H760M760 542.0H761M761 543.6H762M762 542.0H763M763 538.7H764M764 541.7H765M765 541.9H766M766 540.9H767M767 543.6H768M768 522.7H769M769 537.8H770M770 527.7H771M771 543.6H772M772 540.7H773M773 543.6H774M774 541.5H775M775 530.9H776M776 543.6H777M777 542.1H778M778 533.6H779M779 540.7H780M780 536.4H781M781 526.3H782M782 540.7H783M783 543.6H786M786 542.4H787M787 543.6H789M789 542.1H791M791 543.6H793M793 540.9H794M794 542.3H795M795 543.6H796M796 541.3H797M797 541.6H798M798 541.5H799M799 543.6H800M800 536.6H801M801 527.5H802M802 543.6H824M824 537.4H825M825 543.6H826M826 541.3H827M827 543.6H829M829 533.7H830M830 543.6H831M831 541.8H832M832 543.6H833M833 540.8H834M834 543.6H835M835 536.1H836M836 543.6H837M837 542.1H838M838 541.8H839M839 541.2H840M840 523.5H841M841 543.6H842M842 527.6H843M843 543.6H844M844 525.7H845M845 542.4H846M846 541.6H847M847 540.7H848M848 543.6H849M849 540.6H850M850 541.4H851M851 543.6H855M855 541.7H856M856 532.9H857M857 543.6H858M858 542.1H859M859 543.6H863M863 542.0H864M864 543.6H865M865 540.8H866M866 542.1H867M867 539.9H868M868 543.6H870M870 541.4H871M871 543.6H872M872 542.1H873M873 534.5H874M874 543.6H875M875 541.2H876M876 540.6H877M877 527.6H878M878 543.6H879M879 530.2H880M880 541.5H881M881 543.6H884M884 532.3H885M885 543.6H886M886 523.4H887M887 541.1H888M888 540.8H889M889 536.5H890M890 540.4H891M891 540.8H892M892 543.6H893M893 542.4H894M894 543.6H895M895 542.2H896M896 541.8H897M897 543.6H898M898 540.4H899M899 541.7H900M900 543.6H901M901 525.3H902M902 540.6H903M903 537.1H906M906 543.6H908M908 541.2H909M909 535.6H910M910 542.0H911M911 543.6H912M912 541.6H913M913 543.6H935M935 523.3H937M937 543.6H938M938 542.6H939M939 525.0H940M940 543.6H941M941 542.0H942M942 527.4H943M943 543.6H945M945 540.9H946M946 526.2H947M947 542.2H948M948 541.9H949M949 542.3H950M950 543.6H951M951 535.3H952M952 543.6H953M953 541.8H954M954 543.6H955M955 541.5H956M956 534.4H957M957 541.3H958M958 543.6H960M960 540.9H961M961 525.1H962M962 536.5H963M963 542.1H964M964 533.9H966M966 523.9H967M967 543.6H968M968 542.1H969M969 541.5H970M970 528.0H971M971 532.7H972M972 543.6H973M973 542.4H974M974 543.6H975M975 541.3H976M976 523.9H977M977 531.9H978M978 543.6H979M979 540.6H980M980 543.6H981M981 541.0H982M982 527.8H983M983 525.0H984M984 543.6H985M985 537.7H986M986 522.6H987M987 533.6H988M988 523.2H989M989 537.7H990M990 541.5H991M991 542.3H992M992 541.2H993M993 543.6H994M994 542.0H995M995 543.6H996M996 540.8H997M997 543.6H998M998 540.9H999M999 539.4H1000M1000 543.6H1001M1001 541.3H1002M1002 522.4H1003M1003 542.0H1004M1004 543.6H1005M1005 542.1H1006M1006 533.9H1007M1007 541.4H1008M1008 543.6H1010M1010 541.5H1011M1011 543.6H1012M1012 534.4H1013M1013 541.8H1014M1014 533.7H1015M1015 541.9H1016M1016 543.6H1017M1017 540.9H1018M1018 540.7H1019M1019 531.2H1020M1020 543.6H1046M1046 541.2H1047M1047 541.3H1048M1048 542.0H1050M1050 541.0H1051M1051 543.6H1052M1052 534.9H1053M1053 543.6H1054M1054 541.0H1055M1055 543.6H1057M1057 542.1H1059M1059 541.6H1060M1060 537.7H1061M1061 542.1H1062M1062 542.0H1063M1063 526.0H1064M1064 543.6H1065M1065 541.9H1066M1066 542.1H1068M1068 541.2H1069M1069 528.7H1070M1070 536.6H1071M1071 542.1H1072M1072 540.7H1073M1073 543.6H1074M1074 533.7H1075M1075 541.6H1076M1076 543.6H1077M1077 542.2H1078M1078 540.7H1079M1079 543.6H1084M1084 524.9H1085M1085 543.6H1086M1086 542.1H1087M1087 542.4H1088M1088 543.6H1096M1096 542.3H1097M1097 540.6H1098M1098 540.8H1099M1099 541.8H1100M1100 522.2H1101M1101 542.1H1102M1102 541.5H1103M1103 542.5H1104M1104 540.9H1105M1105 543.6H1106M1106 540.8H1107M1107 530.8H1108M1108 541.6H1109M1109 542.1H1110M1110 543.6H1111M1111 529.9H1112M1112 543.6H1113M1113 540.8H1114M1114 543.6H1115M1115 522.9H1116M1116 543.6H1119M1119 522.8H1120M1120 541.5H1121M1121 543.6H1122M1122 541.3H1123M1123 541.2H1124M1124 523.9H1125M1125 543.6H1126M1126 534.1H1127M1127 542.6H1128M1128 537.4H1129M1129 541.3H1130M1130 541.6H1131M1131 540.9H1132M1132 541.8H1133M1133 542.5H1134M1134 536.6H1158M1158 543.6H1159M1159 538.9H1160M1160 534.9H1161M1161 541.4H1162M1162 541.8H1163M1163 531.7H1166M1166 534.7H1167M1167 542.0H1168M1168 543.6H1169M1169 531.7H1170M1170 533.6H1171M1171 541.9H1172M1172 543.6H1173M1173 541.2H1174M1174 541.0H1175M1175 541.9H1176M1176 535.2H1177M1177 540.8H1178M1178 530.5H1179M1179 543.6H1183M1183 541.0H1184M1184 543.6H1185M1185 541.4H1186M1186 541.2H1187M1187 529.6H1188M1188 542.4H1189M1189 543.6H1190M1190 541.1H1191M1191 543.6H1192M1192 541.0H1193M1193 543.6H1194M1194 542.1H1195M1195 540.8H1196M1196 543.6H1198M1198 542.3H1199M1199 542.1H1200M1200 540.6H1201M1201 541.3H1202M1202 537.6H1204M1204 543.6H1205M1205 541.1H1206M1206 541.4H1207M1207 543.6H1210M1210 541.7H1211M1211 527.9H1212M1212 543.6H1213M1213 534.8H1214M1214 541.8H1215M1215 541.0H1216M1216 523.2H1217M1217 543.6H1220M1220 541.3H1221M1221 543.6H1222M1222 542.1H1223M1223 543.6H1225M1225 540.7H1226M1226 539.2H1227M1227 543.6H1228M1228 541.7H1229M1229 543.6H1230M1230 540.7H1231M1231 522.2H1232M1232 543.6H1233M1233 525.2H1234M1234 541.8H1235M1235 543.6H1236M1236 541.9H1237M1237 540.7H1238M1238 541.1H1239M1239 541.5H1240M1240 543.6H1242M1242 526.4H1243M1243 541.5H1244M1244 543.6H1245M1245 541.1H1246M1246 543.6H1269M1269 528.9H1270M1270 542.5H1271M1271 543.6H1272M1272 541.9H1273M1273 542.1H1274M1274 543.6H1275M1275 522.8H1276M1276 542.1H1277M1277 540.1H1278M1278 543.6H1280M1280 542.1H1281M1281 543.6H1284M1284 542.5H1285M1285 542.4H1286M1286 543.6H1288M1288 541.1H1289M1289 543.6H1290M1290 542.1H1291M1291 543.6H1292M1292 541.1H1293M1293 542.1H1294M1294 541.5H1295M1295 542.1H1296M1296 540.9H1297M1297 540.6H1298M1298 525.7H1299M1299 543.6H1300M1300 541.7H1301M1301 540.7H1302M1302 543.6H1303M1303 541.7H1304M1304 540.7H1305M1305 542.2H1306M1306 542.0H1307M1307 543.6H1311M1311 525.3H1312M1312 542.5H1313M1313 543.6H1317M1317 541.6H1318M1318 541.8H1319M1319 534.3H1320M1320 541.6H1321M1321 540.9H1322M1322 542.1H1323M1323 541.2H1324M1324 543.6H1325M1325 541.0H1326M1326 541.6H1327M1327 543.6H1328M1328 528.6H1329M1329 543.6H1330M1330 541.7H1331M1331 528.3H1332M1332 528.4H1333M1333 541.1H1334M1334 543.6H1335M1335 539.1H1336M1336 543.6H1342M1342 542.1H1343M1343 542.0H1344M1344 543.6H1346M1346 540.0H1347M1347 543.6H1348M1348 541.8H1350M1350 542.4H1351M1351 543.6H1353M1353 541.8H1354M1354 543.6H1355M1355 541.3H1356M1356 541.4H1357M1357 543.6H1380M1380 542.5H1381M1381 543.6H1382M1382 535.1H1383M1383 543.6H1384M1384 542.1H1385M1385 522.0H1386M1386 543.6H1389M1389 541.6H1390M1390 543.6H1397M1397 539.9H1398M1398 523.7H1401M1401 541.3H1402M1402 543.6H1404M1404 542.1H1405M1405 540.9H1406M1406 542.1H1407M1407 543.6H1408M1408 541.2H1409M1409 540.8H1410M1410 543.6H1411M1411 535.6H1412M1412 526.2H1413M1413 541.3H1414M1414 542.4H1415M1415 541.4H1416M1416 540.8H1417M1417 543.6H1418M1418 542.1H1419M1419 543.6H1420M1420 540.8H1421M1421 543.6H1422M1422 542.1H1423M1423 543.6H1424M1424 531.1H1425M1425 528.0H1426M1426 541.9H1427M1427 540.9H1428M1428 541.6H1429M1429 543.6H1435M1435 534.2H1436M1436 542.1H1437M1437 542.0H1438M1438 542.4H1439M1439 542.3H1440M1440 541.5H1441M1441 541.0H1442M1442 539.6H1443M1443 541.4H1444M1444 527.6H1447M1447 531.0H1448M1448 541.3H1449M1449 540.6H1450M1450 543.6H1452M1452 536.1H1453M1453 543.6H1454M1454 542.5H1455M1455 543.6H1457M1457 538.5H1458M1458 531.5H1459M1459 528.6H1460M1460 531.5H1461M1461 541.5H1462M1462 539.7H1463M1463 541.9H1464M1464 543.6H1465M1465 531.5H1466M1466 543.6H1467M1467 540.7H1468M1468 543.6H1487" fill="none" stroke="#c98f58" stroke-width="1" stroke-opacity="0.9"/></g><rect x="623.1" y="177" width="1" height="59" fill="rgba(0,0,0,0.2)"/><rect x="623.1" y="236" width="1" height="347" fill="rgba(0,0,0,0.12)"/><rect x="766.7" y="177" width="1" height="59" fill="rgba(0,0,0,0.2)"/><rect x="766.7" y="236" width="1" height="347" fill="rgba(0,0,0,0.12)"/><rect x="910.3" y="177" width="1" height="59" fill="rgba(0,0,0,0.2)"/><rect x="910.3" y="236" width="1" height="347" fill="rgba(0,0,0,0.12)"/><rect x="1053.9" y="177" width="1" height="59" fill="rgba(0,0,0,0.2)"/><rect x="1053.9" y="236" width="1" height="347" fill="rgba(0,0,0,0.12)"/><rect x="1197.5" y="177" width="1" height="59" fill="rgba(0,0,0,0.2)"/><rect x="1197.5" y="236" width="1" height="347" fill="rgba(0,0,0,0.12)"/><rect x="1341.1" y="177" width="1" height="59" fill="rgba(0,0,0,0.2)"/><rect x="1341.1" y="236" width="1" height="347" fill="rgba(0,0,0,0.12)"/><rect x="1484.7" y="177" width="1" height="59" fill="rgba(0,0,0,0.2)"/><rect x="1484.7" y="236" width="1" height="347" fill="rgba(0,0,0,0.12)"/></svg>
<div class="r" style="left:230px;top:231.5px;width:1272px;height:3.5px;background:linear-gradient(rgba(0,0,0,0),rgba(0,0,0,0.07));"></div>
<div class="r" style="left:230px;top:235px;width:1272px;height:6.5px;background:linear-gradient(rgba(0,0,0,0.12),rgba(0,0,0,0));"></div>
<div class="t" style="left:233.70px;top:236.85px;font-size:14px;line-height:14px;color:#3f3f3f;transform:scaleX(0.8353);">recv-done dur (ns): …cv-done.19</div>
<svg class="r" style="left:408px;top:235.7px;overflow:visible;" width="16" height="16" viewBox="0 0 24 24"><path d="M3.5 18.49l6-6.01 4 4L22 6.92l-1.41-1.41-7.09 7.97-4-4L2 16.99z" fill="#333"/></svg>
<svg class="r" style="left:426.2px;top:236.0px;overflow:visible;" width="15.5" height="15.5" viewBox="0 0 24 24"><path d="M19 6.41L17.59 5 12 10.59 6.41 5 5 6.41 10.59 12 5 17.59 6.41 19 12 13.41 17.59 19 19 17.59 13.41 12z" fill="#333"/></svg>
<svg class="r" style="left:443.5px;top:236.2px;overflow:visible;" width="16" height="16" viewBox="0 0 24 24"><path d="M16 9V4h1c.55 0 1-.45 1-1s-.45-1-1-1H7c-.55 0-1 .45-1 1s.45 1 1 1h1v5c0 1.66-1.34 3-3 3v2h5.97v7l1 1 1-1v-7H19v-2c-1.66 0-3-1.34-3-3z" fill="#333"/></svg>
<div class="t" style="left:233.70px;top:265.95px;font-size:14px;line-height:14px;color:#3f3f3f;transform:scaleX(0.8353);">recv-done dur (ns): …cv-done.28</div>
<svg class="r" style="left:408px;top:264.8px;overflow:visible;" width="16" height="16" viewBox="0 0 24 24"><path d="M3.5 18.49l6-6.01 4 4L22 6.92l-1.41-1.41-7.09 7.97-4-4L2 16.99z" fill="#333"/></svg>
<svg class="r" style="left:426.2px;top:265.1px;overflow:visible;" width="15.5" height="15.5" viewBox="0 0 24 24"><path d="M19 6.41L17.59 5 12 10.59 6.41 5 5 6.41 10.59 12 5 17.59 6.41 19 12 13.41 17.59 19 19 17.59 13.41 12z" fill="#333"/></svg>
<svg class="r" style="left:443.5px;top:265.3px;overflow:visible;" width="16" height="16" viewBox="0 0 24 24"><path d="M16 9V4h1c.55 0 1-.45 1-1s-.45-1-1-1H7c-.55 0-1 .45-1 1s.45 1 1 1h1v5c0 1.66-1.34 3-3 3v2h5.97v7l1 1 1-1v-7H19v-2c-1.66 0-3-1.34-3-3z" fill="#333"/></svg>
<div class="t" style="left:233.70px;top:305.95px;font-size:14px;line-height:14px;color:#3f3f3f;transform:scaleX(0.8353);">recv-done dur (ns): …cv-done.29</div>
<svg class="r" style="left:408px;top:304.8px;overflow:visible;" width="16" height="16" viewBox="0 0 24 24"><path d="M3.5 18.49l6-6.01 4 4L22 6.92l-1.41-1.41-7.09 7.97-4-4L2 16.99z" fill="#333"/></svg>
<svg class="r" style="left:426.2px;top:305.1px;overflow:visible;" width="15.5" height="15.5" viewBox="0 0 24 24"><path d="M19 6.41L17.59 5 12 10.59 6.41 5 5 6.41 10.59 12 5 17.59 6.41 19 12 13.41 17.59 19 19 17.59 13.41 12z" fill="#333"/></svg>
<svg class="r" style="left:443.5px;top:305.3px;overflow:visible;" width="16" height="16" viewBox="0 0 24 24"><path d="M16 9V4h1c.55 0 1-.45 1-1s-.45-1-1-1H7c-.55 0-1 .45-1 1s.45 1 1 1h1v5c0 1.66-1.34 3-3 3v2h5.97v7l1 1 1-1v-7H19v-2c-1.66 0-3-1.34-3-3z" fill="#333"/></svg>
<div class="t" style="left:233.70px;top:345.95px;font-size:14px;line-height:14px;color:#3f3f3f;transform:scaleX(0.8353);">recv-done dur (ns): …cv-done.30</div>
<svg class="r" style="left:408px;top:344.8px;overflow:visible;" width="16" height="16" viewBox="0 0 24 24"><path d="M3.5 18.49l6-6.01 4 4L22 6.92l-1.41-1.41-7.09 7.97-4-4L2 16.99z" fill="#333"/></svg>
<svg class="r" style="left:426.2px;top:345.1px;overflow:visible;" width="15.5" height="15.5" viewBox="0 0 24 24"><path d="M19 6.41L17.59 5 12 10.59 6.41 5 5 6.41 10.59 12 5 17.59 6.41 19 12 13.41 17.59 19 19 17.59 13.41 12z" fill="#333"/></svg>
<svg class="r" style="left:443.5px;top:345.3px;overflow:visible;" width="16" height="16" viewBox="0 0 24 24"><path d="M16 9V4h1c.55 0 1-.45 1-1s-.45-1-1-1H7c-.55 0-1 .45-1 1s.45 1 1 1h1v5c0 1.66-1.34 3-3 3v2h5.97v7l1 1 1-1v-7H19v-2c-1.66 0-3-1.34-3-3z" fill="#333"/></svg>
<div class="t" style="left:233.70px;top:385.95px;font-size:14px;line-height:14px;color:#3f3f3f;transform:scaleX(0.8353);">recv-done dur (ns): …cv-done.31</div>
<svg class="r" style="left:408px;top:384.8px;overflow:visible;" width="16" height="16" viewBox="0 0 24 24"><path d="M3.5 18.49l6-6.01 4 4L22 6.92l-1.41-1.41-7.09 7.97-4-4L2 16.99z" fill="#333"/></svg>
<svg class="r" style="left:426.2px;top:385.1px;overflow:visible;" width="15.5" height="15.5" viewBox="0 0 24 24"><path d="M19 6.41L17.59 5 12 10.59 6.41 5 5 6.41 10.59 12 5 17.59 6.41 19 12 13.41 17.59 19 19 17.59 13.41 12z" fill="#333"/></svg>
<svg class="r" style="left:443.5px;top:385.3px;overflow:visible;" width="16" height="16" viewBox="0 0 24 24"><path d="M16 9V4h1c.55 0 1-.45 1-1s-.45-1-1-1H7c-.55 0-1 .45-1 1s.45 1 1 1h1v5c0 1.66-1.34 3-3 3v2h5.97v7l1 1 1-1v-7H19v-2c-1.66 0-3-1.34-3-3z" fill="#333"/></svg>
<div class="t" style="left:233.70px;top:425.95px;font-size:14px;line-height:14px;color:#3f3f3f;transform:scaleX(0.8353);">recv-done dur (ns): …cv-done.32</div>
<svg class="r" style="left:408px;top:424.8px;overflow:visible;" width="16" height="16" viewBox="0 0 24 24"><path d="M3.5 18.49l6-6.01 4 4L22 6.92l-1.41-1.41-7.09 7.97-4-4L2 16.99z" fill="#333"/></svg>
<svg class="r" style="left:426.2px;top:425.1px;overflow:visible;" width="15.5" height="15.5" viewBox="0 0 24 24"><path d="M19 6.41L17.59 5 12 10.59 6.41 5 5 6.41 10.59 12 5 17.59 6.41 19 12 13.41 17.59 19 19 17.59 13.41 12z" fill="#333"/></svg>
<svg class="r" style="left:443.5px;top:425.3px;overflow:visible;" width="16" height="16" viewBox="0 0 24 24"><path d="M16 9V4h1c.55 0 1-.45 1-1s-.45-1-1-1H7c-.55 0-1 .45-1 1s.45 1 1 1h1v5c0 1.66-1.34 3-3 3v2h5.97v7l1 1 1-1v-7H19v-2c-1.66 0-3-1.34-3-3z" fill="#333"/></svg>
<div class="t" style="left:233.70px;top:465.95px;font-size:14px;line-height:14px;color:#3f3f3f;transform:scaleX(0.8353);">recv-done dur (ns): …cv-done.33</div>
<svg class="r" style="left:408px;top:464.8px;overflow:visible;" width="16" height="16" viewBox="0 0 24 24"><path d="M3.5 18.49l6-6.01 4 4L22 6.92l-1.41-1.41-7.09 7.97-4-4L2 16.99z" fill="#333"/></svg>
<svg class="r" style="left:426.2px;top:465.1px;overflow:visible;" width="15.5" height="15.5" viewBox="0 0 24 24"><path d="M19 6.41L17.59 5 12 10.59 6.41 5 5 6.41 10.59 12 5 17.59 6.41 19 12 13.41 17.59 19 19 17.59 13.41 12z" fill="#333"/></svg>
<svg class="r" style="left:443.5px;top:465.3px;overflow:visible;" width="16" height="16" viewBox="0 0 24 24"><path d="M16 9V4h1c.55 0 1-.45 1-1s-.45-1-1-1H7c-.55 0-1 .45-1 1s.45 1 1 1h1v5c0 1.66-1.34 3-3 3v2h5.97v7l1 1 1-1v-7H19v-2c-1.66 0-3-1.34-3-3z" fill="#333"/></svg>
<div class="t" style="left:233.70px;top:505.95px;font-size:14px;line-height:14px;color:#3f3f3f;transform:scaleX(0.8353);">recv-done dur (ns): …cv-done.34</div>
<svg class="r" style="left:408px;top:504.79999999999995px;overflow:visible;" width="16" height="16" viewBox="0 0 24 24"><path d="M3.5 18.49l6-6.01 4 4L22 6.92l-1.41-1.41-7.09 7.97-4-4L2 16.99z" fill="#333"/></svg>
<svg class="r" style="left:426.2px;top:505.09999999999997px;overflow:visible;" width="15.5" height="15.5" viewBox="0 0 24 24"><path d="M19 6.41L17.59 5 12 10.59 6.41 5 5 6.41 10.59 12 5 17.59 6.41 19 12 13.41 17.59 19 19 17.59 13.41 12z" fill="#333"/></svg>
<svg class="r" style="left:443.5px;top:505.29999999999995px;overflow:visible;" width="16" height="16" viewBox="0 0 24 24"><path d="M16 9V4h1c.55 0 1-.45 1-1s-.45-1-1-1H7c-.55 0-1 .45-1 1s.45 1 1 1h1v5c0 1.66-1.34 3-3 3v2h5.97v7l1 1 1-1v-7H19v-2c-1.66 0-3-1.34-3-3z" fill="#333"/></svg>
<div class="t" style="left:484.00px;top:270.83px;font-size:10px;line-height:10px;color:#333;transform:scaleX(0.8739);">35M</div>
<div class="t" style="left:484.00px;top:310.83px;font-size:10px;line-height:10px;color:#333;transform:scaleX(0.8739);">15M</div>
<div class="t" style="left:484.00px;top:350.83px;font-size:10px;line-height:10px;color:#333;transform:scaleX(0.8739);">15M</div>
<div class="t" style="left:484.00px;top:390.83px;font-size:10px;line-height:10px;color:#333;transform:scaleX(0.8739);">15M</div>
<div class="t" style="left:484.00px;top:430.83px;font-size:10px;line-height:10px;color:#333;transform:scaleX(0.8996);">10M</div>
<div class="t" style="left:484.00px;top:470.83px;font-size:10px;line-height:10px;color:#333;transform:scaleX(0.8278);">5M</div>
<div class="t" style="left:484.00px;top:510.83px;font-size:10px;line-height:10px;color:#333;transform:scaleX(0.8739);">15M</div>
<div class="t" style="left:484.00px;top:230.43px;font-size:10px;line-height:10px;color:#333;transform:scaleX(0.8998);clip-path:inset(4.3px 0 0 0);">0M</div>
<div class="r" style="left:230px;top:545px;width:1257px;height:18px;background:#262e3a;"></div>
<svg class="r" style="left:0px;top:0px;" width="1517" height="942" viewBox="0 0 1517 942"><path d="M235.2 555.6 L238.3 552.3 L241.4 555.6" fill="none" stroke="#e0e0e0" stroke-width="1.5"/></svg>
<div class="t" style="left:245.20px;top:546.95px;font-size:14px;line-height:14px;color:#dcdcdc;transform:scaleX(0.8743);">1. Network</div>
<div class="r" style="left:230px;top:563px;width:8px;height:19.5px;background:#262e3a;"></div>
<div class="r" style="left:238px;top:563px;width:241.5px;height:19px;background:#fff;"></div>
<div class="r" style="left:479.5px;top:563px;width:1px;height:20px;background:#cfcfcf;"></div>
<div class="r" style="left:480.5px;top:563px;width:1006.5px;height:19px;background:#fff;"></div>
<div class="t" style="left:241.50px;top:565.95px;font-size:14px;line-height:14px;color:#3f3f3f;transform:scaleX(0.8457);">Bandwidth RX (Gbps)</div>
<svg class="r" style="left:425.5px;top:563px;overflow:visible;" width="16" height="16" viewBox="0 0 24 24"><path d="M3.5 18.49l6-6.01 4 4L22 6.92l-1.41-1.41-7.09 7.97-4-4L2 16.99z" fill="#333"/></svg>
<svg class="r" style="left:0px;top:0px;" width="1517" height="942" viewBox="0 0 1517 942"><defs><clipPath id="nc"><rect x="480" y="563" width="1007" height="19"/></clipPath></defs><g clip-path="url(#nc)" ><path d="M489 581.5V567.4H490V574.3H491V581.5H492V563.3H493V570.5H494V573.7H495V574.4H496V570.7H497V572.4H498V581.5H499V567.4H500V575.1H501V581.5H503V568.3H504V575.1H505V573.7H506V581.5H507V566.0H508V575.0H509V581.5H510V564.0H511V575.0H512V576.1H513V565.4H514V570.9H515V581.5H516V574.3H517V571.3H518V581.5H519V566.4H520V571.8H521V581.5H523V563.1H524V575.2H525V572.8H526V581.5H527V563.1H528V571.0H529V576.2H530V581.5H531V565.2H532V574.8H533V576.4H534V581.5H535V570.8H536V571.7H537V576.2H538V581.5H539V564.1H540V571.0H541V581.5H542V563.5H543V574.9H544V574.1H545V568.1H546V571.3H547V575.8H548V573.6H549V573.0H550V571.6H551V581.5H552V567.8H553V571.3H554V573.4H555V567.6H556V571.1H557V574.1H558V568.6H559V575.1H560V581.5H561V564.4H562V574.7H563V581.5H565V563.8H566V572.8H567V581.5H569V564.1H570V573.4H571V572.2H572V573.2H573V570.9H574V581.5H575V563.0H576V573.1H577V581.5H579V566.9H580V571.2H581V572.8H582V573.4H583V563.0H585V577.7H586V575.2H587V576.0H588V581.5H600V565.7H601V572.9H602V581.5H603V564.1H604V574.1H605V571.7H606V564.7H607V572.6H608V572.1H609V566.6H610V572.4H611V581.5H612V564.0H613V573.0H614V581.5H615V568.8H616V573.6H617V571.9H618V563.4H619V572.3H620V581.5H621V565.9H622V570.5H623V572.9H624V568.2H625V572.7H626V581.5H627V568.3H628V572.6H629V581.5H631V563.8H632V571.6H633V576.0H634V567.4H635V570.7H636V574.0H637V568.1H638V573.7H639V575.7H640V566.1H641V573.3H642V575.3H643V565.1H644V574.1H645V576.5H646V566.7H647V572.9H648V574.5H649V564.3H650V572.8H651V571.9H652V563.9H653V573.4H654V581.5H655V573.3H656V574.1H657V574.3H658V567.0H659V571.0H660V575.2H661V568.5H662V573.3H663V581.5H664V565.7H665V573.8H666V581.5H667V568.6H668V573.9H669V574.1H670V566.7H671V574.5H672V576.3H673V581.5H674V563.0H675V571.0H676V576.2H677V567.7H678V572.8H679V581.5H680V565.7H681V571.1H682V573.2H683V565.9H684V574.4H685V575.0H686V567.1H687V573.2H688V571.8H689V566.6H690V573.6H691V574.2H692V565.3H693V574.3H694V563.0H696V574.9H697V578.4H699V581.5H711V573.5H712V570.7H713V581.5H714V568.9H715V574.5H716V581.5H718V566.3H719V571.6H720V575.3H721V566.3H722V572.6H723V574.5H724V581.5H725V569.3H726V575.3H727V571.6H728V581.5H729V566.5H730V575.0H731V571.8H732V563.6H733V575.3H734V581.5H736V573.8H737V571.7H738V581.5H739V563.5H740V574.9H741V571.7H742V567.6H743V573.3H744V572.9H745V565.9H746V571.0H747V581.5H748V565.1H749V571.5H750V573.0H751V581.5H752V568.1H753V573.5H754V575.0H755V563.5H756V574.4H757V572.0H758V568.8H759V572.2H760V573.9H761V566.8H762V573.3H763V575.3H764V564.2H765V572.0H766V573.9H767V581.5H768V564.9H769V570.6H770V576.3H771V566.7H772V575.0H773V572.1H774V566.2H775V572.9H776V581.5H777V572.7H778V574.8H779V576.2H780V564.3H781V570.9H782V575.8H783V566.5H784V575.4H785V581.5H787V567.2H788V572.0H789V571.5H790V569.1H791V572.4H792V575.0H793V564.5H794V574.4H795V576.1H796V567.4H797V572.1H798V575.0H799V563.1H800V570.8H801V576.4H802V581.5H803V564.0H804V571.2H805V563.0H807V575.8H808V575.0H809V575.7H810V581.5H822V569.4H823V571.1H824V574.3H825V581.5H826V564.6H827V575.1H828V581.5H829V563.9H830V571.0H831V574.7H832V572.9H833V571.3H834V576.4H835V581.5H836V569.4H837V571.1H838V576.0H839V581.5H840V567.3H841V574.1H842V572.6H843V571.4H844V573.7H845V572.0H846V566.8H847V571.5H848V572.5H849V564.3H850V573.0H851V581.5H852V564.9H853V572.5H854V581.5H855V572.9H856V572.2H857V573.1H858V568.0H859V575.4H860V572.3H861V581.5H862V572.4H863V573.0H864V573.7H865V569.4H866V575.0H867V575.6H868V563.2H869V571.9H870V581.5H871V568.8H872V573.7H873V575.2H874V581.5H875V565.0H876V572.2H877V574.2H878V581.5H879V574.0H880V571.3H881V576.5H882V568.9H883V573.2H884V575.3H885V581.5H886V567.4H887V572.9H888V573.8H889V568.6H890V573.0H891V573.7H893V573.9H894V576.2H895V567.1H896V574.6H897V572.3H898V565.4H899V570.8H900V572.6H901V567.4H902V572.2H903V572.7H904V565.9H905V573.7H906V574.1H907V581.5H908V563.3H909V570.5H910V581.5H911V566.3H912V570.9H913V573.3H914V564.0H915V573.6H916V563.0H918V576.3H919V577.0H920V576.1H921V581.5H933V563.1H934V573.3H935V572.1H936V565.5H937V571.0H938V573.6H939V563.7H940V574.6H941V574.9H942V565.4H943V572.9H944V575.3H945V581.5H946V566.1H947V575.1H948V575.6H949V564.2H950V573.8H951V581.5H953V572.8H954V573.8H955V572.0H956V566.6H957V573.5H958V573.6H959V563.5H960V572.4H961V581.5H962V566.2H963V574.3H964V572.3H965V563.3H966V571.5H967V572.6H968V581.5H969V570.9H970V574.8H971V581.5H973V566.8H974V575.1H975V573.1H976V568.7H977V570.7H978V581.5H980V573.9H981V570.8H982V572.9H983V565.0H984V573.0H985V574.4H986V573.4H987V573.0H989V574.4H990V574.9H991V581.5H993V565.4H994V571.0H995V574.6H996V573.2H997V571.7H998V575.1H999V565.4H1000V574.9H1001V571.5H1002V581.5H1003V566.9H1004V572.0H1005V572.4H1006V567.3H1007V572.4H1008V576.2H1009V566.5H1010V574.3H1011V573.0H1012V564.9H1013V574.0H1014V581.5H1015V563.8H1016V575.4H1017V576.0H1018V571.9H1019V570.6H1020V575.3H1021V565.9H1022V574.2H1023V572.5H1024V563.9H1025V573.7H1026V572.5H1027V563.0H1029V576.7H1030V575.0H1031V578.5H1032V581.5H1045V567.1H1046V571.3H1047V573.2H1048V581.5H1049V566.2H1050V570.8H1051V581.5H1052V563.9H1053V573.2H1054V572.6H1055V565.4H1056V575.3H1057V581.5H1059V569.1H1060V574.5H1061V581.5H1063V565.0H1064V571.4H1065V573.6H1066V567.3H1067V575.1H1068V575.9H1069V568.1H1070V575.4H1071V571.7H1072V564.1H1073V571.4H1074V573.0H1075V563.2H1076V574.9H1077V581.5H1078V565.2H1079V572.0H1080V581.5H1081V566.5H1082V573.5H1083V572.8H1084V573.4H1085V571.0H1086V575.5H1087V565.8H1088V575.1H1089V574.9H1090V566.8H1091V574.7H1092V576.0H1093V565.5H1094V573.6H1095V574.5H1096V566.2H1097V573.5H1098V576.2H1099V567.7H1100V573.6H1101V581.5H1102V563.0H1103V574.9H1104V575.9H1105V567.1H1106V571.1H1107V574.5H1108V563.5H1109V574.0H1110V573.5H1111V570.8H1112V572.4H1113V575.9H1114V565.8H1115V575.2H1117V567.6H1118V573.2H1119V575.4H1120V566.6H1121V574.9H1122V581.5H1124V566.5H1125V572.9H1126V575.2H1127V581.5H1128V572.3H1129V571.8H1130V581.5H1131V564.3H1132V573.1H1133V573.0H1134V563.7H1135V573.4H1136V581.5H1137V566.8H1138V574.4H1139V563.0H1141V577.5H1142V577.0H1143V576.8H1144V581.5H1156V563.1H1157V572.1H1158V576.3H1159V573.5H1160V572.9H1161V576.5H1162V567.7H1163V571.1H1164V575.6H1165V567.1H1166V572.8H1167V581.5H1168V566.7H1169V572.3H1170V573.0H1171V581.5H1172V563.8H1173V570.9H1174V573.6H1175V567.0H1176V574.8H1177V581.5H1178V565.5H1179V570.6H1180V581.5H1181V567.7H1182V575.1H1183V576.0H1184V568.7H1185V574.7H1186V572.1H1187V566.1H1188V572.7H1189V576.1H1190V567.6H1191V570.9H1192V572.0H1193V567.8H1194V574.6H1195V572.4H1196V567.9H1197V570.6H1198V575.4H1199V569.2H1200V574.9H1201V581.5H1202V573.7H1203V572.7H1204V581.5H1206V573.2H1207V572.4H1208V581.5H1209V563.6H1210V574.8H1211V574.5H1212V564.9H1213V574.6H1214V581.5H1216V564.1H1217V571.2H1218V572.2H1219V567.5H1220V573.7H1221V575.0H1222V566.9H1223V571.4H1224V575.9H1225V567.4H1226V571.4H1227V571.6H1228V567.4H1229V571.0H1230V574.1H1231V581.5H1232V573.3H1233V572.7H1234V576.0H1235V581.5H1236V564.1H1237V570.9H1238V581.5H1239V567.0H1240V574.1H1241V572.2H1242V569.3H1243V574.7H1244V575.7H1245V566.8H1246V572.1H1247V581.5H1248V573.2H1249V575.4H1250V563.0H1252V576.5H1253V577.7H1254V577.8H1255V581.5H1267V574.2H1268V571.2H1269V581.5H1270V565.7H1271V572.8H1272V573.6H1273V563.8H1274V574.1H1275V576.1H1276V564.7H1277V571.1H1278V576.1H1279V571.2H1280V572.8H1281V576.3H1282V569.2H1283V572.5H1284V574.4H1285V566.3H1286V573.3H1287V581.5H1288V567.2H1289V572.1H1290V573.7H1291V564.0H1292V570.9H1293V572.9H1294V581.5H1295V567.9H1296V574.7H1297V573.2H1298V568.2H1299V571.2H1300V574.6H1301V565.0H1302V570.9H1303V573.0H1304V569.1H1305V571.9H1306V574.1H1307V567.7H1308V573.1H1309V571.8H1310V573.1H1311V571.1H1312V571.8H1313V564.0H1314V574.7H1315V576.3H1316V567.6H1317V572.1H1318V581.5H1319V563.4H1320V572.1H1321V574.6H1322V564.9H1323V574.6H1324V575.3H1325V581.5H1326V572.2H1327V572.8H1328V574.8H1329V581.5H1330V564.5H1331V573.1H1332V575.9H1333V572.9H1334V572.6H1335V575.1H1336V581.5H1337V566.0H1338V571.5H1339V571.8H1340V566.8H1341V573.3H1342V574.4H1343V566.1H1344V570.8H1345V575.7H1346V571.9H1347V574.4H1348V576.5H1349V565.6H1350V570.6H1351V575.4H1352V563.1H1353V575.0H1354V576.4H1355V581.5H1356V568.9H1357V573.2H1358V581.5H1359V568.9H1360V571.3H1361V563.0H1363V576.0H1364V574.8H1365V577.5H1366V581.5H1378V565.5H1379V571.2H1380V575.3H1381V581.5H1382V571.7H1383V574.5H1384V581.5H1385V565.5H1386V573.8H1387V573.6H1388V571.9H1389V574.9H1390V581.5H1391V573.5H1392V575.3H1393V574.0H1394V563.2H1395V574.7H1396V573.4H1397V571.5H1398V571.1H1399V575.9H1400V565.8H1401V574.8H1402V574.6H1403V565.1H1404V571.2H1405V576.0H1406V565.8H1407V573.3H1408V576.4H1409V581.5H1410V567.4H1411V573.4H1412V572.2H1413V563.9H1414V573.9H1415V572.3H1416V563.3H1417V572.1H1418V581.5H1419V565.8H1420V571.4H1421V575.5H1422V565.6H1423V573.9H1424V581.5H1425V566.9H1426V570.8H1427V581.5H1428V566.5H1429V571.3H1430V573.6H1431V563.5H1432V573.1H1433V573.6H1434V567.9H1435V570.8H1436V581.5H1438V566.6H1439V575.3H1440V581.5H1442V563.1H1443V572.4H1444V573.3H1445V571.5H1446V574.8H1447V572.5H1448V564.0H1449V573.4H1450V576.4H1451V581.5H1452V568.2H1453V572.0H1454V574.3H1455V564.1H1456V572.4H1457V572.2H1458V570.9H1459V572.8H1460V572.9H1461V563.3H1462V570.8H1463V571.9H1464V573.9H1465V574.7H1466V574.1H1467V567.5H1468V573.7H1469V581.5H1470V566.3H1471V570.9H1472V563.0H1474V575.5H1475V581.5Z" fill="#6fc8c8"/><path d="M489 567.4H490M490 574.3H491M492 563.3H493M493 570.5H494M494 573.7H495M495 574.4H496M496 570.7H497M497 572.4H498M499 567.4H500M500 575.1H501M503 568.3H504M504 575.1H505M505 573.7H506M507 566.0H508M508 575.0H509M510 564.0H511M511 575.0H512M512 576.1H513M513 565.4H514M514 570.9H515M516 574.3H517M517 571.3H518M519 566.4H520M520 571.8H521M523 563.1H524M524 575.2H525M525 572.8H526M527 563.1H528M528 571.0H529M529 576.2H530M531 565.2H532M532 574.8H533M533 576.4H534M535 570.8H536M536 571.7H537M537 576.2H538M539 564.1H540M540 571.0H541M542 563.5H543M543 574.9H544M544 574.1H545M545 568.1H546M546 571.3H547M547 575.8H548M548 573.6H549M549 573.0H550M550 571.6H551M552 567.8H553M553 571.3H554M554 573.4H555M555 567.6H556M556 571.1H557M557 574.1H558M558 568.6H559M559 575.1H560M561 564.4H562M562 574.7H563M565 563.8H566M566 572.8H567M569 564.1H570M570 573.4H571M571 572.2H572M572 573.2H573M573 570.9H574M575 563.0H576M576 573.1H577M579 566.9H580M580 571.2H581M581 572.8H582M582 573.4H583M583 563.0H585M585 577.7H586M586 575.2H587M587 576.0H588M600 565.7H601M601 572.9H602M603 564.1H604M604 574.1H605M605 571.7H606M606 564.7H607M607 572.6H608M608 572.1H609M609 566.6H610M610 572.4H611M612 564.0H613M613 573.0H614M615 568.8H616M616 573.6H617M617 571.9H618M618 563.4H619M619 572.3H620M621 565.9H622M622 570.5H623M623 572.9H624M624 568.2H625M625 572.7H626M627 568.3H628M628 572.6H629M631 563.8H632M632 571.6H633M633 576.0H634M634 567.4H635M635 570.7H636M636 574.0H637M637 568.1H638M638 573.7H639M639 575.7H640M640 566.1H641M641 573.3H642M642 575.3H643M643 565.1H644M644 574.1H645M645 576.5H646M646 566.7H647M647 572.9H648M648 574.5H649M649 564.3H650M650 572.8H651M651 571.9H652M652 563.9H653M653 573.4H654M655 573.3H656M656 574.1H657M657 574.3H658M658 567.0H659M659 571.0H660M660 575.2H661M661 568.5H662M662 573.3H663M664 565.7H665M665 573.8H666M667 568.6H668M668 573.9H669M669 574.1H670M670 566.7H671M671 574.5H672M672 576.3H673M674 563.0H675M675 571.0H676M676 576.2H677M677 567.7H678M678 572.8H679M680 565.7H681M681 571.1H682M682 573.2H683M683 565.9H684M684 574.4H685M685 575.0H686M686 567.1H687M687 573.2H688M688 571.8H689M689 566.6H690M690 573.6H691M691 574.2H692M692 565.3H693M693 574.3H694M694 563.0H696M696 574.9H697M697 578.4H699M711 573.5H712M712 570.7H713M714 568.9H715M715 574.5H716M718 566.3H719M719 571.6H720M720 575.3H721M721 566.3H722M722 572.6H723M723 574.5H724M725 569.3H726M726 575.3H727M727 571.6H728M729 566.5H730M730 575.0H731M731 571.8H732M732 563.6H733M733 575.3H734M736 573.8H737M737 571.7H738M739 563.5H740M740 574.9H741M741 571.7H742M742 567.6H743M743 573.3H744M744 572.9H745M745 565.9H746M746 571.0H747M748 565.1H749M749 571.5H750M750 573.0H751M752 568.1H753M753 573.5H754M754 575.0H755M755 563.5H756M756 574.4H757M757 572.0H758M758 568.8H759M759 572.2H760M760 573.9H761M761 566.8H762M762 573.3H763M763 575.3H764M764 564.2H765M765 572.0H766M766 573.9H767M768 564.9H769M769 570.6H770M770 576.3H771M771 566.7H772M772 575.0H773M773 572.1H774M774 566.2H775M775 572.9H776M777 572.7H778M778 574.8H779M779 576.2H780M780 564.3H781M781 570.9H782M782 575.8H783M783 566.5H784M784 575.4H785M787 567.2H788M788 572.0H789M789 571.5H790M790 569.1H791M791 572.4H792M792 575.0H793M793 564.5H794M794 574.4H795M795 576.1H796M796 567.4H797M797 572.1H798M798 575.0H799M799 563.1H800M800 570.8H801M801 576.4H802M803 564.0H804M804 571.2H805M805 563.0H807M807 575.8H808M808 575.0H809M809 575.7H810M822 569.4H823M823 571.1H824M824 574.3H825M826 564.6H827M827 575.1H828M829 563.9H830M830 571.0H831M831 574.7H832M832 572.9H833M833 571.3H834M834 576.4H835M836 569.4H837M837 571.1H838M838 576.0H839M840 567.3H841M841 574.1H842M842 572.6H843M843 571.4H844M844 573.7H845M845 572.0H846M846 566.8H847M847 571.5H848M848 572.5H849M849 564.3H850M850 573.0H851M852 564.9H853M853 572.5H854M855 572.9H856M856 572.2H857M857 573.1H858M858 568.0H859M859 575.4H860M860 572.3H861M862 572.4H863M863 573.0H864M864 573.7H865M865 569.4H866M866 575.0H867M867 575.6H868M868 563.2H869M869 571.9H870M871 568.8H872M872 573.7H873M873 575.2H874M875 565.0H876M876 572.2H877M877 574.2H878M879 574.0H880M880 571.3H881M881 576.5H882M882 568.9H883M883 573.2H884M884 575.3H885M886 567.4H887M887 572.9H888M888 573.8H889M889 568.6H890M890 573.0H891M891 573.7H893M893 573.9H894M894 576.2H895M895 567.1H896M896 574.6H897M897 572.3H898M898 565.4H899M899 570.8H900M900 572.6H901M901 567.4H902M902 572.2H903M903 572.7H904M904 565.9H905M905 573.7H906M906 574.1H907M908 563.3H909M909 570.5H910M911 566.3H912M912 570.9H913M913 573.3H914M914 564.0H915M915 573.6H916M916 563.0H918M918 576.3H919M919 577.0H920M920 576.1H921M933 563.1H934M934 573.3H935M935 572.1H936M936 565.5H937M937 571.0H938M938 573.6H939M939 563.7H940M940 574.6H941M941 574.9H942M942 565.4H943M943 572.9H944M944 575.3H945M946 566.1H947M947 575.1H948M948 575.6H949M949 564.2H950M950 573.8H951M953 572.8H954M954 573.8H955M955 572.0H956M956 566.6H957M957 573.5H958M958 573.6H959M959 563.5H960M960 572.4H961M962 566.2H963M963 574.3H964M964 572.3H965M965 563.3H966M966 571.5H967M967 572.6H968M969 570.9H970M970 574.8H971M973 566.8H974M974 575.1H975M975 573.1H976M976 568.7H977M977 570.7H978M980 573.9H981M981 570.8H982M982 572.9H983M983 565.0H984M984 573.0H985M985 574.4H986M986 573.4H987M987 573.0H989M989 574.4H990M990 574.9H991M993 565.4H994M994 571.0H995M995 574.6H996M996 573.2H997M997 571.7H998M998 575.1H999M999 565.4H1000M1000 574.9H1001M1001 571.5H1002M1003 566.9H1004M1004 572.0H1005M1005 572.4H1006M1006 567.3H1007M1007 572.4H1008M1008 576.2H1009M1009 566.5H1010M1010 574.3H1011M1011 573.0H1012M1012 564.9H1013M1013 574.0H1014M1015 563.8H1016M1016 575.4H1017M1017 576.0H1018M1018 571.9H1019M1019 570.6H1020M1020 575.3H1021M1021 565.9H1022M1022 574.2H1023M1023 572.5H1024M1024 563.9H1025M1025 573.7H1026M1026 572.5H1027M1027 563.0H1029M1029 576.7H1030M1030 575.0H1031M1031 578.5H1032M1045 567.1H1046M1046 571.3H1047M1047 573.2H1048M1049 566.2H1050M1050 570.8H1051M1052 563.9H1053M1053 573.2H1054M1054 572.6H1055M1055 565.4H1056M1056 575.3H1057M1059 569.1H1060M1060 574.5H1061M1063 565.0H1064M1064 571.4H1065M1065 573.6H1066M1066 567.3H1067M1067 575.1H1068M1068 575.9H1069M1069 568.1H1070M1070 575.4H1071M1071 571.7H1072M1072 564.1H1073M1073 571.4H1074M1074 573.0H1075M1075 563.2H1076M1076 574.9H1077M1078 565.2H1079M1079 572.0H1080M1081 566.5H1082M1082 573.5H1083M1083 572.8H1084M1084 573.4H1085M1085 571.0H1086M1086 575.5H1087M1087 565.8H1088M1088 575.1H1089M1089 574.9H1090M1090 566.8H1091M1091 574.7H1092M1092 576.0H1093M1093 565.5H1094M1094 573.6H1095M1095 574.5H1096M1096 566.2H1097M1097 573.5H1098M1098 576.2H1099M1099 567.7H1100M1100 573.6H1101M1102 563.0H1103M1103 574.9H1104M1104 575.9H1105M1105 567.1H1106M1106 571.1H1107M1107 574.5H1108M1108 563.5H1109M1109 574.0H1110M1110 573.5H1111M1111 570.8H1112M1112 572.4H1113M1113 575.9H1114M1114 565.8H1115M1115 575.2H1117M1117 567.6H1118M1118 573.2H1119M1119 575.4H1120M1120 566.6H1121M1121 574.9H1122M1124 566.5H1125M1125 572.9H1126M1126 575.2H1127M1128 572.3H1129M1129 571.8H1130M1131 564.3H1132M1132 573.1H1133M1133 573.0H1134M1134 563.7H1135M1135 573.4H1136M1137 566.8H1138M1138 574.4H1139M1139 563.0H1141M1141 577.5H1142M1142 577.0H1143M1143 576.8H1144M1156 563.1H1157M1157 572.1H1158M1158 576.3H1159M1159 573.5H1160M1160 572.9H1161M1161 576.5H1162M1162 567.7H1163M1163 571.1H1164M1164 575.6H1165M1165 567.1H1166M1166 572.8H1167M1168 566.7H1169M1169 572.3H1170M1170 573.0H1171M1172 563.8H1173M1173 570.9H1174M1174 573.6H1175M1175 567.0H1176M1176 574.8H1177M1178 565.5H1179M1179 570.6H1180M1181 567.7H1182M1182 575.1H1183M1183 576.0H1184M1184 568.7H1185M1185 574.7H1186M1186 572.1H1187M1187 566.1H1188M1188 572.7H1189M1189 576.1H1190M1190 567.6H1191M1191 570.9H1192M1192 572.0H1193M1193 567.8H1194M1194 574.6H1195M1195 572.4H1196M1196 567.9H1197M1197 570.6H1198M1198 575.4H1199M1199 569.2H1200M1200 574.9H1201M1202 573.7H1203M1203 572.7H1204M1206 573.2H1207M1207 572.4H1208M1209 563.6H1210M1210 574.8H1211M1211 574.5H1212M1212 564.9H1213M1213 574.6H1214M1216 564.1H1217M1217 571.2H1218M1218 572.2H1219M1219 567.5H1220M1220 573.7H1221M1221 575.0H1222M1222 566.9H1223M1223 571.4H1224M1224 575.9H1225M1225 567.4H1226M1226 571.4H1227M1227 571.6H1228M1228 567.4H1229M1229 571.0H1230M1230 574.1H1231M1232 573.3H1233M1233 572.7H1234M1234 576.0H1235M1236 564.1H1237M1237 570.9H1238M1239 567.0H1240M1240 574.1H1241M1241 572.2H1242M1242 569.3H1243M1243 574.7H1244M1244 575.7H1245M1245 566.8H1246M1246 572.1H1247M1248 573.2H1249M1249 575.4H1250M1250 563.0H1252M1252 576.5H1253M1253 577.7H1254M1254 577.8H1255M1267 574.2H1268M1268 571.2H1269M1270 565.7H1271M1271 572.8H1272M1272 573.6H1273M1273 563.8H1274M1274 574.1H1275M1275 576.1H1276M1276 564.7H1277M1277 571.1H1278M1278 576.1H1279M1279 571.2H1280M1280 572.8H1281M1281 576.3H1282M1282 569.2H1283M1283 572.5H1284M1284 574.4H1285M1285 566.3H1286M1286 573.3H1287M1288 567.2H1289M1289 572.1H1290M1290 573.7H1291M1291 564.0H1292M1292 570.9H1293M1293 572.9H1294M1295 567.9H1296M1296 574.7H1297M1297 573.2H1298M1298 568.2H1299M1299 571.2H1300M1300 574.6H1301M1301 565.0H1302M1302 570.9H1303M1303 573.0H1304M1304 569.1H1305M1305 571.9H1306M1306 574.1H1307M1307 567.7H1308M1308 573.1H1309M1309 571.8H1310M1310 573.1H1311M1311 571.1H1312M1312 571.8H1313M1313 564.0H1314M1314 574.7H1315M1315 576.3H1316M1316 567.6H1317M1317 572.1H1318M1319 563.4H1320M1320 572.1H1321M1321 574.6H1322M1322 564.9H1323M1323 574.6H1324M1324 575.3H1325M1326 572.2H1327M1327 572.8H1328M1328 574.8H1329M1330 564.5H1331M1331 573.1H1332M1332 575.9H1333M1333 572.9H1334M1334 572.6H1335M1335 575.1H1336M1337 566.0H1338M1338 571.5H1339M1339 571.8H1340M1340 566.8H1341M1341 573.3H1342M1342 574.4H1343M1343 566.1H1344M1344 570.8H1345M1345 575.7H1346M1346 571.9H1347M1347 574.4H1348M1348 576.5H1349M1349 565.6H1350M1350 570.6H1351M1351 575.4H1352M1352 563.1H1353M1353 575.0H1354M1354 576.4H1355M1356 568.9H1357M1357 573.2H1358M1359 568.9H1360M1360 571.3H1361M1361 563.0H1363M1363 576.0H1364M1364 574.8H1365M1365 577.5H1366M1378 565.5H1379M1379 571.2H1380M1380 575.3H1381M1382 571.7H1383M1383 574.5H1384M1385 565.5H1386M1386 573.8H1387M1387 573.6H1388M1388 571.9H1389M1389 574.9H1390M1391 573.5H1392M1392 575.3H1393M1393 574.0H1394M1394 563.2H1395M1395 574.7H1396M1396 573.4H1397M1397 571.5H1398M1398 571.1H1399M1399 575.9H1400M1400 565.8H1401M1401 574.8H1402M1402 574.6H1403M1403 565.1H1404M1404 571.2H1405M1405 576.0H1406M1406 565.8H1407M1407 573.3H1408M1408 576.4H1409M1410 567.4H1411M1411 573.4H1412M1412 572.2H1413M1413 563.9H1414M1414 573.9H1415M1415 572.3H1416M1416 563.3H1417M1417 572.1H1418M1419 565.8H1420M1420 571.4H1421M1421 575.5H1422M1422 565.6H1423M1423 573.9H1424M1425 566.9H1426M1426 570.8H1427M1428 566.5H1429M1429 571.3H1430M1430 573.6H1431M1431 563.5H1432M1432 573.1H1433M1433 573.6H1434M1434 567.9H1435M1435 570.8H1436M1438 566.6H1439M1439 575.3H1440M1442 563.1H1443M1443 572.4H1444M1444 573.3H1445M1445 571.5H1446M1446 574.8H1447M1447 572.5H1448M1448 564.0H1449M1449 573.4H1450M1450 576.4H1451M1452 568.2H1453M1453 572.0H1454M1454 574.3H1455M1455 564.1H1456M1456 572.4H1457M1457 572.2H1458M1458 570.9H1459M1459 572.8H1460M1460 572.9H1461M1461 563.3H1462M1462 570.8H1463M1463 571.9H1464M1464 573.9H1465M1465 574.7H1466M1466 574.1H1467M1467 567.5H1468M1468 573.7H1469M1470 566.3H1471M1471 570.9H1472M1472 563.0H1474M1474 575.5H1475" fill="none" stroke="#3cb6b6" stroke-width="1" stroke-opacity="0.9"/></g><rect x="623.1" y="563" width="1" height="19" fill="rgba(0,0,0,0.10)"/><rect x="766.7" y="563" width="1" height="19" fill="rgba(0,0,0,0.10)"/><rect x="910.3" y="563" width="1" height="19" fill="rgba(0,0,0,0.10)"/><rect x="1053.9" y="563" width="1" height="19" fill="rgba(0,0,0,0.10)"/><rect x="1197.5" y="563" width="1" height="19" fill="rgba(0,0,0,0.10)"/><rect x="1341.1" y="563" width="1" height="19" fill="rgba(0,0,0,0.10)"/><rect x="1484.7" y="563" width="1" height="19" fill="rgba(0,0,0,0.10)"/></svg>
<div class="r" style="left:230px;top:582px;width:1257px;height:1px;background:#d6d6d6;"></div>
<div class="r" style="left:230px;top:583px;width:1272px;height:29px;background:#ebeef0;"></div>
<div class="r" style="left:230px;top:611px;width:1272px;height:1px;background:#d4d7da;"></div>
<svg class="r" style="left:0px;top:0px;" width="1517" height="942" viewBox="0 0 1517 942"><circle cx="243.3" cy="594.6" r="1.35" fill="#333"/><circle cx="243.3" cy="597.8" r="1.35" fill="#333"/><circle cx="243.3" cy="601" r="1.35" fill="#333"/></svg>
<div class="r" style="left:259.5px;top:585.7px;width:114px;height:26px;background:#e8ebed;border:1px solid #d8dbde;border-bottom:none;border-radius:3px 3px 0 0;box-sizing:border-box;"></div>
<div class="r" style="left:374px;top:585.7px;width:141.3px;height:26.3px;background:#fff;border:1px solid #d8dbde;border-bottom:none;border-radius:3px 3px 0 0;box-sizing:border-box;"></div>
<div class="t" style="left:269.50px;top:592.25px;font-size:14px;line-height:14px;color:#333;transform:scaleX(0.8690);">Current Selection</div>
<div class="t" style="left:383.20px;top:592.25px;font-size:14px;line-height:14px;color:#333;transform:scaleX(0.8493);">Query Page Results</div>
<svg class="r" style="left:0px;top:0px;" width="1517" height="942" viewBox="0 0 1517 942"><path d="M499.3 595.6 L507.5 603.8 M507.5 595.6 L499.3 603.8" stroke="#333" stroke-width="1.2"/></svg>
<svg class="r" style="left:1457px;top:589px;overflow:visible;" width="16" height="16" viewBox="0 0 24 24"><path d="M8 11h3v10h2V11h3l-4-4-4 4zM4 3v2h16V3H4z" fill="#333"/></svg>
<svg class="r" style="left:1480px;top:588px;overflow:visible;" width="18" height="18" viewBox="0 0 24 24"><path d="M16.59 8.59L12 13.17 7.41 8.59 6 10l6 6 6-6z" fill="#333"/></svg>
<div class="r" style="left:230px;top:612px;width:1257px;height:307px;background:#fff;"></div>
<div class="t" style="left:238.40px;top:622.06px;font-size:18px;line-height:18px;color:#333;transform:scaleX(0.8726);">Query Results (9364 rows) - 418.6ms</div>
<div class="t" style="left:506.00px;top:624.95px;font-size:14px;line-height:14px;color:#333;transform:scaleX(0.8526);">SELECT s.id, s.name, s.ts, s.dur, EXTRACT_ARG(s.arg_set_id, 'debug.run_id') AS run_id, ppt.name AS device, s.track_id, s.slic…</div>
<div class="t" style="left:1217.60px;top:624.95px;font-size:14px;line-height:14px;color:#333;transform:scaleX(0.8739);">Add debug track</div>
<svg class="r" style="left:1327.5px;top:624.5px;overflow:visible;" width="13" height="13" viewBox="0 0 24 24"><path d="M16 1H4c-1.1 0-2 .9-2 2v14h2V3h12V1zm3 4H8c-1.1 0-2 .9-2 2v14c0 1.1.9 2 2 2h11c1.1 0 2-.9 2-2V7c0-1.1-.9-2-2-2zm0 16H8V7h11v14z" fill="#333"/></svg>
<div class="t" style="left:1347.40px;top:624.95px;font-size:14px;line-height:14px;color:#333;transform:scaleX(0.8354);">Copy Query</div>
<svg class="r" style="left:1430.5px;top:624.5px;overflow:visible;" width="13" height="13" viewBox="0 0 24 24"><path d="M18 15v3H6v-3H4v3c0 1.1.9 2 2 2h12c1.1 0 2-.9 2-2v-3h-2zm-1-4l-1.41-1.41L13 12.17V4h-2v8.17L8.41 9.59 7 11l5 5 5-5z" fill="#333"/></svg>
<div class="t" style="left:1450.50px;top:624.95px;font-size:14px;line-height:14px;color:#333;transform:scaleX(0.8675);">Export</div>
<svg class="r" style="left:0px;top:0px;" width="1517" height="942" viewBox="0 0 1517 942"><rect x="230" y="648.2" width="1257" height="1" fill="#dcdcdc"/><rect x="230" y="672.8" width="1257" height="1.2" fill="#d4d4d4"/><rect x="230" y="697.8" width="1257" height="1" fill="#e2e2e2"/><rect x="230" y="722.8" width="1257" height="1" fill="#e2e2e2"/><rect x="230" y="747.8" width="1257" height="1" fill="#e2e2e2"/><rect x="230" y="772.8" width="1257" height="1" fill="#e2e2e2"/><rect x="230" y="797.8" width="1257" height="1" fill="#e2e2e2"/><rect x="230" y="822.8" width="1257" height="1" fill="#e2e2e2"/><rect x="230" y="847.8" width="1257" height="1" fill="#e2e2e2"/><rect x="230" y="872.8" width="1257" height="1" fill="#e2e2e2"/><rect x="230" y="897.8" width="1257" height="1" fill="#e2e2e2"/><rect x="331.9" y="648.2" width="1" height="271" fill="#e0e0e0"/><rect x="415.9" y="648.2" width="1" height="271" fill="#e0e0e0"/><rect x="521.1" y="648.2" width="1" height="271" fill="#e0e0e0"/><rect x="617.2" y="648.2" width="1" height="271" fill="#e0e0e0"/><rect x="706.0" y="648.2" width="1" height="271" fill="#e0e0e0"/><rect x="811.0" y="648.2" width="1" height="271" fill="#e0e0e0"/><rect x="981.0" y="648.2" width="1" height="271" fill="#e0e0e0"/><rect x="1146.8" y="648.2" width="1" height="271" fill="#e0e0e0"/><rect x="1276.0" y="648.2" width="1" height="271" fill="#e0e0e0"/><rect x="1371.1" y="648.2" width="1" height="271" fill="#e0e0e0"/><rect x="1467.8" y="648.2" width="1" height="271" fill="#e0e0e0"/></svg>
<div class="t" style="left:237.80px;top:653.95px;font-size:14px;line-height:14px;color:#333;font-weight:bold;transform:scaleX(0.8235);">slice_id</div>
<div class="t" style="left:340.20px;top:653.95px;font-size:14px;line-height:14px;color:#333;font-weight:bold;transform:scaleX(0.8359);">id</div>
<div class="t" style="left:424.20px;top:653.95px;font-size:14px;line-height:14px;color:#333;font-weight:bold;transform:scaleX(0.8476);">name</div>
<div class="t" style="left:529.40px;top:653.95px;font-size:14px;line-height:14px;color:#333;font-weight:bold;transform:scaleX(0.9238);">ts</div>
<div class="t" style="left:625.50px;top:653.95px;font-size:14px;line-height:14px;color:#333;font-weight:bold;transform:scaleX(0.8425);">dur</div>
<div class="t" style="left:714.30px;top:653.95px;font-size:14px;line-height:14px;color:#333;font-weight:bold;transform:scaleX(0.8231);">track_id</div>
<div class="t" style="left:819.30px;top:653.95px;font-size:14px;line-height:14px;color:#333;font-weight:bold;transform:scaleX(0.8219);">network_latency_us</div>
<div class="t" style="left:989.30px;top:653.95px;font-size:14px;line-height:14px;color:#333;font-weight:bold;transform:scaleX(0.8170);">action_duration_ns</div>
<div class="t" style="left:1155.10px;top:653.95px;font-size:14px;line-height:14px;color:#333;font-weight:bold;transform:scaleX(0.8360);">buffer_sizes</div>
<div class="t" style="left:1284.30px;top:653.95px;font-size:14px;line-height:14px;color:#333;font-weight:bold;transform:scaleX(0.8135);">run_id</div>
<div class="t" style="left:1379.40px;top:653.95px;font-size:14px;line-height:14px;color:#333;font-weight:bold;transform:scaleX(0.8558);">device</div>
<svg class="r" style="left:648.5px;top:656px;" width="12" height="12" viewBox="0 0 12 12"><path d="M6 1v9.4M1.9 6.4 6 10.5l4.1-4.1" fill="none" stroke="#333" stroke-width="1.5"/></svg>
<div class="t" style="left:284.10px;top:678.75px;font-size:14px;line-height:14px;color:#333;transform:scaleX(0.8733);">663606</div>
<div class="t" style="left:352.50px;top:678.75px;font-size:14px;line-height:14px;color:#3d5a98;transform:scaleX(0.8626);">663606</div>
<div class="r" style="left:352.5px;top:692.6px;width:40.3px;height:1px;background:#3d5a98;"></div>
<svg class="r" style="left:0px;top:0px;" width="1517" height="942" viewBox="0 0 1517 942"><path d="M398 689.8 L405.6 682.2 M400.2 682.0 H405.8 V687.6" fill="none" stroke="#3d5a98" stroke-width="1.4"/></svg>
<div class="t" style="left:424.50px;top:678.75px;font-size:14px;line-height:14px;color:#333;transform:scaleX(0.8566);">recv-done.12</div>
<div class="t" style="left:541.40px;top:678.75px;font-size:14px;line-height:14px;color:#333;transform:scaleX(0.8733);">9192025434</div>
<div class="t" style="left:643.80px;top:678.75px;font-size:14px;line-height:14px;color:#333;transform:scaleX(0.8733);">49923018</div>
<div class="t" style="left:796.40px;top:678.75px;font-size:14px;line-height:14px;color:#333;transform:scaleX(0.8733);">6</div>
<div class="t" style="left:1342.90px;top:678.75px;font-size:14px;line-height:14px;color:#333;transform:scaleX(0.8733);">333</div>
<div class="t" style="left:1379.00px;top:678.75px;font-size:14px;line-height:14px;color:#333;transform:scaleX(0.8814);">/device:TPU:0</div>
<div class="t" style="left:284.10px;top:703.75px;font-size:14px;line-height:14px;color:#333;transform:scaleX(0.8733);">663627</div>
<div class="t" style="left:352.50px;top:703.75px;font-size:14px;line-height:14px;color:#3d5a98;transform:scaleX(0.8626);">663627</div>
<div class="r" style="left:352.5px;top:717.6px;width:40.3px;height:1px;background:#3d5a98;"></div>
<svg class="r" style="left:0px;top:0px;" width="1517" height="942" viewBox="0 0 1517 942"><path d="M398 714.8 L405.6 707.2 M400.2 707.0 H405.8 V712.6" fill="none" stroke="#3d5a98" stroke-width="1.4"/></svg>
<div class="t" style="left:424.50px;top:703.75px;font-size:14px;line-height:14px;color:#333;transform:scaleX(0.8566);">recv-done.12</div>
<div class="t" style="left:541.40px;top:703.75px;font-size:14px;line-height:14px;color:#333;transform:scaleX(0.8733);">9192653760</div>
<div class="t" style="left:643.80px;top:703.75px;font-size:14px;line-height:14px;color:#333;transform:scaleX(0.8733);">49671879</div>
<div class="t" style="left:796.40px;top:703.75px;font-size:14px;line-height:14px;color:#333;transform:scaleX(0.8733);">9</div>
<div class="t" style="left:1342.90px;top:703.75px;font-size:14px;line-height:14px;color:#333;transform:scaleX(0.8733);">107</div>
<div class="t" style="left:1379.00px;top:703.75px;font-size:14px;line-height:14px;color:#333;transform:scaleX(0.8814);">/device:TPU:1</div>
<div class="t" style="left:284.10px;top:728.75px;font-size:14px;line-height:14px;color:#333;transform:scaleX(0.8733);">552260</div>
<div class="t" style="left:352.50px;top:728.75px;font-size:14px;line-height:14px;color:#3d5a98;transform:scaleX(0.8626);">552260</div>
<div class="r" style="left:352.5px;top:742.6px;width:40.3px;height:1px;background:#3d5a98;"></div>
<svg class="r" style="left:0px;top:0px;" width="1517" height="942" viewBox="0 0 1517 942"><path d="M398 739.8 L405.6 732.2 M400.2 732.0 H405.8 V737.6" fill="none" stroke="#3d5a98" stroke-width="1.4"/></svg>
<div class="t" style="left:424.50px;top:728.75px;font-size:14px;line-height:14px;color:#333;transform:scaleX(0.8566);">recv-done.12</div>
<div class="t" style="left:541.40px;top:728.75px;font-size:14px;line-height:14px;color:#333;transform:scaleX(0.8733);">7643317278</div>
<div class="t" style="left:643.80px;top:728.75px;font-size:14px;line-height:14px;color:#333;transform:scaleX(0.8733);">46487429</div>
<div class="t" style="left:796.40px;top:728.75px;font-size:14px;line-height:14px;color:#333;transform:scaleX(0.8733);">3</div>
<div class="t" style="left:1342.90px;top:728.75px;font-size:14px;line-height:14px;color:#333;transform:scaleX(0.8733);">100</div>
<div class="t" style="left:1379.00px;top:728.75px;font-size:14px;line-height:14px;color:#333;transform:scaleX(0.8814);">/device:TPU:3</div>
<div class="t" style="left:284.10px;top:753.75px;font-size:14px;line-height:14px;color:#333;transform:scaleX(0.8733);">663664</div>
<div class="t" style="left:352.50px;top:753.75px;font-size:14px;line-height:14px;color:#3d5a98;transform:scaleX(0.8626);">663664</div>
<div class="r" style="left:352.5px;top:767.6px;width:40.3px;height:1px;background:#3d5a98;"></div>
<svg class="r" style="left:0px;top:0px;" width="1517" height="942" viewBox="0 0 1517 942"><path d="M398 764.8 L405.6 757.2 M400.2 757.0 H405.8 V762.6" fill="none" stroke="#3d5a98" stroke-width="1.4"/></svg>
<div class="t" style="left:424.50px;top:753.75px;font-size:14px;line-height:14px;color:#333;transform:scaleX(0.8566);">recv-done.12</div>
<div class="t" style="left:541.40px;top:753.75px;font-size:14px;line-height:14px;color:#333;transform:scaleX(0.8851);">9194313116</div>
<div class="t" style="left:643.80px;top:753.75px;font-size:14px;line-height:14px;color:#333;transform:scaleX(0.8733);">46292474</div>
<div class="t" style="left:796.40px;top:753.75px;font-size:14px;line-height:14px;color:#333;transform:scaleX(0.8733);">3</div>
<div class="t" style="left:1342.90px;top:753.75px;font-size:14px;line-height:14px;color:#333;transform:scaleX(0.8733);">107</div>
<div class="t" style="left:1379.00px;top:753.75px;font-size:14px;line-height:14px;color:#333;transform:scaleX(0.8814);">/device:TPU:3</div>
<div class="t" style="left:284.10px;top:778.75px;font-size:14px;line-height:14px;color:#333;transform:scaleX(0.8733);">997601</div>
<div class="t" style="left:352.50px;top:778.75px;font-size:14px;line-height:14px;color:#3d5a98;transform:scaleX(0.8626);">997601</div>
<div class="r" style="left:352.5px;top:792.6px;width:40.3px;height:1px;background:#3d5a98;"></div>
<svg class="r" style="left:0px;top:0px;" width="1517" height="942" viewBox="0 0 1517 942"><path d="M398 789.8 L405.6 782.2 M400.2 782.0 H405.8 V787.6" fill="none" stroke="#3d5a98" stroke-width="1.4"/></svg>
<div class="t" style="left:424.50px;top:778.75px;font-size:14px;line-height:14px;color:#333;transform:scaleX(0.8566);">recv-done.12</div>
<div class="t" style="left:534.60px;top:778.75px;font-size:14px;line-height:14px;color:#333;transform:scaleX(0.8733);">13831270077</div>
<div class="t" style="left:643.80px;top:778.75px;font-size:14px;line-height:14px;color:#333;transform:scaleX(0.8733);">46178624</div>
<div class="t" style="left:796.40px;top:778.75px;font-size:14px;line-height:14px;color:#333;transform:scaleX(0.8733);">9</div>
<div class="t" style="left:1342.90px;top:778.75px;font-size:14px;line-height:14px;color:#333;transform:scaleX(0.8733);">128</div>
<div class="t" style="left:1379.00px;top:778.75px;font-size:14px;line-height:14px;color:#333;transform:scaleX(0.8814);">/device:TPU:1</div>
<div class="t" style="left:284.10px;top:803.75px;font-size:14px;line-height:14px;color:#333;transform:scaleX(0.8733);">107053</div>
<div class="t" style="left:352.50px;top:803.75px;font-size:14px;line-height:14px;color:#3d5a98;transform:scaleX(0.8626);">107053</div>
<div class="r" style="left:352.5px;top:817.6px;width:40.3px;height:1px;background:#3d5a98;"></div>
<svg class="r" style="left:0px;top:0px;" width="1517" height="942" viewBox="0 0 1517 942"><path d="M398 814.8 L405.6 807.2 M400.2 807.0 H405.8 V812.6" fill="none" stroke="#3d5a98" stroke-width="1.4"/></svg>
<div class="t" style="left:424.50px;top:803.75px;font-size:14px;line-height:14px;color:#333;transform:scaleX(0.8566);">recv-done.12</div>
<div class="t" style="left:541.40px;top:803.75px;font-size:14px;line-height:14px;color:#333;transform:scaleX(0.8733);">1456837851</div>
<div class="t" style="left:643.80px;top:803.75px;font-size:14px;line-height:14px;color:#333;transform:scaleX(0.8733);">45861885</div>
<div class="t" style="left:796.40px;top:803.75px;font-size:14px;line-height:14px;color:#333;transform:scaleX(0.8733);">9</div>
<div class="t" style="left:1349.70px;top:803.75px;font-size:14px;line-height:14px;color:#333;transform:scaleX(0.8733);">72</div>
<div class="t" style="left:1379.00px;top:803.75px;font-size:14px;line-height:14px;color:#333;transform:scaleX(0.8814);">/device:TPU:1</div>
<div class="t" style="left:284.10px;top:828.75px;font-size:14px;line-height:14px;color:#333;transform:scaleX(0.8733);">552327</div>
<div class="t" style="left:352.50px;top:828.75px;font-size:14px;line-height:14px;color:#3d5a98;transform:scaleX(0.8626);">552327</div>
<div class="r" style="left:352.5px;top:842.6px;width:40.3px;height:1px;background:#3d5a98;"></div>
<svg class="r" style="left:0px;top:0px;" width="1517" height="942" viewBox="0 0 1517 942"><path d="M398 839.8 L405.6 832.2 M400.2 832.0 H405.8 V837.6" fill="none" stroke="#3d5a98" stroke-width="1.4"/></svg>
<div class="t" style="left:424.50px;top:828.75px;font-size:14px;line-height:14px;color:#333;transform:scaleX(0.8566);">recv-done.12</div>
<div class="t" style="left:541.40px;top:828.75px;font-size:14px;line-height:14px;color:#333;transform:scaleX(0.8733);">7645471055</div>
<div class="t" style="left:643.80px;top:828.75px;font-size:14px;line-height:14px;color:#333;transform:scaleX(0.8733);">44035192</div>
<div class="t" style="left:789.60px;top:828.75px;font-size:14px;line-height:14px;color:#333;transform:scaleX(0.8733);">12</div>
<div class="t" style="left:1342.90px;top:828.75px;font-size:14px;line-height:14px;color:#333;transform:scaleX(0.8733);">100</div>
<div class="t" style="left:1379.00px;top:828.75px;font-size:14px;line-height:14px;color:#333;transform:scaleX(0.8814);">/device:TPU:2</div>
<div class="t" style="left:284.10px;top:853.75px;font-size:14px;line-height:14px;color:#333;transform:scaleX(0.8733);">218304</div>
<div class="t" style="left:352.50px;top:853.75px;font-size:14px;line-height:14px;color:#3d5a98;transform:scaleX(0.8626);">218304</div>
<div class="r" style="left:352.5px;top:867.6px;width:40.3px;height:1px;background:#3d5a98;"></div>
<svg class="r" style="left:0px;top:0px;" width="1517" height="942" viewBox="0 0 1517 942"><path d="M398 864.8 L405.6 857.2 M400.2 857.0 H405.8 V862.6" fill="none" stroke="#3d5a98" stroke-width="1.4"/></svg>
<div class="t" style="left:424.50px;top:853.75px;font-size:14px;line-height:14px;color:#333;transform:scaleX(0.8566);">recv-done.12</div>
<div class="t" style="left:541.40px;top:853.75px;font-size:14px;line-height:14px;color:#333;transform:scaleX(0.8733);">3010020422</div>
<div class="t" style="left:643.80px;top:853.75px;font-size:14px;line-height:14px;color:#333;transform:scaleX(0.8733);">43945249</div>
<div class="t" style="left:789.60px;top:853.75px;font-size:14px;line-height:14px;color:#333;transform:scaleX(0.8733);">12</div>
<div class="t" style="left:1349.70px;top:853.75px;font-size:14px;line-height:14px;color:#333;transform:scaleX(0.8733);">79</div>
<div class="t" style="left:1379.00px;top:853.75px;font-size:14px;line-height:14px;color:#333;transform:scaleX(0.8814);">/device:TPU:2</div>
<div class="t" style="left:284.10px;top:878.75px;font-size:14px;line-height:14px;color:#333;transform:scaleX(0.8733);">663689</div>
<div class="t" style="left:352.50px;top:878.75px;font-size:14px;line-height:14px;color:#3d5a98;transform:scaleX(0.8626);">663689</div>
<div class="r" style="left:352.5px;top:892.6px;width:40.3px;height:1px;background:#3d5a98;"></div>
<svg class="r" style="left:0px;top:0px;" width="1517" height="942" viewBox="0 0 1517 942"><path d="M398 889.8 L405.6 882.2 M400.2 882.0 H405.8 V887.6" fill="none" stroke="#3d5a98" stroke-width="1.4"/></svg>
<div class="t" style="left:424.50px;top:878.75px;font-size:14px;line-height:14px;color:#333;transform:scaleX(0.8566);">recv-done.12</div>
<div class="t" style="left:541.40px;top:878.75px;font-size:14px;line-height:14px;color:#333;transform:scaleX(0.8733);">9196567056</div>
<div class="t" style="left:643.80px;top:878.75px;font-size:14px;line-height:14px;color:#333;transform:scaleX(0.8733);">42253007</div>
<div class="t" style="left:789.60px;top:878.75px;font-size:14px;line-height:14px;color:#333;transform:scaleX(0.8733);">12</div>
<div class="t" style="left:1342.90px;top:878.75px;font-size:14px;line-height:14px;color:#333;transform:scaleX(0.8733);">107</div>
<div class="t" style="left:1379.00px;top:878.75px;font-size:14px;line-height:14px;color:#333;transform:scaleX(0.8814);">/device:TPU:2</div>
<div class="t" style="left:284.10px;top:903.75px;font-size:14px;line-height:14px;color:#333;transform:scaleX(0.8733);">886248</div>
<div class="t" style="left:352.50px;top:903.75px;font-size:14px;line-height:14px;color:#3d5a98;transform:scaleX(0.8626);">886248</div>
<div class="r" style="left:352.5px;top:917.6px;width:40.3px;height:1px;background:#3d5a98;"></div>
<svg class="r" style="left:0px;top:0px;" width="1517" height="942" viewBox="0 0 1517 942"><path d="M398 914.8 L405.6 907.2 M400.2 907.0 H405.8 V912.6" fill="none" stroke="#3d5a98" stroke-width="1.4"/></svg>
<div class="t" style="left:424.50px;top:903.75px;font-size:14px;line-height:14px;color:#333;transform:scaleX(0.8566);">recv-done.12</div>
<div class="t" style="left:534.60px;top:903.75px;font-size:14px;line-height:14px;color:#333;transform:scaleX(0.8733);">12274450870</div>
<div class="t" style="left:643.80px;top:903.75px;font-size:14px;line-height:14px;color:#333;transform:scaleX(0.8733);">39770437</div>
<div class="t" style="left:796.40px;top:903.75px;font-size:14px;line-height:14px;color:#333;transform:scaleX(0.8733);">9</div>
<div class="t" style="left:1342.90px;top:903.75px;font-size:14px;line-height:14px;color:#333;transform:scaleX(0.8733);">121</div>
<div class="t" style="left:1379.00px;top:903.75px;font-size:14px;line-height:14px;color:#333;transform:scaleX(0.8814);">/device:TPU:1</div>
<div class="r" style="left:1502px;top:64px;width:15px;height:878px;background:#fafafa;"></div>
<svg class="r" style="left:1505px;top:69.5px;" width="9" height="6" viewBox="0 0 9 6"><path d="M0 5.5 L4.5 0.5 L9 5.5Z" fill="#808080"/></svg>
<div class="r" style="left:1505px;top:81.8px;width:9px;height:838.2px;background:#8a8a8a;border-radius:5px;"></div>
<svg class="r" style="left:1505px;top:929.8px;" width="9" height="6" viewBox="0 0 9 6"><path d="M0 0.5 L4.5 5.5 L9 0.5Z" fill="#808080"/></svg>
<svg class="r" style="left:1490px;top:241.5px;" width="9" height="6" viewBox="0 0 9 6"><path d="M0 5.5 L4.5 0.5 L9 5.5Z" fill="#c4c4c4"/></svg>
<div class="r" style="left:1489.5px;top:378px;width:9px;height:104px;background:#c8c8c8;border-radius:5px;"></div>
<svg class="r" style="left:1490px;top:531px;" width="9" height="6" viewBox="0 0 9 6"><path d="M0 0.5 L4.5 5.5 L9 0.5Z" fill="#c4c4c4"/></svg>
<svg class="r" style="left:1490px;top:549px;" width="9" height="6" viewBox="0 0 9 6"><path d="M0 5.5 L4.5 0.5 L9 5.5Z" fill="#c4c4c4"/></svg>
<div class="r" style="left:1489px;top:562.5px;width:10px;height:1px;background:#d0d0d0;"></div>
<svg class="r" style="left:1490px;top:569px;" width="9" height="6" viewBox="0 0 9 6"><path d="M0 0.5 L4.5 5.5 L9 0.5Z" fill="#c4c4c4"/></svg>
<svg class="r" style="left:1490px;top:654px;" width="9" height="6" viewBox="0 0 9 6"><path d="M0 5.5 L4.5 0.5 L9 5.5Z" fill="#c4c4c4"/></svg>
<div class="r" style="left:1490px;top:667px;width:8.5px;height:17px;background:#c8c8c8;border-radius:5px;"></div>
<svg class="r" style="left:1490px;top:906px;" width="9" height="6" viewBox="0 0 9 6"><path d="M0 0.5 L4.5 5.5 L9 0.5Z" fill="#c4c4c4"/></svg>
</body></html>
